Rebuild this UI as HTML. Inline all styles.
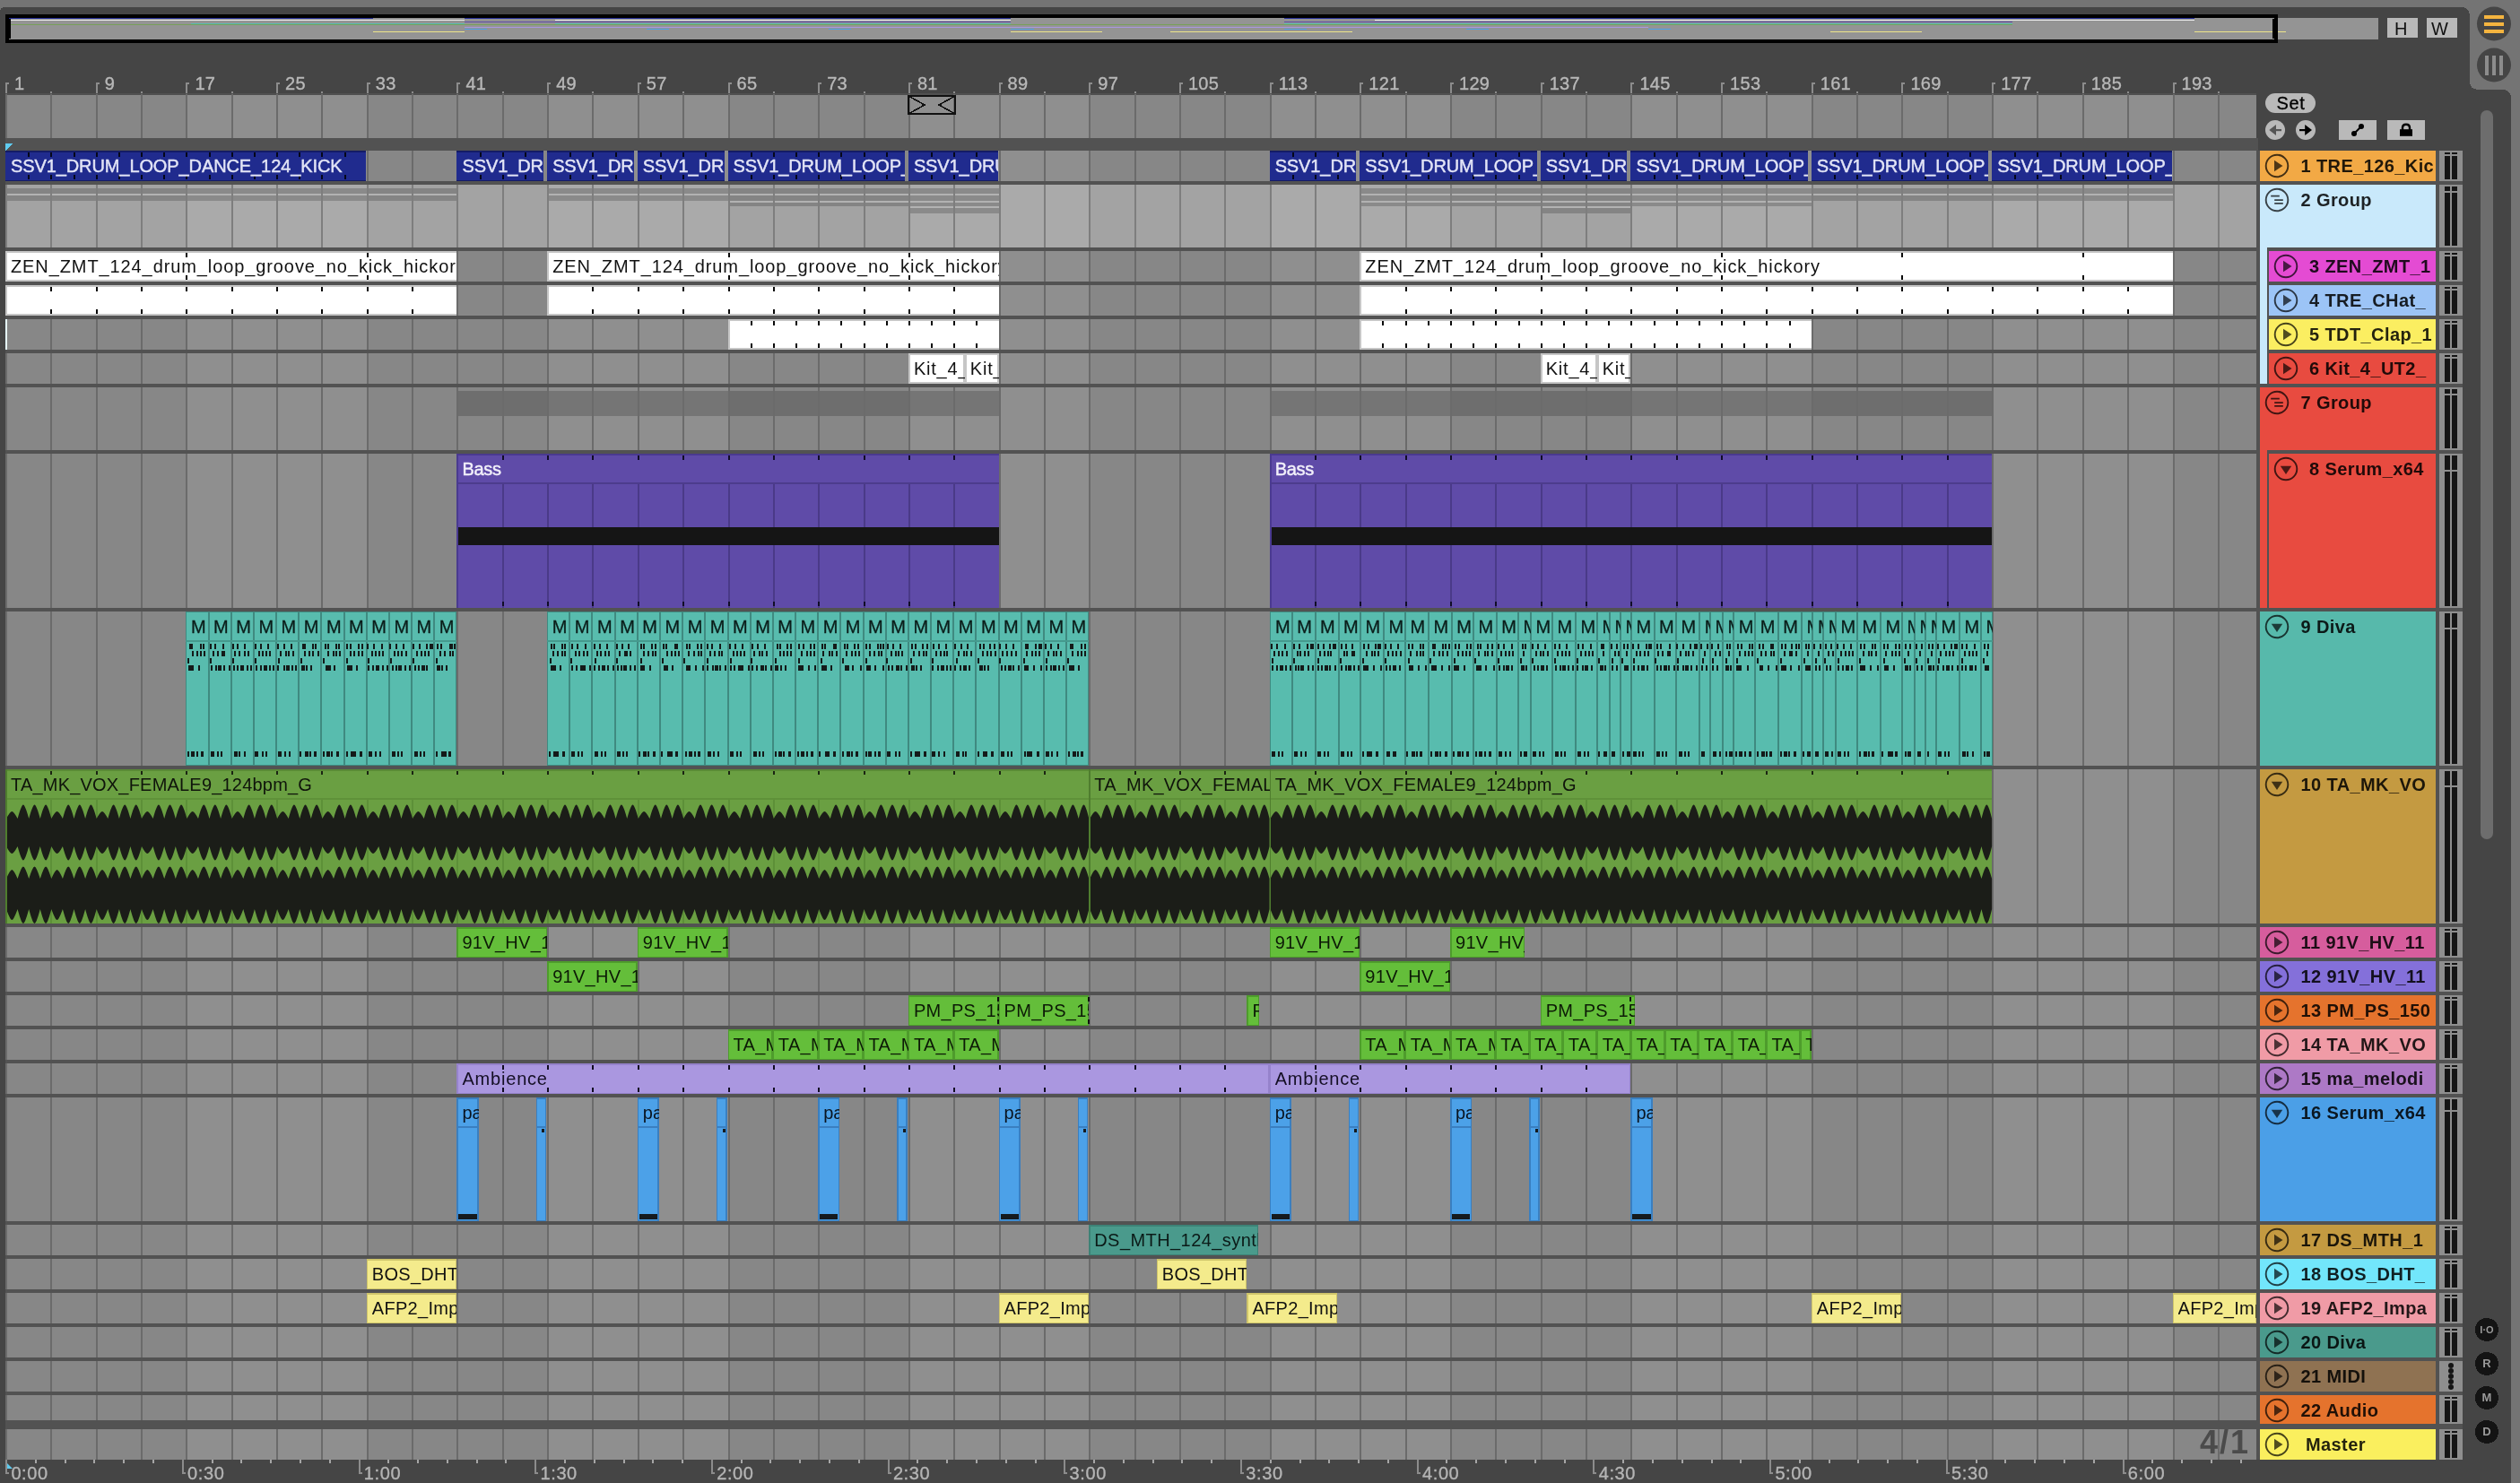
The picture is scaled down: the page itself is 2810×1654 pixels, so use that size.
<!DOCTYPE html>
<html><head><meta charset="utf-8"><title>Arrangement</title>
<style>
html,body{margin:0;padding:0;}
body{width:2810px;height:1654px;position:relative;overflow:hidden;background:#747474;font-family:"Liberation Sans", sans-serif;}
svg{position:absolute;left:0;top:0;}
.t{position:absolute;white-space:nowrap;font-family:"Liberation Sans", sans-serif;}
</style></head><body>
<svg width="2810" height="1654" viewBox="0 0 2810 1654" shape-rendering="crispEdges">
<rect x="0.00" y="0.00" width="2810.00" height="1654.00" fill="#747474"/>
<path d="M0 14 Q0 8 6 8 L2744 8 Q2754 8 2754 18 L2754 90 Q2754 100 2764 100 L2790 100 Q2800 100 2800 110 L2800 1654 L0 1654 Z" fill="#454545"/>
<rect x="6.00" y="105.00" width="201.38" height="49.00" fill="#878787"/>
<rect x="207.38" y="105.00" width="201.38" height="49.00" fill="#8f8f8f"/>
<rect x="408.75" y="105.00" width="201.38" height="49.00" fill="#878787"/>
<rect x="610.13" y="105.00" width="201.38" height="49.00" fill="#8f8f8f"/>
<rect x="811.50" y="105.00" width="201.38" height="49.00" fill="#878787"/>
<rect x="1012.88" y="105.00" width="201.38" height="49.00" fill="#8f8f8f"/>
<rect x="1214.26" y="105.00" width="201.38" height="49.00" fill="#878787"/>
<rect x="1415.63" y="105.00" width="201.38" height="49.00" fill="#8f8f8f"/>
<rect x="1617.01" y="105.00" width="201.38" height="49.00" fill="#878787"/>
<rect x="1818.38" y="105.00" width="201.38" height="49.00" fill="#8f8f8f"/>
<rect x="2019.76" y="105.00" width="201.38" height="49.00" fill="#878787"/>
<rect x="2221.14" y="105.00" width="201.38" height="49.00" fill="#8f8f8f"/>
<rect x="2422.51" y="105.00" width="93.49" height="49.00" fill="#878787"/>
<rect x="6.00" y="104.00" width="2510.00" height="2.00" fill="#505050"/>
<rect x="6.00" y="168.00" width="201.38" height="1460.00" fill="#878787"/>
<rect x="207.38" y="168.00" width="201.38" height="1460.00" fill="#8f8f8f"/>
<rect x="408.75" y="168.00" width="201.38" height="1460.00" fill="#878787"/>
<rect x="610.13" y="168.00" width="201.38" height="1460.00" fill="#8f8f8f"/>
<rect x="811.50" y="168.00" width="201.38" height="1460.00" fill="#878787"/>
<rect x="1012.88" y="168.00" width="201.38" height="1460.00" fill="#8f8f8f"/>
<rect x="1214.26" y="168.00" width="201.38" height="1460.00" fill="#878787"/>
<rect x="1415.63" y="168.00" width="201.38" height="1460.00" fill="#8f8f8f"/>
<rect x="1617.01" y="168.00" width="201.38" height="1460.00" fill="#878787"/>
<rect x="1818.38" y="168.00" width="201.38" height="1460.00" fill="#8f8f8f"/>
<rect x="2019.76" y="168.00" width="201.38" height="1460.00" fill="#878787"/>
<rect x="2221.14" y="168.00" width="201.38" height="1460.00" fill="#8f8f8f"/>
<rect x="2422.51" y="168.00" width="93.49" height="1460.00" fill="#878787"/>
<rect x="6.00" y="206.00" width="201.38" height="70.00" fill="#a3a3a3"/>
<rect x="207.38" y="206.00" width="201.38" height="70.00" fill="#aaaaaa"/>
<rect x="408.75" y="206.00" width="201.38" height="70.00" fill="#a3a3a3"/>
<rect x="610.13" y="206.00" width="201.38" height="70.00" fill="#aaaaaa"/>
<rect x="811.50" y="206.00" width="201.38" height="70.00" fill="#a3a3a3"/>
<rect x="1012.88" y="206.00" width="201.38" height="70.00" fill="#aaaaaa"/>
<rect x="1214.26" y="206.00" width="201.38" height="70.00" fill="#a3a3a3"/>
<rect x="1415.63" y="206.00" width="201.38" height="70.00" fill="#aaaaaa"/>
<rect x="1617.01" y="206.00" width="201.38" height="70.00" fill="#a3a3a3"/>
<rect x="1818.38" y="206.00" width="201.38" height="70.00" fill="#aaaaaa"/>
<rect x="2019.76" y="206.00" width="201.38" height="70.00" fill="#a3a3a3"/>
<rect x="2221.14" y="206.00" width="201.38" height="70.00" fill="#aaaaaa"/>
<rect x="2422.51" y="206.00" width="93.49" height="70.00" fill="#a3a3a3"/>
<rect x="0.00" y="154.00" width="2518.00" height="14.00" fill="#525252"/>
<rect x="6.00" y="210.00" width="503.44" height="6.00" fill="rgba(0,0,0,0.19)"/>
<rect x="6.00" y="218.00" width="503.44" height="6.00" fill="rgba(0,0,0,0.19)"/>
<rect x="610.13" y="210.00" width="503.44" height="6.00" fill="rgba(0,0,0,0.19)"/>
<rect x="610.13" y="218.00" width="503.44" height="6.00" fill="rgba(0,0,0,0.19)"/>
<rect x="1516.32" y="210.00" width="906.19" height="6.00" fill="rgba(0,0,0,0.19)"/>
<rect x="1516.32" y="218.00" width="906.19" height="6.00" fill="rgba(0,0,0,0.19)"/>
<rect x="811.50" y="226.00" width="302.06" height="4.00" fill="rgba(0,0,0,0.19)"/>
<rect x="1516.32" y="226.00" width="503.44" height="4.00" fill="rgba(0,0,0,0.19)"/>
<rect x="1012.88" y="232.00" width="100.69" height="6.00" fill="rgba(0,0,0,0.19)"/>
<rect x="1717.70" y="232.00" width="100.69" height="6.00" fill="rgba(0,0,0,0.19)"/>
<rect x="6.00" y="216.00" width="503.44" height="2.00" fill="#b2b2b2"/>
<rect x="610.13" y="216.00" width="503.44" height="2.00" fill="#b2b2b2"/>
<rect x="1516.32" y="216.00" width="906.19" height="2.00" fill="#b2b2b2"/>
<rect x="811.50" y="224.00" width="302.06" height="2.00" fill="#b2b2b2"/>
<rect x="1516.32" y="224.00" width="503.44" height="2.00" fill="#b2b2b2"/>
<rect x="1012.88" y="230.00" width="100.69" height="2.00" fill="#b2b2b2"/>
<rect x="1717.70" y="230.00" width="100.69" height="2.00" fill="#b2b2b2"/>
<rect x="509.44" y="436.00" width="604.13" height="28.00" fill="rgba(0,0,0,0.18)"/>
<rect x="1415.63" y="436.00" width="805.50" height="28.00" fill="rgba(0,0,0,0.18)"/>
<rect x="6.00" y="105.00" width="2.00" height="49.00" fill="#6b6b6b"/>
<rect x="6.00" y="168.00" width="2.00" height="1460.00" fill="#6b6b6b"/>
<rect x="6.00" y="206.00" width="2.00" height="70.00" fill="#7e7e7e"/>
<rect x="56.34" y="105.00" width="2.00" height="49.00" fill="#6b6b6b"/>
<rect x="56.34" y="168.00" width="2.00" height="1460.00" fill="#6b6b6b"/>
<rect x="56.34" y="206.00" width="2.00" height="70.00" fill="#7e7e7e"/>
<rect x="106.69" y="105.00" width="2.00" height="49.00" fill="#6b6b6b"/>
<rect x="106.69" y="168.00" width="2.00" height="1460.00" fill="#6b6b6b"/>
<rect x="106.69" y="206.00" width="2.00" height="70.00" fill="#7e7e7e"/>
<rect x="157.03" y="105.00" width="2.00" height="49.00" fill="#6b6b6b"/>
<rect x="157.03" y="168.00" width="2.00" height="1460.00" fill="#6b6b6b"/>
<rect x="157.03" y="206.00" width="2.00" height="70.00" fill="#7e7e7e"/>
<rect x="207.38" y="105.00" width="2.00" height="49.00" fill="#6b6b6b"/>
<rect x="207.38" y="168.00" width="2.00" height="1460.00" fill="#6b6b6b"/>
<rect x="207.38" y="206.00" width="2.00" height="70.00" fill="#7e7e7e"/>
<rect x="257.72" y="105.00" width="2.00" height="49.00" fill="#6b6b6b"/>
<rect x="257.72" y="168.00" width="2.00" height="1460.00" fill="#6b6b6b"/>
<rect x="257.72" y="206.00" width="2.00" height="70.00" fill="#7e7e7e"/>
<rect x="308.06" y="105.00" width="2.00" height="49.00" fill="#6b6b6b"/>
<rect x="308.06" y="168.00" width="2.00" height="1460.00" fill="#6b6b6b"/>
<rect x="308.06" y="206.00" width="2.00" height="70.00" fill="#7e7e7e"/>
<rect x="358.41" y="105.00" width="2.00" height="49.00" fill="#6b6b6b"/>
<rect x="358.41" y="168.00" width="2.00" height="1460.00" fill="#6b6b6b"/>
<rect x="358.41" y="206.00" width="2.00" height="70.00" fill="#7e7e7e"/>
<rect x="408.75" y="105.00" width="2.00" height="49.00" fill="#6b6b6b"/>
<rect x="408.75" y="168.00" width="2.00" height="1460.00" fill="#6b6b6b"/>
<rect x="408.75" y="206.00" width="2.00" height="70.00" fill="#7e7e7e"/>
<rect x="459.10" y="105.00" width="2.00" height="49.00" fill="#6b6b6b"/>
<rect x="459.10" y="168.00" width="2.00" height="1460.00" fill="#6b6b6b"/>
<rect x="459.10" y="206.00" width="2.00" height="70.00" fill="#7e7e7e"/>
<rect x="509.44" y="105.00" width="2.00" height="49.00" fill="#6b6b6b"/>
<rect x="509.44" y="168.00" width="2.00" height="1460.00" fill="#6b6b6b"/>
<rect x="509.44" y="206.00" width="2.00" height="70.00" fill="#7e7e7e"/>
<rect x="559.78" y="105.00" width="2.00" height="49.00" fill="#6b6b6b"/>
<rect x="559.78" y="168.00" width="2.00" height="1460.00" fill="#6b6b6b"/>
<rect x="559.78" y="206.00" width="2.00" height="70.00" fill="#7e7e7e"/>
<rect x="610.13" y="105.00" width="2.00" height="49.00" fill="#6b6b6b"/>
<rect x="610.13" y="168.00" width="2.00" height="1460.00" fill="#6b6b6b"/>
<rect x="610.13" y="206.00" width="2.00" height="70.00" fill="#7e7e7e"/>
<rect x="660.47" y="105.00" width="2.00" height="49.00" fill="#6b6b6b"/>
<rect x="660.47" y="168.00" width="2.00" height="1460.00" fill="#6b6b6b"/>
<rect x="660.47" y="206.00" width="2.00" height="70.00" fill="#7e7e7e"/>
<rect x="710.82" y="105.00" width="2.00" height="49.00" fill="#6b6b6b"/>
<rect x="710.82" y="168.00" width="2.00" height="1460.00" fill="#6b6b6b"/>
<rect x="710.82" y="206.00" width="2.00" height="70.00" fill="#7e7e7e"/>
<rect x="761.16" y="105.00" width="2.00" height="49.00" fill="#6b6b6b"/>
<rect x="761.16" y="168.00" width="2.00" height="1460.00" fill="#6b6b6b"/>
<rect x="761.16" y="206.00" width="2.00" height="70.00" fill="#7e7e7e"/>
<rect x="811.50" y="105.00" width="2.00" height="49.00" fill="#6b6b6b"/>
<rect x="811.50" y="168.00" width="2.00" height="1460.00" fill="#6b6b6b"/>
<rect x="811.50" y="206.00" width="2.00" height="70.00" fill="#7e7e7e"/>
<rect x="861.85" y="105.00" width="2.00" height="49.00" fill="#6b6b6b"/>
<rect x="861.85" y="168.00" width="2.00" height="1460.00" fill="#6b6b6b"/>
<rect x="861.85" y="206.00" width="2.00" height="70.00" fill="#7e7e7e"/>
<rect x="912.19" y="105.00" width="2.00" height="49.00" fill="#6b6b6b"/>
<rect x="912.19" y="168.00" width="2.00" height="1460.00" fill="#6b6b6b"/>
<rect x="912.19" y="206.00" width="2.00" height="70.00" fill="#7e7e7e"/>
<rect x="962.54" y="105.00" width="2.00" height="49.00" fill="#6b6b6b"/>
<rect x="962.54" y="168.00" width="2.00" height="1460.00" fill="#6b6b6b"/>
<rect x="962.54" y="206.00" width="2.00" height="70.00" fill="#7e7e7e"/>
<rect x="1012.88" y="105.00" width="2.00" height="49.00" fill="#6b6b6b"/>
<rect x="1012.88" y="168.00" width="2.00" height="1460.00" fill="#6b6b6b"/>
<rect x="1012.88" y="206.00" width="2.00" height="70.00" fill="#7e7e7e"/>
<rect x="1063.22" y="105.00" width="2.00" height="49.00" fill="#6b6b6b"/>
<rect x="1063.22" y="168.00" width="2.00" height="1460.00" fill="#6b6b6b"/>
<rect x="1063.22" y="206.00" width="2.00" height="70.00" fill="#7e7e7e"/>
<rect x="1113.57" y="105.00" width="2.00" height="49.00" fill="#6b6b6b"/>
<rect x="1113.57" y="168.00" width="2.00" height="1460.00" fill="#6b6b6b"/>
<rect x="1113.57" y="206.00" width="2.00" height="70.00" fill="#7e7e7e"/>
<rect x="1163.91" y="105.00" width="2.00" height="49.00" fill="#6b6b6b"/>
<rect x="1163.91" y="168.00" width="2.00" height="1460.00" fill="#6b6b6b"/>
<rect x="1163.91" y="206.00" width="2.00" height="70.00" fill="#7e7e7e"/>
<rect x="1214.26" y="105.00" width="2.00" height="49.00" fill="#6b6b6b"/>
<rect x="1214.26" y="168.00" width="2.00" height="1460.00" fill="#6b6b6b"/>
<rect x="1214.26" y="206.00" width="2.00" height="70.00" fill="#7e7e7e"/>
<rect x="1264.60" y="105.00" width="2.00" height="49.00" fill="#6b6b6b"/>
<rect x="1264.60" y="168.00" width="2.00" height="1460.00" fill="#6b6b6b"/>
<rect x="1264.60" y="206.00" width="2.00" height="70.00" fill="#7e7e7e"/>
<rect x="1314.94" y="105.00" width="2.00" height="49.00" fill="#6b6b6b"/>
<rect x="1314.94" y="168.00" width="2.00" height="1460.00" fill="#6b6b6b"/>
<rect x="1314.94" y="206.00" width="2.00" height="70.00" fill="#7e7e7e"/>
<rect x="1365.29" y="105.00" width="2.00" height="49.00" fill="#6b6b6b"/>
<rect x="1365.29" y="168.00" width="2.00" height="1460.00" fill="#6b6b6b"/>
<rect x="1365.29" y="206.00" width="2.00" height="70.00" fill="#7e7e7e"/>
<rect x="1415.63" y="105.00" width="2.00" height="49.00" fill="#6b6b6b"/>
<rect x="1415.63" y="168.00" width="2.00" height="1460.00" fill="#6b6b6b"/>
<rect x="1415.63" y="206.00" width="2.00" height="70.00" fill="#7e7e7e"/>
<rect x="1465.98" y="105.00" width="2.00" height="49.00" fill="#6b6b6b"/>
<rect x="1465.98" y="168.00" width="2.00" height="1460.00" fill="#6b6b6b"/>
<rect x="1465.98" y="206.00" width="2.00" height="70.00" fill="#7e7e7e"/>
<rect x="1516.32" y="105.00" width="2.00" height="49.00" fill="#6b6b6b"/>
<rect x="1516.32" y="168.00" width="2.00" height="1460.00" fill="#6b6b6b"/>
<rect x="1516.32" y="206.00" width="2.00" height="70.00" fill="#7e7e7e"/>
<rect x="1566.66" y="105.00" width="2.00" height="49.00" fill="#6b6b6b"/>
<rect x="1566.66" y="168.00" width="2.00" height="1460.00" fill="#6b6b6b"/>
<rect x="1566.66" y="206.00" width="2.00" height="70.00" fill="#7e7e7e"/>
<rect x="1617.01" y="105.00" width="2.00" height="49.00" fill="#6b6b6b"/>
<rect x="1617.01" y="168.00" width="2.00" height="1460.00" fill="#6b6b6b"/>
<rect x="1617.01" y="206.00" width="2.00" height="70.00" fill="#7e7e7e"/>
<rect x="1667.35" y="105.00" width="2.00" height="49.00" fill="#6b6b6b"/>
<rect x="1667.35" y="168.00" width="2.00" height="1460.00" fill="#6b6b6b"/>
<rect x="1667.35" y="206.00" width="2.00" height="70.00" fill="#7e7e7e"/>
<rect x="1717.70" y="105.00" width="2.00" height="49.00" fill="#6b6b6b"/>
<rect x="1717.70" y="168.00" width="2.00" height="1460.00" fill="#6b6b6b"/>
<rect x="1717.70" y="206.00" width="2.00" height="70.00" fill="#7e7e7e"/>
<rect x="1768.04" y="105.00" width="2.00" height="49.00" fill="#6b6b6b"/>
<rect x="1768.04" y="168.00" width="2.00" height="1460.00" fill="#6b6b6b"/>
<rect x="1768.04" y="206.00" width="2.00" height="70.00" fill="#7e7e7e"/>
<rect x="1818.38" y="105.00" width="2.00" height="49.00" fill="#6b6b6b"/>
<rect x="1818.38" y="168.00" width="2.00" height="1460.00" fill="#6b6b6b"/>
<rect x="1818.38" y="206.00" width="2.00" height="70.00" fill="#7e7e7e"/>
<rect x="1868.73" y="105.00" width="2.00" height="49.00" fill="#6b6b6b"/>
<rect x="1868.73" y="168.00" width="2.00" height="1460.00" fill="#6b6b6b"/>
<rect x="1868.73" y="206.00" width="2.00" height="70.00" fill="#7e7e7e"/>
<rect x="1919.07" y="105.00" width="2.00" height="49.00" fill="#6b6b6b"/>
<rect x="1919.07" y="168.00" width="2.00" height="1460.00" fill="#6b6b6b"/>
<rect x="1919.07" y="206.00" width="2.00" height="70.00" fill="#7e7e7e"/>
<rect x="1969.42" y="105.00" width="2.00" height="49.00" fill="#6b6b6b"/>
<rect x="1969.42" y="168.00" width="2.00" height="1460.00" fill="#6b6b6b"/>
<rect x="1969.42" y="206.00" width="2.00" height="70.00" fill="#7e7e7e"/>
<rect x="2019.76" y="105.00" width="2.00" height="49.00" fill="#6b6b6b"/>
<rect x="2019.76" y="168.00" width="2.00" height="1460.00" fill="#6b6b6b"/>
<rect x="2019.76" y="206.00" width="2.00" height="70.00" fill="#7e7e7e"/>
<rect x="2070.10" y="105.00" width="2.00" height="49.00" fill="#6b6b6b"/>
<rect x="2070.10" y="168.00" width="2.00" height="1460.00" fill="#6b6b6b"/>
<rect x="2070.10" y="206.00" width="2.00" height="70.00" fill="#7e7e7e"/>
<rect x="2120.45" y="105.00" width="2.00" height="49.00" fill="#6b6b6b"/>
<rect x="2120.45" y="168.00" width="2.00" height="1460.00" fill="#6b6b6b"/>
<rect x="2120.45" y="206.00" width="2.00" height="70.00" fill="#7e7e7e"/>
<rect x="2170.79" y="105.00" width="2.00" height="49.00" fill="#6b6b6b"/>
<rect x="2170.79" y="168.00" width="2.00" height="1460.00" fill="#6b6b6b"/>
<rect x="2170.79" y="206.00" width="2.00" height="70.00" fill="#7e7e7e"/>
<rect x="2221.14" y="105.00" width="2.00" height="49.00" fill="#6b6b6b"/>
<rect x="2221.14" y="168.00" width="2.00" height="1460.00" fill="#6b6b6b"/>
<rect x="2221.14" y="206.00" width="2.00" height="70.00" fill="#7e7e7e"/>
<rect x="2271.48" y="105.00" width="2.00" height="49.00" fill="#6b6b6b"/>
<rect x="2271.48" y="168.00" width="2.00" height="1460.00" fill="#6b6b6b"/>
<rect x="2271.48" y="206.00" width="2.00" height="70.00" fill="#7e7e7e"/>
<rect x="2321.82" y="105.00" width="2.00" height="49.00" fill="#6b6b6b"/>
<rect x="2321.82" y="168.00" width="2.00" height="1460.00" fill="#6b6b6b"/>
<rect x="2321.82" y="206.00" width="2.00" height="70.00" fill="#7e7e7e"/>
<rect x="2372.17" y="105.00" width="2.00" height="49.00" fill="#6b6b6b"/>
<rect x="2372.17" y="168.00" width="2.00" height="1460.00" fill="#6b6b6b"/>
<rect x="2372.17" y="206.00" width="2.00" height="70.00" fill="#7e7e7e"/>
<rect x="2422.51" y="105.00" width="2.00" height="49.00" fill="#6b6b6b"/>
<rect x="2422.51" y="168.00" width="2.00" height="1460.00" fill="#6b6b6b"/>
<rect x="2422.51" y="206.00" width="2.00" height="70.00" fill="#7e7e7e"/>
<rect x="2472.86" y="105.00" width="2.00" height="49.00" fill="#6b6b6b"/>
<rect x="2472.86" y="168.00" width="2.00" height="1460.00" fill="#6b6b6b"/>
<rect x="2472.86" y="206.00" width="2.00" height="70.00" fill="#7e7e7e"/>
<rect x="0.00" y="202.00" width="2520.00" height="4.00" fill="#525252"/>
<rect x="0.00" y="276.00" width="2520.00" height="4.00" fill="#525252"/>
<rect x="0.00" y="314.00" width="2520.00" height="4.00" fill="#525252"/>
<rect x="0.00" y="352.00" width="2520.00" height="4.00" fill="#525252"/>
<rect x="0.00" y="390.00" width="2520.00" height="4.00" fill="#525252"/>
<rect x="0.00" y="428.00" width="2520.00" height="4.00" fill="#525252"/>
<rect x="0.00" y="502.00" width="2520.00" height="4.00" fill="#525252"/>
<rect x="0.00" y="678.00" width="2520.00" height="4.00" fill="#525252"/>
<rect x="0.00" y="854.00" width="2520.00" height="4.00" fill="#525252"/>
<rect x="0.00" y="1030.00" width="2520.00" height="4.00" fill="#525252"/>
<rect x="0.00" y="1068.00" width="2520.00" height="4.00" fill="#525252"/>
<rect x="0.00" y="1106.00" width="2520.00" height="4.00" fill="#525252"/>
<rect x="0.00" y="1144.00" width="2520.00" height="4.00" fill="#525252"/>
<rect x="0.00" y="1182.00" width="2520.00" height="4.00" fill="#525252"/>
<rect x="0.00" y="1220.00" width="2520.00" height="4.00" fill="#525252"/>
<rect x="0.00" y="1362.00" width="2520.00" height="4.00" fill="#525252"/>
<rect x="0.00" y="1400.00" width="2520.00" height="4.00" fill="#525252"/>
<rect x="0.00" y="1438.00" width="2520.00" height="4.00" fill="#525252"/>
<rect x="0.00" y="1476.00" width="2520.00" height="4.00" fill="#525252"/>
<rect x="0.00" y="1514.00" width="2520.00" height="4.00" fill="#525252"/>
<rect x="0.00" y="1552.00" width="2520.00" height="4.00" fill="#525252"/>
<rect x="0.00" y="1584.00" width="2520.00" height="10.00" fill="#525252"/>
<rect x="0.00" y="105.00" width="6.00" height="1523.00" fill="#454545"/>
<rect x="2516.00" y="168.00" width="4.00" height="1460.00" fill="#525252"/>
<rect x="0.00" y="1628.00" width="2520.00" height="26.00" fill="#454545"/>
<rect x="6.00" y="168.00" width="401.75" height="34.00" fill="#202B8E"/>
<rect x="6.00" y="168.00" width="401.75" height="1.50" fill="#141c66"/>
<rect x="6.00" y="200.50" width="401.75" height="1.50" fill="#141c66"/>
<rect x="31.17" y="170.00" width="2.00" height="5.00" fill="#05071a"/>
<rect x="31.17" y="195.00" width="2.00" height="5.00" fill="#05071a"/>
<rect x="56.34" y="170.00" width="2.00" height="5.00" fill="#05071a"/>
<rect x="56.34" y="195.00" width="2.00" height="5.00" fill="#05071a"/>
<rect x="81.52" y="170.00" width="2.00" height="5.00" fill="#05071a"/>
<rect x="81.52" y="195.00" width="2.00" height="5.00" fill="#05071a"/>
<rect x="106.69" y="170.00" width="2.00" height="5.00" fill="#05071a"/>
<rect x="106.69" y="195.00" width="2.00" height="5.00" fill="#05071a"/>
<rect x="131.86" y="170.00" width="2.00" height="5.00" fill="#05071a"/>
<rect x="131.86" y="195.00" width="2.00" height="5.00" fill="#05071a"/>
<rect x="157.03" y="170.00" width="2.00" height="5.00" fill="#05071a"/>
<rect x="157.03" y="195.00" width="2.00" height="5.00" fill="#05071a"/>
<rect x="182.20" y="170.00" width="2.00" height="5.00" fill="#05071a"/>
<rect x="182.20" y="195.00" width="2.00" height="5.00" fill="#05071a"/>
<rect x="207.38" y="170.00" width="2.00" height="5.00" fill="#05071a"/>
<rect x="207.38" y="195.00" width="2.00" height="5.00" fill="#05071a"/>
<rect x="232.55" y="170.00" width="2.00" height="5.00" fill="#05071a"/>
<rect x="232.55" y="195.00" width="2.00" height="5.00" fill="#05071a"/>
<rect x="257.72" y="170.00" width="2.00" height="5.00" fill="#05071a"/>
<rect x="257.72" y="195.00" width="2.00" height="5.00" fill="#05071a"/>
<rect x="282.89" y="170.00" width="2.00" height="5.00" fill="#05071a"/>
<rect x="282.89" y="195.00" width="2.00" height="5.00" fill="#05071a"/>
<rect x="308.06" y="170.00" width="2.00" height="5.00" fill="#05071a"/>
<rect x="308.06" y="195.00" width="2.00" height="5.00" fill="#05071a"/>
<rect x="333.24" y="170.00" width="2.00" height="5.00" fill="#05071a"/>
<rect x="333.24" y="195.00" width="2.00" height="5.00" fill="#05071a"/>
<rect x="358.41" y="170.00" width="2.00" height="5.00" fill="#05071a"/>
<rect x="358.41" y="195.00" width="2.00" height="5.00" fill="#05071a"/>
<rect x="383.58" y="170.00" width="2.00" height="5.00" fill="#05071a"/>
<rect x="383.58" y="195.00" width="2.00" height="5.00" fill="#05071a"/>
<rect x="509.44" y="168.00" width="96.69" height="34.00" fill="#202B8E"/>
<rect x="509.44" y="168.00" width="96.69" height="1.50" fill="#141c66"/>
<rect x="509.44" y="200.50" width="96.69" height="1.50" fill="#141c66"/>
<rect x="534.61" y="170.00" width="2.00" height="5.00" fill="#05071a"/>
<rect x="534.61" y="195.00" width="2.00" height="5.00" fill="#05071a"/>
<rect x="559.78" y="170.00" width="2.00" height="5.00" fill="#05071a"/>
<rect x="559.78" y="195.00" width="2.00" height="5.00" fill="#05071a"/>
<rect x="584.96" y="170.00" width="2.00" height="5.00" fill="#05071a"/>
<rect x="584.96" y="195.00" width="2.00" height="5.00" fill="#05071a"/>
<rect x="610.13" y="168.00" width="96.69" height="34.00" fill="#202B8E"/>
<rect x="610.13" y="168.00" width="96.69" height="1.50" fill="#141c66"/>
<rect x="610.13" y="200.50" width="96.69" height="1.50" fill="#141c66"/>
<rect x="635.30" y="170.00" width="2.00" height="5.00" fill="#05071a"/>
<rect x="635.30" y="195.00" width="2.00" height="5.00" fill="#05071a"/>
<rect x="660.47" y="170.00" width="2.00" height="5.00" fill="#05071a"/>
<rect x="660.47" y="195.00" width="2.00" height="5.00" fill="#05071a"/>
<rect x="685.64" y="170.00" width="2.00" height="5.00" fill="#05071a"/>
<rect x="685.64" y="195.00" width="2.00" height="5.00" fill="#05071a"/>
<rect x="710.82" y="168.00" width="96.69" height="34.00" fill="#202B8E"/>
<rect x="710.82" y="168.00" width="96.69" height="1.50" fill="#141c66"/>
<rect x="710.82" y="200.50" width="96.69" height="1.50" fill="#141c66"/>
<rect x="735.99" y="170.00" width="2.00" height="5.00" fill="#05071a"/>
<rect x="735.99" y="195.00" width="2.00" height="5.00" fill="#05071a"/>
<rect x="761.16" y="170.00" width="2.00" height="5.00" fill="#05071a"/>
<rect x="761.16" y="195.00" width="2.00" height="5.00" fill="#05071a"/>
<rect x="786.33" y="170.00" width="2.00" height="5.00" fill="#05071a"/>
<rect x="786.33" y="195.00" width="2.00" height="5.00" fill="#05071a"/>
<rect x="811.50" y="168.00" width="197.38" height="34.00" fill="#202B8E"/>
<rect x="811.50" y="168.00" width="197.38" height="1.50" fill="#141c66"/>
<rect x="811.50" y="200.50" width="197.38" height="1.50" fill="#141c66"/>
<rect x="836.68" y="170.00" width="2.00" height="5.00" fill="#05071a"/>
<rect x="836.68" y="195.00" width="2.00" height="5.00" fill="#05071a"/>
<rect x="861.85" y="170.00" width="2.00" height="5.00" fill="#05071a"/>
<rect x="861.85" y="195.00" width="2.00" height="5.00" fill="#05071a"/>
<rect x="887.02" y="170.00" width="2.00" height="5.00" fill="#05071a"/>
<rect x="887.02" y="195.00" width="2.00" height="5.00" fill="#05071a"/>
<rect x="912.19" y="170.00" width="2.00" height="5.00" fill="#05071a"/>
<rect x="912.19" y="195.00" width="2.00" height="5.00" fill="#05071a"/>
<rect x="937.36" y="170.00" width="2.00" height="5.00" fill="#05071a"/>
<rect x="937.36" y="195.00" width="2.00" height="5.00" fill="#05071a"/>
<rect x="962.54" y="170.00" width="2.00" height="5.00" fill="#05071a"/>
<rect x="962.54" y="195.00" width="2.00" height="5.00" fill="#05071a"/>
<rect x="987.71" y="170.00" width="2.00" height="5.00" fill="#05071a"/>
<rect x="987.71" y="195.00" width="2.00" height="5.00" fill="#05071a"/>
<rect x="1012.88" y="168.00" width="99.69" height="34.00" fill="#202B8E"/>
<rect x="1012.88" y="168.00" width="99.69" height="1.50" fill="#141c66"/>
<rect x="1012.88" y="200.50" width="99.69" height="1.50" fill="#141c66"/>
<rect x="1038.05" y="170.00" width="2.00" height="5.00" fill="#05071a"/>
<rect x="1038.05" y="195.00" width="2.00" height="5.00" fill="#05071a"/>
<rect x="1063.22" y="170.00" width="2.00" height="5.00" fill="#05071a"/>
<rect x="1063.22" y="195.00" width="2.00" height="5.00" fill="#05071a"/>
<rect x="1088.40" y="170.00" width="2.00" height="5.00" fill="#05071a"/>
<rect x="1088.40" y="195.00" width="2.00" height="5.00" fill="#05071a"/>
<rect x="1415.63" y="168.00" width="96.69" height="34.00" fill="#202B8E"/>
<rect x="1415.63" y="168.00" width="96.69" height="1.50" fill="#141c66"/>
<rect x="1415.63" y="200.50" width="96.69" height="1.50" fill="#141c66"/>
<rect x="1440.80" y="170.00" width="2.00" height="5.00" fill="#05071a"/>
<rect x="1440.80" y="195.00" width="2.00" height="5.00" fill="#05071a"/>
<rect x="1465.98" y="170.00" width="2.00" height="5.00" fill="#05071a"/>
<rect x="1465.98" y="195.00" width="2.00" height="5.00" fill="#05071a"/>
<rect x="1491.15" y="170.00" width="2.00" height="5.00" fill="#05071a"/>
<rect x="1491.15" y="195.00" width="2.00" height="5.00" fill="#05071a"/>
<rect x="1516.32" y="168.00" width="197.38" height="34.00" fill="#202B8E"/>
<rect x="1516.32" y="168.00" width="197.38" height="1.50" fill="#141c66"/>
<rect x="1516.32" y="200.50" width="197.38" height="1.50" fill="#141c66"/>
<rect x="1541.49" y="170.00" width="2.00" height="5.00" fill="#05071a"/>
<rect x="1541.49" y="195.00" width="2.00" height="5.00" fill="#05071a"/>
<rect x="1566.66" y="170.00" width="2.00" height="5.00" fill="#05071a"/>
<rect x="1566.66" y="195.00" width="2.00" height="5.00" fill="#05071a"/>
<rect x="1591.84" y="170.00" width="2.00" height="5.00" fill="#05071a"/>
<rect x="1591.84" y="195.00" width="2.00" height="5.00" fill="#05071a"/>
<rect x="1617.01" y="170.00" width="2.00" height="5.00" fill="#05071a"/>
<rect x="1617.01" y="195.00" width="2.00" height="5.00" fill="#05071a"/>
<rect x="1642.18" y="170.00" width="2.00" height="5.00" fill="#05071a"/>
<rect x="1642.18" y="195.00" width="2.00" height="5.00" fill="#05071a"/>
<rect x="1667.35" y="170.00" width="2.00" height="5.00" fill="#05071a"/>
<rect x="1667.35" y="195.00" width="2.00" height="5.00" fill="#05071a"/>
<rect x="1692.52" y="170.00" width="2.00" height="5.00" fill="#05071a"/>
<rect x="1692.52" y="195.00" width="2.00" height="5.00" fill="#05071a"/>
<rect x="1717.70" y="168.00" width="96.69" height="34.00" fill="#202B8E"/>
<rect x="1717.70" y="168.00" width="96.69" height="1.50" fill="#141c66"/>
<rect x="1717.70" y="200.50" width="96.69" height="1.50" fill="#141c66"/>
<rect x="1742.87" y="170.00" width="2.00" height="5.00" fill="#05071a"/>
<rect x="1742.87" y="195.00" width="2.00" height="5.00" fill="#05071a"/>
<rect x="1768.04" y="170.00" width="2.00" height="5.00" fill="#05071a"/>
<rect x="1768.04" y="195.00" width="2.00" height="5.00" fill="#05071a"/>
<rect x="1793.21" y="170.00" width="2.00" height="5.00" fill="#05071a"/>
<rect x="1793.21" y="195.00" width="2.00" height="5.00" fill="#05071a"/>
<rect x="1818.38" y="168.00" width="197.38" height="34.00" fill="#202B8E"/>
<rect x="1818.38" y="168.00" width="197.38" height="1.50" fill="#141c66"/>
<rect x="1818.38" y="200.50" width="197.38" height="1.50" fill="#141c66"/>
<rect x="1843.56" y="170.00" width="2.00" height="5.00" fill="#05071a"/>
<rect x="1843.56" y="195.00" width="2.00" height="5.00" fill="#05071a"/>
<rect x="1868.73" y="170.00" width="2.00" height="5.00" fill="#05071a"/>
<rect x="1868.73" y="195.00" width="2.00" height="5.00" fill="#05071a"/>
<rect x="1893.90" y="170.00" width="2.00" height="5.00" fill="#05071a"/>
<rect x="1893.90" y="195.00" width="2.00" height="5.00" fill="#05071a"/>
<rect x="1919.07" y="170.00" width="2.00" height="5.00" fill="#05071a"/>
<rect x="1919.07" y="195.00" width="2.00" height="5.00" fill="#05071a"/>
<rect x="1944.24" y="170.00" width="2.00" height="5.00" fill="#05071a"/>
<rect x="1944.24" y="195.00" width="2.00" height="5.00" fill="#05071a"/>
<rect x="1969.42" y="170.00" width="2.00" height="5.00" fill="#05071a"/>
<rect x="1969.42" y="195.00" width="2.00" height="5.00" fill="#05071a"/>
<rect x="1994.59" y="170.00" width="2.00" height="5.00" fill="#05071a"/>
<rect x="1994.59" y="195.00" width="2.00" height="5.00" fill="#05071a"/>
<rect x="2019.76" y="168.00" width="197.38" height="34.00" fill="#202B8E"/>
<rect x="2019.76" y="168.00" width="197.38" height="1.50" fill="#141c66"/>
<rect x="2019.76" y="200.50" width="197.38" height="1.50" fill="#141c66"/>
<rect x="2044.93" y="170.00" width="2.00" height="5.00" fill="#05071a"/>
<rect x="2044.93" y="195.00" width="2.00" height="5.00" fill="#05071a"/>
<rect x="2070.10" y="170.00" width="2.00" height="5.00" fill="#05071a"/>
<rect x="2070.10" y="195.00" width="2.00" height="5.00" fill="#05071a"/>
<rect x="2095.28" y="170.00" width="2.00" height="5.00" fill="#05071a"/>
<rect x="2095.28" y="195.00" width="2.00" height="5.00" fill="#05071a"/>
<rect x="2120.45" y="170.00" width="2.00" height="5.00" fill="#05071a"/>
<rect x="2120.45" y="195.00" width="2.00" height="5.00" fill="#05071a"/>
<rect x="2145.62" y="170.00" width="2.00" height="5.00" fill="#05071a"/>
<rect x="2145.62" y="195.00" width="2.00" height="5.00" fill="#05071a"/>
<rect x="2170.79" y="170.00" width="2.00" height="5.00" fill="#05071a"/>
<rect x="2170.79" y="195.00" width="2.00" height="5.00" fill="#05071a"/>
<rect x="2195.96" y="170.00" width="2.00" height="5.00" fill="#05071a"/>
<rect x="2195.96" y="195.00" width="2.00" height="5.00" fill="#05071a"/>
<rect x="2221.14" y="168.00" width="200.38" height="34.00" fill="#202B8E"/>
<rect x="2221.14" y="168.00" width="200.38" height="1.50" fill="#141c66"/>
<rect x="2221.14" y="200.50" width="200.38" height="1.50" fill="#141c66"/>
<rect x="2246.31" y="170.00" width="2.00" height="5.00" fill="#05071a"/>
<rect x="2246.31" y="195.00" width="2.00" height="5.00" fill="#05071a"/>
<rect x="2271.48" y="170.00" width="2.00" height="5.00" fill="#05071a"/>
<rect x="2271.48" y="195.00" width="2.00" height="5.00" fill="#05071a"/>
<rect x="2296.65" y="170.00" width="2.00" height="5.00" fill="#05071a"/>
<rect x="2296.65" y="195.00" width="2.00" height="5.00" fill="#05071a"/>
<rect x="2321.82" y="170.00" width="2.00" height="5.00" fill="#05071a"/>
<rect x="2321.82" y="195.00" width="2.00" height="5.00" fill="#05071a"/>
<rect x="2347.00" y="170.00" width="2.00" height="5.00" fill="#05071a"/>
<rect x="2347.00" y="195.00" width="2.00" height="5.00" fill="#05071a"/>
<rect x="2372.17" y="170.00" width="2.00" height="5.00" fill="#05071a"/>
<rect x="2372.17" y="195.00" width="2.00" height="5.00" fill="#05071a"/>
<rect x="2397.34" y="170.00" width="2.00" height="5.00" fill="#05071a"/>
<rect x="2397.34" y="195.00" width="2.00" height="5.00" fill="#05071a"/>
<rect x="6.00" y="280.00" width="503.44" height="34.00" fill="#ffffff"/>
<rect x="6.00" y="280.00" width="503.44" height="2.00" fill="#c6c6c6"/>
<rect x="6.00" y="312.00" width="503.44" height="2.00" fill="#c6c6c6"/>
<rect x="6.00" y="280.00" width="2.00" height="34.00" fill="#c6c6c6"/>
<rect x="207.38" y="282.00" width="2.00" height="5.00" fill="#0a0a0a"/>
<rect x="207.38" y="307.00" width="2.00" height="5.00" fill="#0a0a0a"/>
<rect x="408.75" y="282.00" width="2.00" height="5.00" fill="#0a0a0a"/>
<rect x="408.75" y="307.00" width="2.00" height="5.00" fill="#0a0a0a"/>
<rect x="6.00" y="318.00" width="503.44" height="34.00" fill="#ffffff"/>
<rect x="6.00" y="318.00" width="503.44" height="2.00" fill="#c6c6c6"/>
<rect x="6.00" y="350.00" width="503.44" height="2.00" fill="#c6c6c6"/>
<rect x="6.00" y="318.00" width="2.00" height="34.00" fill="#c6c6c6"/>
<rect x="56.34" y="320.00" width="2.00" height="5.00" fill="#0a0a0a"/>
<rect x="56.34" y="345.00" width="2.00" height="5.00" fill="#0a0a0a"/>
<rect x="106.69" y="320.00" width="2.00" height="5.00" fill="#0a0a0a"/>
<rect x="106.69" y="345.00" width="2.00" height="5.00" fill="#0a0a0a"/>
<rect x="157.03" y="320.00" width="2.00" height="5.00" fill="#0a0a0a"/>
<rect x="157.03" y="345.00" width="2.00" height="5.00" fill="#0a0a0a"/>
<rect x="207.38" y="320.00" width="2.00" height="5.00" fill="#0a0a0a"/>
<rect x="207.38" y="345.00" width="2.00" height="5.00" fill="#0a0a0a"/>
<rect x="257.72" y="320.00" width="2.00" height="5.00" fill="#0a0a0a"/>
<rect x="257.72" y="345.00" width="2.00" height="5.00" fill="#0a0a0a"/>
<rect x="308.06" y="320.00" width="2.00" height="5.00" fill="#0a0a0a"/>
<rect x="308.06" y="345.00" width="2.00" height="5.00" fill="#0a0a0a"/>
<rect x="358.41" y="320.00" width="2.00" height="5.00" fill="#0a0a0a"/>
<rect x="358.41" y="345.00" width="2.00" height="5.00" fill="#0a0a0a"/>
<rect x="408.75" y="320.00" width="2.00" height="5.00" fill="#0a0a0a"/>
<rect x="408.75" y="345.00" width="2.00" height="5.00" fill="#0a0a0a"/>
<rect x="459.10" y="320.00" width="2.00" height="5.00" fill="#0a0a0a"/>
<rect x="459.10" y="345.00" width="2.00" height="5.00" fill="#0a0a0a"/>
<rect x="610.13" y="280.00" width="503.44" height="34.00" fill="#ffffff"/>
<rect x="610.13" y="280.00" width="503.44" height="2.00" fill="#c6c6c6"/>
<rect x="610.13" y="312.00" width="503.44" height="2.00" fill="#c6c6c6"/>
<rect x="610.13" y="280.00" width="2.00" height="34.00" fill="#c6c6c6"/>
<rect x="811.50" y="282.00" width="2.00" height="5.00" fill="#0a0a0a"/>
<rect x="811.50" y="307.00" width="2.00" height="5.00" fill="#0a0a0a"/>
<rect x="1012.88" y="282.00" width="2.00" height="5.00" fill="#0a0a0a"/>
<rect x="1012.88" y="307.00" width="2.00" height="5.00" fill="#0a0a0a"/>
<rect x="610.13" y="318.00" width="503.44" height="34.00" fill="#ffffff"/>
<rect x="610.13" y="318.00" width="503.44" height="2.00" fill="#c6c6c6"/>
<rect x="610.13" y="350.00" width="503.44" height="2.00" fill="#c6c6c6"/>
<rect x="610.13" y="318.00" width="2.00" height="34.00" fill="#c6c6c6"/>
<rect x="660.47" y="320.00" width="2.00" height="5.00" fill="#0a0a0a"/>
<rect x="660.47" y="345.00" width="2.00" height="5.00" fill="#0a0a0a"/>
<rect x="710.82" y="320.00" width="2.00" height="5.00" fill="#0a0a0a"/>
<rect x="710.82" y="345.00" width="2.00" height="5.00" fill="#0a0a0a"/>
<rect x="761.16" y="320.00" width="2.00" height="5.00" fill="#0a0a0a"/>
<rect x="761.16" y="345.00" width="2.00" height="5.00" fill="#0a0a0a"/>
<rect x="811.50" y="320.00" width="2.00" height="5.00" fill="#0a0a0a"/>
<rect x="811.50" y="345.00" width="2.00" height="5.00" fill="#0a0a0a"/>
<rect x="861.85" y="320.00" width="2.00" height="5.00" fill="#0a0a0a"/>
<rect x="861.85" y="345.00" width="2.00" height="5.00" fill="#0a0a0a"/>
<rect x="912.19" y="320.00" width="2.00" height="5.00" fill="#0a0a0a"/>
<rect x="912.19" y="345.00" width="2.00" height="5.00" fill="#0a0a0a"/>
<rect x="962.54" y="320.00" width="2.00" height="5.00" fill="#0a0a0a"/>
<rect x="962.54" y="345.00" width="2.00" height="5.00" fill="#0a0a0a"/>
<rect x="1012.88" y="320.00" width="2.00" height="5.00" fill="#0a0a0a"/>
<rect x="1012.88" y="345.00" width="2.00" height="5.00" fill="#0a0a0a"/>
<rect x="1063.22" y="320.00" width="2.00" height="5.00" fill="#0a0a0a"/>
<rect x="1063.22" y="345.00" width="2.00" height="5.00" fill="#0a0a0a"/>
<rect x="1516.32" y="280.00" width="906.19" height="34.00" fill="#ffffff"/>
<rect x="1516.32" y="280.00" width="906.19" height="2.00" fill="#c6c6c6"/>
<rect x="1516.32" y="312.00" width="906.19" height="2.00" fill="#c6c6c6"/>
<rect x="1516.32" y="280.00" width="2.00" height="34.00" fill="#c6c6c6"/>
<rect x="1717.70" y="282.00" width="2.00" height="5.00" fill="#0a0a0a"/>
<rect x="1717.70" y="307.00" width="2.00" height="5.00" fill="#0a0a0a"/>
<rect x="1919.07" y="282.00" width="2.00" height="5.00" fill="#0a0a0a"/>
<rect x="1919.07" y="307.00" width="2.00" height="5.00" fill="#0a0a0a"/>
<rect x="2120.45" y="282.00" width="2.00" height="5.00" fill="#0a0a0a"/>
<rect x="2120.45" y="307.00" width="2.00" height="5.00" fill="#0a0a0a"/>
<rect x="2321.82" y="282.00" width="2.00" height="5.00" fill="#0a0a0a"/>
<rect x="2321.82" y="307.00" width="2.00" height="5.00" fill="#0a0a0a"/>
<rect x="1516.32" y="318.00" width="906.19" height="34.00" fill="#ffffff"/>
<rect x="1516.32" y="318.00" width="906.19" height="2.00" fill="#c6c6c6"/>
<rect x="1516.32" y="350.00" width="906.19" height="2.00" fill="#c6c6c6"/>
<rect x="1516.32" y="318.00" width="2.00" height="34.00" fill="#c6c6c6"/>
<rect x="1566.66" y="320.00" width="2.00" height="5.00" fill="#0a0a0a"/>
<rect x="1566.66" y="345.00" width="2.00" height="5.00" fill="#0a0a0a"/>
<rect x="1617.01" y="320.00" width="2.00" height="5.00" fill="#0a0a0a"/>
<rect x="1617.01" y="345.00" width="2.00" height="5.00" fill="#0a0a0a"/>
<rect x="1667.35" y="320.00" width="2.00" height="5.00" fill="#0a0a0a"/>
<rect x="1667.35" y="345.00" width="2.00" height="5.00" fill="#0a0a0a"/>
<rect x="1717.70" y="320.00" width="2.00" height="5.00" fill="#0a0a0a"/>
<rect x="1717.70" y="345.00" width="2.00" height="5.00" fill="#0a0a0a"/>
<rect x="1768.04" y="320.00" width="2.00" height="5.00" fill="#0a0a0a"/>
<rect x="1768.04" y="345.00" width="2.00" height="5.00" fill="#0a0a0a"/>
<rect x="1818.38" y="320.00" width="2.00" height="5.00" fill="#0a0a0a"/>
<rect x="1818.38" y="345.00" width="2.00" height="5.00" fill="#0a0a0a"/>
<rect x="1868.73" y="320.00" width="2.00" height="5.00" fill="#0a0a0a"/>
<rect x="1868.73" y="345.00" width="2.00" height="5.00" fill="#0a0a0a"/>
<rect x="1919.07" y="320.00" width="2.00" height="5.00" fill="#0a0a0a"/>
<rect x="1919.07" y="345.00" width="2.00" height="5.00" fill="#0a0a0a"/>
<rect x="1969.42" y="320.00" width="2.00" height="5.00" fill="#0a0a0a"/>
<rect x="1969.42" y="345.00" width="2.00" height="5.00" fill="#0a0a0a"/>
<rect x="2019.76" y="320.00" width="2.00" height="5.00" fill="#0a0a0a"/>
<rect x="2019.76" y="345.00" width="2.00" height="5.00" fill="#0a0a0a"/>
<rect x="2070.10" y="320.00" width="2.00" height="5.00" fill="#0a0a0a"/>
<rect x="2070.10" y="345.00" width="2.00" height="5.00" fill="#0a0a0a"/>
<rect x="2120.45" y="320.00" width="2.00" height="5.00" fill="#0a0a0a"/>
<rect x="2120.45" y="345.00" width="2.00" height="5.00" fill="#0a0a0a"/>
<rect x="2170.79" y="320.00" width="2.00" height="5.00" fill="#0a0a0a"/>
<rect x="2170.79" y="345.00" width="2.00" height="5.00" fill="#0a0a0a"/>
<rect x="2221.14" y="320.00" width="2.00" height="5.00" fill="#0a0a0a"/>
<rect x="2221.14" y="345.00" width="2.00" height="5.00" fill="#0a0a0a"/>
<rect x="2271.48" y="320.00" width="2.00" height="5.00" fill="#0a0a0a"/>
<rect x="2271.48" y="345.00" width="2.00" height="5.00" fill="#0a0a0a"/>
<rect x="2321.82" y="320.00" width="2.00" height="5.00" fill="#0a0a0a"/>
<rect x="2321.82" y="345.00" width="2.00" height="5.00" fill="#0a0a0a"/>
<rect x="2372.17" y="320.00" width="2.00" height="5.00" fill="#0a0a0a"/>
<rect x="2372.17" y="345.00" width="2.00" height="5.00" fill="#0a0a0a"/>
<rect x="811.50" y="356.00" width="302.06" height="34.00" fill="#ffffff"/>
<rect x="811.50" y="356.00" width="302.06" height="2.00" fill="#c6c6c6"/>
<rect x="811.50" y="388.00" width="302.06" height="2.00" fill="#c6c6c6"/>
<rect x="811.50" y="356.00" width="2.00" height="34.00" fill="#c6c6c6"/>
<rect x="836.68" y="358.00" width="2.00" height="5.00" fill="#0a0a0a"/>
<rect x="836.68" y="383.00" width="2.00" height="5.00" fill="#0a0a0a"/>
<rect x="861.85" y="358.00" width="2.00" height="5.00" fill="#0a0a0a"/>
<rect x="861.85" y="383.00" width="2.00" height="5.00" fill="#0a0a0a"/>
<rect x="887.02" y="358.00" width="2.00" height="5.00" fill="#0a0a0a"/>
<rect x="887.02" y="383.00" width="2.00" height="5.00" fill="#0a0a0a"/>
<rect x="912.19" y="358.00" width="2.00" height="5.00" fill="#0a0a0a"/>
<rect x="912.19" y="383.00" width="2.00" height="5.00" fill="#0a0a0a"/>
<rect x="937.36" y="358.00" width="2.00" height="5.00" fill="#0a0a0a"/>
<rect x="937.36" y="383.00" width="2.00" height="5.00" fill="#0a0a0a"/>
<rect x="962.54" y="358.00" width="2.00" height="5.00" fill="#0a0a0a"/>
<rect x="962.54" y="383.00" width="2.00" height="5.00" fill="#0a0a0a"/>
<rect x="987.71" y="358.00" width="2.00" height="5.00" fill="#0a0a0a"/>
<rect x="987.71" y="383.00" width="2.00" height="5.00" fill="#0a0a0a"/>
<rect x="1012.88" y="358.00" width="2.00" height="5.00" fill="#0a0a0a"/>
<rect x="1012.88" y="383.00" width="2.00" height="5.00" fill="#0a0a0a"/>
<rect x="1038.05" y="358.00" width="2.00" height="5.00" fill="#0a0a0a"/>
<rect x="1038.05" y="383.00" width="2.00" height="5.00" fill="#0a0a0a"/>
<rect x="1063.22" y="358.00" width="2.00" height="5.00" fill="#0a0a0a"/>
<rect x="1063.22" y="383.00" width="2.00" height="5.00" fill="#0a0a0a"/>
<rect x="1088.40" y="358.00" width="2.00" height="5.00" fill="#0a0a0a"/>
<rect x="1088.40" y="383.00" width="2.00" height="5.00" fill="#0a0a0a"/>
<rect x="1516.32" y="356.00" width="503.44" height="34.00" fill="#ffffff"/>
<rect x="1516.32" y="356.00" width="503.44" height="2.00" fill="#c6c6c6"/>
<rect x="1516.32" y="388.00" width="503.44" height="2.00" fill="#c6c6c6"/>
<rect x="1516.32" y="356.00" width="2.00" height="34.00" fill="#c6c6c6"/>
<rect x="1541.49" y="358.00" width="2.00" height="5.00" fill="#0a0a0a"/>
<rect x="1541.49" y="383.00" width="2.00" height="5.00" fill="#0a0a0a"/>
<rect x="1566.66" y="358.00" width="2.00" height="5.00" fill="#0a0a0a"/>
<rect x="1566.66" y="383.00" width="2.00" height="5.00" fill="#0a0a0a"/>
<rect x="1591.84" y="358.00" width="2.00" height="5.00" fill="#0a0a0a"/>
<rect x="1591.84" y="383.00" width="2.00" height="5.00" fill="#0a0a0a"/>
<rect x="1617.01" y="358.00" width="2.00" height="5.00" fill="#0a0a0a"/>
<rect x="1617.01" y="383.00" width="2.00" height="5.00" fill="#0a0a0a"/>
<rect x="1642.18" y="358.00" width="2.00" height="5.00" fill="#0a0a0a"/>
<rect x="1642.18" y="383.00" width="2.00" height="5.00" fill="#0a0a0a"/>
<rect x="1667.35" y="358.00" width="2.00" height="5.00" fill="#0a0a0a"/>
<rect x="1667.35" y="383.00" width="2.00" height="5.00" fill="#0a0a0a"/>
<rect x="1692.52" y="358.00" width="2.00" height="5.00" fill="#0a0a0a"/>
<rect x="1692.52" y="383.00" width="2.00" height="5.00" fill="#0a0a0a"/>
<rect x="1717.70" y="358.00" width="2.00" height="5.00" fill="#0a0a0a"/>
<rect x="1717.70" y="383.00" width="2.00" height="5.00" fill="#0a0a0a"/>
<rect x="1742.87" y="358.00" width="2.00" height="5.00" fill="#0a0a0a"/>
<rect x="1742.87" y="383.00" width="2.00" height="5.00" fill="#0a0a0a"/>
<rect x="1768.04" y="358.00" width="2.00" height="5.00" fill="#0a0a0a"/>
<rect x="1768.04" y="383.00" width="2.00" height="5.00" fill="#0a0a0a"/>
<rect x="1793.21" y="358.00" width="2.00" height="5.00" fill="#0a0a0a"/>
<rect x="1793.21" y="383.00" width="2.00" height="5.00" fill="#0a0a0a"/>
<rect x="1818.38" y="358.00" width="2.00" height="5.00" fill="#0a0a0a"/>
<rect x="1818.38" y="383.00" width="2.00" height="5.00" fill="#0a0a0a"/>
<rect x="1843.56" y="358.00" width="2.00" height="5.00" fill="#0a0a0a"/>
<rect x="1843.56" y="383.00" width="2.00" height="5.00" fill="#0a0a0a"/>
<rect x="1868.73" y="358.00" width="2.00" height="5.00" fill="#0a0a0a"/>
<rect x="1868.73" y="383.00" width="2.00" height="5.00" fill="#0a0a0a"/>
<rect x="1893.90" y="358.00" width="2.00" height="5.00" fill="#0a0a0a"/>
<rect x="1893.90" y="383.00" width="2.00" height="5.00" fill="#0a0a0a"/>
<rect x="1919.07" y="358.00" width="2.00" height="5.00" fill="#0a0a0a"/>
<rect x="1919.07" y="383.00" width="2.00" height="5.00" fill="#0a0a0a"/>
<rect x="1944.24" y="358.00" width="2.00" height="5.00" fill="#0a0a0a"/>
<rect x="1944.24" y="383.00" width="2.00" height="5.00" fill="#0a0a0a"/>
<rect x="1969.42" y="358.00" width="2.00" height="5.00" fill="#0a0a0a"/>
<rect x="1969.42" y="383.00" width="2.00" height="5.00" fill="#0a0a0a"/>
<rect x="1994.59" y="358.00" width="2.00" height="5.00" fill="#0a0a0a"/>
<rect x="1994.59" y="383.00" width="2.00" height="5.00" fill="#0a0a0a"/>
<rect x="1012.88" y="394.00" width="62.93" height="34.00" fill="#ffffff"/>
<rect x="1073.81" y="394.00" width="2.00" height="34.00" fill="#c6c6c6"/>
<rect x="1012.88" y="394.00" width="62.93" height="2.00" fill="#c6c6c6"/>
<rect x="1012.88" y="426.00" width="62.93" height="2.00" fill="#c6c6c6"/>
<rect x="1012.88" y="394.00" width="2.00" height="34.00" fill="#c6c6c6"/>
<rect x="1075.81" y="394.00" width="37.76" height="34.00" fill="#ffffff"/>
<rect x="1111.57" y="394.00" width="2.00" height="34.00" fill="#c6c6c6"/>
<rect x="1075.81" y="394.00" width="37.76" height="2.00" fill="#c6c6c6"/>
<rect x="1075.81" y="426.00" width="37.76" height="2.00" fill="#c6c6c6"/>
<rect x="1075.81" y="394.00" width="2.00" height="34.00" fill="#c6c6c6"/>
<rect x="1717.70" y="394.00" width="62.93" height="34.00" fill="#ffffff"/>
<rect x="1778.63" y="394.00" width="2.00" height="34.00" fill="#c6c6c6"/>
<rect x="1717.70" y="394.00" width="62.93" height="2.00" fill="#c6c6c6"/>
<rect x="1717.70" y="426.00" width="62.93" height="2.00" fill="#c6c6c6"/>
<rect x="1717.70" y="394.00" width="2.00" height="34.00" fill="#c6c6c6"/>
<rect x="1780.63" y="394.00" width="37.76" height="34.00" fill="#ffffff"/>
<rect x="1816.38" y="394.00" width="2.00" height="34.00" fill="#c6c6c6"/>
<rect x="1780.63" y="394.00" width="37.76" height="2.00" fill="#c6c6c6"/>
<rect x="1780.63" y="426.00" width="37.76" height="2.00" fill="#c6c6c6"/>
<rect x="1780.63" y="394.00" width="2.00" height="34.00" fill="#c6c6c6"/>
<rect x="509.44" y="506.00" width="604.13" height="172.00" fill="#5F4BA8"/>
<rect x="509.44" y="538.00" width="604.13" height="2.00" fill="#4d3c8c"/>
<rect x="559.78" y="540.00" width="2.00" height="138.00" fill="#4a3a88"/>
<rect x="610.13" y="540.00" width="2.00" height="138.00" fill="#4a3a88"/>
<rect x="660.47" y="540.00" width="2.00" height="138.00" fill="#4a3a88"/>
<rect x="710.82" y="540.00" width="2.00" height="138.00" fill="#4a3a88"/>
<rect x="761.16" y="540.00" width="2.00" height="138.00" fill="#4a3a88"/>
<rect x="811.50" y="540.00" width="2.00" height="138.00" fill="#4a3a88"/>
<rect x="861.85" y="540.00" width="2.00" height="138.00" fill="#4a3a88"/>
<rect x="912.19" y="540.00" width="2.00" height="138.00" fill="#4a3a88"/>
<rect x="962.54" y="540.00" width="2.00" height="138.00" fill="#4a3a88"/>
<rect x="1012.88" y="540.00" width="2.00" height="138.00" fill="#4a3a88"/>
<rect x="1063.22" y="540.00" width="2.00" height="138.00" fill="#4a3a88"/>
<rect x="559.78" y="508.00" width="2.00" height="5.00" fill="#100d26"/>
<rect x="610.13" y="508.00" width="2.00" height="5.00" fill="#100d26"/>
<rect x="660.47" y="508.00" width="2.00" height="5.00" fill="#100d26"/>
<rect x="710.82" y="508.00" width="2.00" height="5.00" fill="#100d26"/>
<rect x="761.16" y="508.00" width="2.00" height="5.00" fill="#100d26"/>
<rect x="811.50" y="508.00" width="2.00" height="5.00" fill="#100d26"/>
<rect x="861.85" y="508.00" width="2.00" height="5.00" fill="#100d26"/>
<rect x="912.19" y="508.00" width="2.00" height="5.00" fill="#100d26"/>
<rect x="962.54" y="508.00" width="2.00" height="5.00" fill="#100d26"/>
<rect x="1012.88" y="508.00" width="2.00" height="5.00" fill="#100d26"/>
<rect x="1063.22" y="508.00" width="2.00" height="5.00" fill="#100d26"/>
<rect x="559.78" y="671.00" width="2.00" height="5.00" fill="#100d26"/>
<rect x="610.13" y="671.00" width="2.00" height="5.00" fill="#100d26"/>
<rect x="660.47" y="671.00" width="2.00" height="5.00" fill="#100d26"/>
<rect x="710.82" y="671.00" width="2.00" height="5.00" fill="#100d26"/>
<rect x="761.16" y="671.00" width="2.00" height="5.00" fill="#100d26"/>
<rect x="811.50" y="671.00" width="2.00" height="5.00" fill="#100d26"/>
<rect x="861.85" y="671.00" width="2.00" height="5.00" fill="#100d26"/>
<rect x="912.19" y="671.00" width="2.00" height="5.00" fill="#100d26"/>
<rect x="962.54" y="671.00" width="2.00" height="5.00" fill="#100d26"/>
<rect x="1012.88" y="671.00" width="2.00" height="5.00" fill="#100d26"/>
<rect x="1063.22" y="671.00" width="2.00" height="5.00" fill="#100d26"/>
<rect x="511.44" y="588.00" width="602.13" height="20.00" fill="#151515"/>
<rect x="509.44" y="506.00" width="2.00" height="172.00" fill="#4a3a90"/>
<rect x="509.44" y="506.00" width="604.13" height="1.50" fill="#4a3a90"/>
<rect x="1415.63" y="506.00" width="805.50" height="172.00" fill="#5F4BA8"/>
<rect x="1415.63" y="538.00" width="805.50" height="2.00" fill="#4d3c8c"/>
<rect x="1465.98" y="540.00" width="2.00" height="138.00" fill="#4a3a88"/>
<rect x="1516.32" y="540.00" width="2.00" height="138.00" fill="#4a3a88"/>
<rect x="1566.66" y="540.00" width="2.00" height="138.00" fill="#4a3a88"/>
<rect x="1617.01" y="540.00" width="2.00" height="138.00" fill="#4a3a88"/>
<rect x="1667.35" y="540.00" width="2.00" height="138.00" fill="#4a3a88"/>
<rect x="1717.70" y="540.00" width="2.00" height="138.00" fill="#4a3a88"/>
<rect x="1768.04" y="540.00" width="2.00" height="138.00" fill="#4a3a88"/>
<rect x="1818.38" y="540.00" width="2.00" height="138.00" fill="#4a3a88"/>
<rect x="1868.73" y="540.00" width="2.00" height="138.00" fill="#4a3a88"/>
<rect x="1919.07" y="540.00" width="2.00" height="138.00" fill="#4a3a88"/>
<rect x="1969.42" y="540.00" width="2.00" height="138.00" fill="#4a3a88"/>
<rect x="2019.76" y="540.00" width="2.00" height="138.00" fill="#4a3a88"/>
<rect x="2070.10" y="540.00" width="2.00" height="138.00" fill="#4a3a88"/>
<rect x="2120.45" y="540.00" width="2.00" height="138.00" fill="#4a3a88"/>
<rect x="2170.79" y="540.00" width="2.00" height="138.00" fill="#4a3a88"/>
<rect x="1465.98" y="508.00" width="2.00" height="5.00" fill="#100d26"/>
<rect x="1516.32" y="508.00" width="2.00" height="5.00" fill="#100d26"/>
<rect x="1566.66" y="508.00" width="2.00" height="5.00" fill="#100d26"/>
<rect x="1617.01" y="508.00" width="2.00" height="5.00" fill="#100d26"/>
<rect x="1667.35" y="508.00" width="2.00" height="5.00" fill="#100d26"/>
<rect x="1717.70" y="508.00" width="2.00" height="5.00" fill="#100d26"/>
<rect x="1768.04" y="508.00" width="2.00" height="5.00" fill="#100d26"/>
<rect x="1818.38" y="508.00" width="2.00" height="5.00" fill="#100d26"/>
<rect x="1868.73" y="508.00" width="2.00" height="5.00" fill="#100d26"/>
<rect x="1919.07" y="508.00" width="2.00" height="5.00" fill="#100d26"/>
<rect x="1969.42" y="508.00" width="2.00" height="5.00" fill="#100d26"/>
<rect x="2019.76" y="508.00" width="2.00" height="5.00" fill="#100d26"/>
<rect x="2070.10" y="508.00" width="2.00" height="5.00" fill="#100d26"/>
<rect x="2120.45" y="508.00" width="2.00" height="5.00" fill="#100d26"/>
<rect x="2170.79" y="508.00" width="2.00" height="5.00" fill="#100d26"/>
<rect x="1465.98" y="671.00" width="2.00" height="5.00" fill="#100d26"/>
<rect x="1516.32" y="671.00" width="2.00" height="5.00" fill="#100d26"/>
<rect x="1566.66" y="671.00" width="2.00" height="5.00" fill="#100d26"/>
<rect x="1617.01" y="671.00" width="2.00" height="5.00" fill="#100d26"/>
<rect x="1667.35" y="671.00" width="2.00" height="5.00" fill="#100d26"/>
<rect x="1717.70" y="671.00" width="2.00" height="5.00" fill="#100d26"/>
<rect x="1768.04" y="671.00" width="2.00" height="5.00" fill="#100d26"/>
<rect x="1818.38" y="671.00" width="2.00" height="5.00" fill="#100d26"/>
<rect x="1868.73" y="671.00" width="2.00" height="5.00" fill="#100d26"/>
<rect x="1919.07" y="671.00" width="2.00" height="5.00" fill="#100d26"/>
<rect x="1969.42" y="671.00" width="2.00" height="5.00" fill="#100d26"/>
<rect x="2019.76" y="671.00" width="2.00" height="5.00" fill="#100d26"/>
<rect x="2070.10" y="671.00" width="2.00" height="5.00" fill="#100d26"/>
<rect x="2120.45" y="671.00" width="2.00" height="5.00" fill="#100d26"/>
<rect x="2170.79" y="671.00" width="2.00" height="5.00" fill="#100d26"/>
<rect x="1417.63" y="588.00" width="803.50" height="20.00" fill="#151515"/>
<rect x="1415.63" y="506.00" width="2.00" height="172.00" fill="#4a3a90"/>
<rect x="1415.63" y="506.00" width="805.50" height="1.50" fill="#4a3a90"/>
<rect x="207.38" y="682.00" width="25.17" height="172.00" fill="#58BCAE"/>
<rect x="207.88" y="682.50" width="24.17" height="171" fill="none" stroke="#3F8A80" stroke-width="1"/>
<rect x="207.38" y="714.00" width="25.17" height="1.50" fill="#459a8e"/>
<path d="M210.8 718h2v6h-2zM213.3 718h2v6h-2zM222.9 718h2v6h-2zM226.3 718h2v6h-2zM214.2 726h2v6h-2zM218.9 726h2v6h-2zM222.9 726h2v6h-2zM227.0 726h2v6h-2zM209.4 734h2v6h-2zM210.0 742h4v6h-4zM214.0 742h2v6h-2zM220.9 742h2v6h-2zM209.4 838h2v6h-2zM213.3 838h4v6h-4zM218.9 838h2v6h-2zM224.3 838h3v6h-3z" fill="#141a19"/>
<rect x="232.55" y="682.00" width="25.17" height="172.00" fill="#58BCAE"/>
<rect x="233.05" y="682.50" width="24.17" height="171" fill="none" stroke="#3F8A80" stroke-width="1"/>
<rect x="232.55" y="714.00" width="25.17" height="1.50" fill="#459a8e"/>
<path d="M233.8 718h2v6h-2zM239.1 718h2v6h-2zM248.0 718h2v6h-2zM237.0 726h2v6h-2zM242.0 726h2v6h-2zM246.8 726h2v6h-2zM249.2 726h2v6h-2zM234.0 734h2v6h-2zM234.5 742h2v6h-2zM240.0 742h2v6h-2zM243.0 742h4v6h-4zM249.0 742h2v6h-2zM254.5 742h2v6h-2zM235.3 838h4v6h-4zM241.5 838h2v6h-2zM245.5 838h2v6h-2z" fill="#141a19"/>
<rect x="257.72" y="682.00" width="25.17" height="172.00" fill="#58BCAE"/>
<rect x="258.22" y="682.50" width="24.17" height="171" fill="none" stroke="#3F8A80" stroke-width="1"/>
<rect x="257.72" y="714.00" width="25.17" height="1.50" fill="#459a8e"/>
<path d="M259.0 718h2v6h-2zM264.3 718h2v6h-2zM272.4 718h2v6h-2zM261.4 726h2v6h-2zM266.4 726h2v6h-2zM272.0 726h2v6h-2zM276.0 726h2v6h-2zM259.2 734h2v6h-2zM259.7 742h2v6h-2zM264.4 742h2v6h-2zM268.2 742h4v6h-4zM275.0 742h2v6h-2zM278.9 742h2v6h-2zM260.5 838h4v6h-4zM265.9 838h2v6h-2zM271.5 838h2v6h-2z" fill="#141a19"/>
<rect x="282.89" y="682.00" width="25.17" height="172.00" fill="#58BCAE"/>
<rect x="283.39" y="682.50" width="24.17" height="171" fill="none" stroke="#3F8A80" stroke-width="1"/>
<rect x="282.89" y="714.00" width="25.17" height="1.50" fill="#459a8e"/>
<path d="M284.2 718h2v6h-2zM290.3 718h2v6h-2zM297.6 718h2v6h-2zM288.2 726h2v6h-2zM292.4 726h2v6h-2zM295.6 726h2v6h-2zM299.6 726h2v6h-2zM284.4 734h2v6h-2zM284.9 742h2v6h-2zM290.4 742h2v6h-2zM294.2 742h4v6h-4zM300.2 742h2v6h-2zM304.1 742h2v6h-2zM284.1 838h4v6h-4zM291.9 838h2v6h-2zM295.9 838h2v6h-2z" fill="#141a19"/>
<rect x="308.06" y="682.00" width="25.17" height="172.00" fill="#58BCAE"/>
<rect x="308.56" y="682.50" width="24.17" height="171" fill="none" stroke="#3F8A80" stroke-width="1"/>
<rect x="308.06" y="714.00" width="25.17" height="1.50" fill="#459a8e"/>
<path d="M308.6 718h2v6h-2zM315.5 718h2v6h-2zM323.6 718h2v6h-2zM311.8 726h2v6h-2zM318.4 726h2v6h-2zM320.8 726h2v6h-2zM326.4 726h2v6h-2zM309.6 734h2v6h-2zM309.3 742h2v6h-2zM315.6 742h2v6h-2zM318.6 742h4v6h-4zM324.6 742h2v6h-2zM329.3 742h2v6h-2zM310.1 838h4v6h-4zM317.1 838h2v6h-2zM321.9 838h2v6h-2z" fill="#141a19"/>
<rect x="333.24" y="682.00" width="25.17" height="172.00" fill="#58BCAE"/>
<rect x="333.74" y="682.50" width="24.17" height="171" fill="none" stroke="#3F8A80" stroke-width="1"/>
<rect x="333.24" y="714.00" width="25.17" height="1.50" fill="#459a8e"/>
<path d="M336.6 718h2v6h-2zM339.1 718h2v6h-2zM347.9 718h2v6h-2zM351.3 718h2v6h-2zM339.2 726h2v6h-2zM343.9 726h2v6h-2zM347.9 726h2v6h-2zM353.6 726h2v6h-2zM335.2 734h2v6h-2zM335.8 742h4v6h-4zM341.4 742h2v6h-2zM345.9 742h2v6h-2zM334.4 838h2v6h-2zM339.9 838h4v6h-4zM344.7 838h2v6h-2zM350.1 838h3v6h-3z" fill="#141a19"/>
<rect x="358.41" y="682.00" width="25.17" height="172.00" fill="#58BCAE"/>
<rect x="358.91" y="682.50" width="24.17" height="171" fill="none" stroke="#3F8A80" stroke-width="1"/>
<rect x="358.41" y="714.00" width="25.17" height="1.50" fill="#459a8e"/>
<path d="M361.8 718h2v6h-2zM365.1 718h2v6h-2zM373.9 718h2v6h-2zM376.5 718h2v6h-2zM365.2 726h2v6h-2zM370.7 726h2v6h-2zM373.9 726h2v6h-2zM378.0 726h2v6h-2zM359.6 734h2v6h-2zM362.6 742h4v6h-4zM366.6 742h2v6h-2zM371.9 742h2v6h-2zM359.6 838h2v6h-2zM364.3 838h4v6h-4zM369.1 838h2v6h-2zM374.5 838h3v6h-3z" fill="#141a19"/>
<rect x="383.58" y="682.00" width="25.17" height="172.00" fill="#58BCAE"/>
<rect x="384.08" y="682.50" width="24.17" height="171" fill="none" stroke="#3F8A80" stroke-width="1"/>
<rect x="383.58" y="714.00" width="25.17" height="1.50" fill="#459a8e"/>
<path d="M386.2 718h2v6h-2zM389.5 718h2v6h-2zM399.1 718h2v6h-2zM402.5 718h2v6h-2zM389.6 726h2v6h-2zM394.3 726h2v6h-2zM399.1 726h2v6h-2zM403.2 726h2v6h-2zM386.4 734h2v6h-2zM387.0 742h4v6h-4zM391.0 742h2v6h-2zM397.1 742h2v6h-2zM385.6 838h2v6h-2zM391.1 838h4v6h-4zM395.1 838h2v6h-2zM400.5 838h3v6h-3z" fill="#141a19"/>
<rect x="408.75" y="682.00" width="25.17" height="172.00" fill="#58BCAE"/>
<rect x="409.25" y="682.50" width="24.17" height="171" fill="none" stroke="#3F8A80" stroke-width="1"/>
<rect x="408.75" y="714.00" width="25.17" height="1.50" fill="#459a8e"/>
<path d="M409.3 718h2v6h-2zM416.2 718h2v6h-2zM425.1 718h2v6h-2zM414.1 726h2v6h-2zM417.5 726h2v6h-2zM422.3 726h2v6h-2zM426.3 726h2v6h-2zM409.5 734h2v6h-2zM410.0 742h2v6h-2zM414.7 742h2v6h-2zM418.5 742h4v6h-4zM426.1 742h2v6h-2zM430.8 742h2v6h-2zM410.8 838h4v6h-4zM417.8 838h2v6h-2zM422.6 838h2v6h-2z" fill="#141a19"/>
<rect x="433.92" y="682.00" width="25.17" height="172.00" fill="#58BCAE"/>
<rect x="434.42" y="682.50" width="24.17" height="171" fill="none" stroke="#3F8A80" stroke-width="1"/>
<rect x="433.92" y="714.00" width="25.17" height="1.50" fill="#459a8e"/>
<path d="M434.4 718h2v6h-2zM441.3 718h2v6h-2zM449.4 718h2v6h-2zM439.2 726h2v6h-2zM443.4 726h2v6h-2zM447.4 726h2v6h-2zM452.2 726h2v6h-2zM435.4 734h2v6h-2zM436.7 742h2v6h-2zM441.4 742h2v6h-2zM444.4 742h4v6h-4zM451.2 742h2v6h-2zM455.9 742h2v6h-2zM436.7 838h4v6h-4zM442.9 838h2v6h-2zM446.9 838h2v6h-2z" fill="#141a19"/>
<rect x="459.10" y="682.00" width="25.17" height="172.00" fill="#58BCAE"/>
<rect x="459.60" y="682.50" width="24.17" height="171" fill="none" stroke="#3F8A80" stroke-width="1"/>
<rect x="459.10" y="714.00" width="25.17" height="1.50" fill="#459a8e"/>
<path d="M459.6 718h2v6h-2zM466.5 718h2v6h-2zM474.6 718h2v6h-2zM478.5 718h4v6h-4zM464.4 726h2v6h-2zM468.6 726h2v6h-2zM472.6 726h2v6h-2zM477.4 726h2v6h-2zM459.8 734h2v6h-2zM461.9 742h2v6h-2zM465.8 742h2v6h-2zM470.4 742h4v6h-4zM474.8 742h2v6h-2zM461.9 838h4v6h-4zM468.1 838h2v6h-2zM472.1 838h2v6h-2z" fill="#141a19"/>
<rect x="484.27" y="682.00" width="25.17" height="172.00" fill="#58BCAE"/>
<rect x="484.77" y="682.50" width="24.17" height="171" fill="none" stroke="#3F8A80" stroke-width="1"/>
<rect x="484.27" y="714.00" width="25.17" height="1.50" fill="#459a8e"/>
<path d="M486.9 718h2v6h-2zM491.0 718h2v6h-2zM500.6 718h2v6h-2zM503.2 718h2v6h-2zM505.7 718h2v6h-2zM490.3 726h2v6h-2zM495.0 726h2v6h-2zM500.6 726h2v6h-2zM503.9 726h2v6h-2zM486.3 734h2v6h-2zM486.9 742h4v6h-4zM491.7 742h2v6h-2zM497.0 742h2v6h-2zM485.5 838h2v6h-2zM491.8 838h4v6h-4zM495.8 838h2v6h-2zM500.4 838h3v6h-3z" fill="#141a19"/>
<rect x="610.13" y="682.00" width="25.17" height="172.00" fill="#58BCAE"/>
<rect x="610.63" y="682.50" width="24.17" height="171" fill="none" stroke="#3F8A80" stroke-width="1"/>
<rect x="610.13" y="714.00" width="25.17" height="1.50" fill="#459a8e"/>
<path d="M613.5 718h2v6h-2zM616.8 718h2v6h-2zM625.6 718h2v6h-2zM629.0 718h2v6h-2zM616.1 726h2v6h-2zM620.8 726h2v6h-2zM625.6 726h2v6h-2zM628.9 726h2v6h-2zM612.9 734h2v6h-2zM613.5 742h4v6h-4zM617.5 742h2v6h-2zM623.6 742h2v6h-2zM612.1 838h2v6h-2zM616.8 838h4v6h-4zM620.8 838h2v6h-2zM627.0 838h3v6h-3z" fill="#141a19"/>
<rect x="635.30" y="682.00" width="25.17" height="172.00" fill="#58BCAE"/>
<rect x="635.80" y="682.50" width="24.17" height="171" fill="none" stroke="#3F8A80" stroke-width="1"/>
<rect x="635.30" y="714.00" width="25.17" height="1.50" fill="#459a8e"/>
<path d="M636.6 718h2v6h-2zM642.7 718h2v6h-2zM651.6 718h2v6h-2zM640.6 726h2v6h-2zM644.8 726h2v6h-2zM649.6 726h2v6h-2zM653.6 726h2v6h-2zM636.0 734h2v6h-2zM637.3 742h2v6h-2zM642.0 742h2v6h-2zM646.6 742h4v6h-4zM651.0 742h2v6h-2zM656.5 742h2v6h-2zM637.3 838h4v6h-4zM644.3 838h2v6h-2zM648.3 838h2v6h-2z" fill="#141a19"/>
<rect x="660.47" y="682.00" width="25.17" height="172.00" fill="#58BCAE"/>
<rect x="660.97" y="682.50" width="24.17" height="171" fill="none" stroke="#3F8A80" stroke-width="1"/>
<rect x="660.47" y="714.00" width="25.17" height="1.50" fill="#459a8e"/>
<path d="M661.8 718h2v6h-2zM667.9 718h2v6h-2zM676.0 718h2v6h-2zM665.0 726h2v6h-2zM669.2 726h2v6h-2zM674.0 726h2v6h-2zM678.0 726h2v6h-2zM662.8 734h2v6h-2zM661.7 742h2v6h-2zM667.2 742h2v6h-2zM671.0 742h4v6h-4zM677.0 742h2v6h-2zM682.5 742h2v6h-2zM663.3 838h4v6h-4zM669.5 838h2v6h-2zM673.5 838h2v6h-2z" fill="#141a19"/>
<rect x="685.64" y="682.00" width="25.17" height="172.00" fill="#58BCAE"/>
<rect x="686.14" y="682.50" width="24.17" height="171" fill="none" stroke="#3F8A80" stroke-width="1"/>
<rect x="685.64" y="714.00" width="25.17" height="1.50" fill="#459a8e"/>
<path d="M686.9 718h2v6h-2zM693.0 718h2v6h-2zM700.3 718h2v6h-2zM690.1 726h2v6h-2zM695.9 726h2v6h-2zM698.3 726h2v6h-2zM702.3 726h2v6h-2zM687.1 734h2v6h-2zM688.4 742h2v6h-2zM692.3 742h2v6h-2zM695.3 742h4v6h-4zM702.1 742h2v6h-2zM706.8 742h2v6h-2zM687.6 838h4v6h-4zM693.8 838h2v6h-2zM697.8 838h2v6h-2z" fill="#141a19"/>
<rect x="710.82" y="682.00" width="25.17" height="172.00" fill="#58BCAE"/>
<rect x="711.32" y="682.50" width="24.17" height="171" fill="none" stroke="#3F8A80" stroke-width="1"/>
<rect x="710.82" y="714.00" width="25.17" height="1.50" fill="#459a8e"/>
<path d="M714.2 718h2v6h-2zM716.7 718h2v6h-2zM726.3 718h2v6h-2zM729.7 718h2v6h-2zM716.8 726h2v6h-2zM722.3 726h2v6h-2zM727.1 726h2v6h-2zM730.4 726h2v6h-2zM713.6 734h2v6h-2zM714.2 742h4v6h-4zM717.4 742h2v6h-2zM724.3 742h2v6h-2zM712.0 838h2v6h-2zM716.7 838h4v6h-4zM722.3 838h2v6h-2zM727.7 838h3v6h-3z" fill="#141a19"/>
<rect x="735.99" y="682.00" width="25.17" height="172.00" fill="#58BCAE"/>
<rect x="736.49" y="682.50" width="24.17" height="171" fill="none" stroke="#3F8A80" stroke-width="1"/>
<rect x="735.99" y="714.00" width="25.17" height="1.50" fill="#459a8e"/>
<path d="M738.6 718h2v6h-2zM741.9 718h2v6h-2zM752.3 718h2v6h-2zM754.1 718h2v6h-2zM742.8 726h2v6h-2zM748.3 726h2v6h-2zM751.5 726h2v6h-2zM756.4 726h2v6h-2zM738.0 734h2v6h-2zM740.2 742h4v6h-4zM742.6 742h2v6h-2zM748.7 742h2v6h-2zM737.2 838h2v6h-2zM743.5 838h4v6h-4zM748.3 838h2v6h-2zM752.9 838h3v6h-3z" fill="#141a19"/>
<rect x="761.16" y="682.00" width="25.17" height="172.00" fill="#58BCAE"/>
<rect x="761.66" y="682.50" width="24.17" height="171" fill="none" stroke="#3F8A80" stroke-width="1"/>
<rect x="761.16" y="714.00" width="25.17" height="1.50" fill="#459a8e"/>
<path d="M764.6 718h2v6h-2zM767.9 718h2v6h-2zM776.7 718h2v6h-2zM780.9 718h2v6h-2zM767.2 726h2v6h-2zM772.7 726h2v6h-2zM777.5 726h2v6h-2zM780.8 726h2v6h-2zM762.4 734h2v6h-2zM765.4 742h4v6h-4zM767.8 742h2v6h-2zM774.7 742h2v6h-2zM782.6 742h2v6h-2zM764.0 838h2v6h-2zM767.9 838h4v6h-4zM773.5 838h2v6h-2zM778.1 838h3v6h-3z" fill="#141a19"/>
<rect x="786.33" y="682.00" width="25.17" height="172.00" fill="#58BCAE"/>
<rect x="786.83" y="682.50" width="24.17" height="171" fill="none" stroke="#3F8A80" stroke-width="1"/>
<rect x="786.33" y="714.00" width="25.17" height="1.50" fill="#459a8e"/>
<path d="M787.6 718h2v6h-2zM792.9 718h2v6h-2zM801.8 718h2v6h-2zM790.8 726h2v6h-2zM795.8 726h2v6h-2zM800.6 726h2v6h-2zM803.8 726h2v6h-2zM787.8 734h2v6h-2zM788.3 742h2v6h-2zM793.8 742h2v6h-2zM796.8 742h4v6h-4zM802.0 742h2v6h-2zM808.3 742h2v6h-2zM789.1 838h4v6h-4zM794.5 838h2v6h-2zM800.1 838h2v6h-2z" fill="#141a19"/>
<rect x="811.50" y="682.00" width="25.17" height="172.00" fill="#58BCAE"/>
<rect x="812.00" y="682.50" width="24.17" height="171" fill="none" stroke="#3F8A80" stroke-width="1"/>
<rect x="811.50" y="714.00" width="25.17" height="1.50" fill="#459a8e"/>
<path d="M812.8 718h2v6h-2zM818.9 718h2v6h-2zM827.0 718h2v6h-2zM816.8 726h2v6h-2zM821.0 726h2v6h-2zM825.0 726h2v6h-2zM829.0 726h2v6h-2zM813.8 734h2v6h-2zM814.3 742h2v6h-2zM818.2 742h2v6h-2zM822.8 742h4v6h-4zM827.2 742h2v6h-2zM833.5 742h2v6h-2zM814.3 838h4v6h-4zM821.3 838h2v6h-2zM824.5 838h2v6h-2z" fill="#141a19"/>
<rect x="836.68" y="682.00" width="25.17" height="172.00" fill="#58BCAE"/>
<rect x="837.18" y="682.50" width="24.17" height="171" fill="none" stroke="#3F8A80" stroke-width="1"/>
<rect x="836.68" y="714.00" width="25.17" height="1.50" fill="#459a8e"/>
<path d="M838.0 718h2v6h-2zM844.1 718h2v6h-2zM852.2 718h2v6h-2zM840.4 726h2v6h-2zM846.2 726h2v6h-2zM849.4 726h2v6h-2zM854.2 726h2v6h-2zM837.4 734h2v6h-2zM837.9 742h2v6h-2zM842.6 742h2v6h-2zM848.0 742h4v6h-4zM853.2 742h2v6h-2zM858.7 742h2v6h-2zM839.5 838h4v6h-4zM845.7 838h2v6h-2zM849.7 838h2v6h-2z" fill="#141a19"/>
<rect x="861.85" y="682.00" width="25.17" height="172.00" fill="#58BCAE"/>
<rect x="862.35" y="682.50" width="24.17" height="171" fill="none" stroke="#3F8A80" stroke-width="1"/>
<rect x="861.85" y="714.00" width="25.17" height="1.50" fill="#459a8e"/>
<path d="M866.0 718h2v6h-2zM868.5 718h2v6h-2zM877.3 718h2v6h-2zM880.7 718h2v6h-2zM868.6 726h2v6h-2zM872.5 726h2v6h-2zM877.3 726h2v6h-2zM881.4 726h2v6h-2zM863.8 734h2v6h-2zM864.4 742h4v6h-4zM870.0 742h2v6h-2zM875.3 742h2v6h-2zM863.8 838h2v6h-2zM867.7 838h4v6h-4zM873.3 838h2v6h-2zM878.7 838h3v6h-3z" fill="#141a19"/>
<rect x="887.02" y="682.00" width="25.17" height="172.00" fill="#58BCAE"/>
<rect x="887.52" y="682.50" width="24.17" height="171" fill="none" stroke="#3F8A80" stroke-width="1"/>
<rect x="887.02" y="714.00" width="25.17" height="1.50" fill="#459a8e"/>
<path d="M890.4 718h2v6h-2zM894.5 718h2v6h-2zM903.3 718h2v6h-2zM906.7 718h2v6h-2zM893.0 726h2v6h-2zM898.5 726h2v6h-2zM903.3 726h2v6h-2zM906.6 726h2v6h-2zM889.8 734h2v6h-2zM890.4 742h4v6h-4zM894.4 742h2v6h-2zM901.3 742h2v6h-2zM908.4 742h2v6h-2zM889.0 838h2v6h-2zM892.9 838h4v6h-4zM899.3 838h2v6h-2zM903.9 838h3v6h-3z" fill="#141a19"/>
<rect x="912.19" y="682.00" width="25.17" height="172.00" fill="#58BCAE"/>
<rect x="912.69" y="682.50" width="24.17" height="171" fill="none" stroke="#3F8A80" stroke-width="1"/>
<rect x="912.19" y="714.00" width="25.17" height="1.50" fill="#459a8e"/>
<path d="M915.6 718h2v6h-2zM918.9 718h2v6h-2zM928.5 718h2v6h-2zM931.1 718h2v6h-2zM917.4 726h2v6h-2zM923.7 726h2v6h-2zM926.9 726h2v6h-2zM931.8 726h2v6h-2zM915.0 734h2v6h-2zM916.4 742h4v6h-4zM919.6 742h2v6h-2zM925.7 742h2v6h-2zM913.4 838h2v6h-2zM919.7 838h4v6h-4zM922.9 838h2v6h-2zM929.1 838h3v6h-3z" fill="#141a19"/>
<rect x="937.36" y="682.00" width="25.17" height="172.00" fill="#58BCAE"/>
<rect x="937.86" y="682.50" width="24.17" height="171" fill="none" stroke="#3F8A80" stroke-width="1"/>
<rect x="937.36" y="714.00" width="25.17" height="1.50" fill="#459a8e"/>
<path d="M940.8 718h2v6h-2zM944.1 718h2v6h-2zM952.1 718h2v6h-2zM956.3 718h2v6h-2zM943.4 726h2v6h-2zM948.9 726h2v6h-2zM952.9 726h2v6h-2zM957.0 726h2v6h-2zM939.4 734h2v6h-2zM941.6 742h4v6h-4zM944.8 742h2v6h-2zM950.1 742h2v6h-2zM958.8 742h2v6h-2zM939.4 838h2v6h-2zM944.1 838h4v6h-4zM948.9 838h2v6h-2zM953.5 838h3v6h-3z" fill="#141a19"/>
<rect x="962.54" y="682.00" width="25.17" height="172.00" fill="#58BCAE"/>
<rect x="963.04" y="682.50" width="24.17" height="171" fill="none" stroke="#3F8A80" stroke-width="1"/>
<rect x="962.54" y="714.00" width="25.17" height="1.50" fill="#459a8e"/>
<path d="M965.1 718h2v6h-2zM969.2 718h2v6h-2zM978.0 718h2v6h-2zM981.4 718h2v6h-2zM983.9 718h2v6h-2zM969.3 726h2v6h-2zM974.0 726h2v6h-2zM978.8 726h2v6h-2zM982.1 726h2v6h-2zM964.5 734h2v6h-2zM965.9 742h4v6h-4zM969.1 742h2v6h-2zM975.2 742h2v6h-2zM983.9 742h2v6h-2zM964.5 838h2v6h-2zM968.4 838h4v6h-4zM974.8 838h2v6h-2zM979.4 838h3v6h-3z" fill="#141a19"/>
<rect x="987.71" y="682.00" width="25.17" height="172.00" fill="#58BCAE"/>
<rect x="988.21" y="682.50" width="24.17" height="171" fill="none" stroke="#3F8A80" stroke-width="1"/>
<rect x="987.71" y="714.00" width="25.17" height="1.50" fill="#459a8e"/>
<path d="M989.0 718h2v6h-2zM995.1 718h2v6h-2zM1003.2 718h2v6h-2zM993.0 726h2v6h-2zM998.0 726h2v6h-2zM1001.2 726h2v6h-2zM1005.2 726h2v6h-2zM988.4 734h2v6h-2zM989.7 742h2v6h-2zM993.6 742h2v6h-2zM999.0 742h4v6h-4zM1004.2 742h2v6h-2zM1009.7 742h2v6h-2zM988.9 838h4v6h-4zM997.5 838h2v6h-2zM1001.5 838h2v6h-2z" fill="#141a19"/>
<rect x="1012.88" y="682.00" width="25.17" height="172.00" fill="#58BCAE"/>
<rect x="1013.38" y="682.50" width="24.17" height="171" fill="none" stroke="#3F8A80" stroke-width="1"/>
<rect x="1012.88" y="714.00" width="25.17" height="1.50" fill="#459a8e"/>
<path d="M1015.5 718h2v6h-2zM1019.6 718h2v6h-2zM1028.4 718h2v6h-2zM1032.6 718h2v6h-2zM1018.1 726h2v6h-2zM1024.4 726h2v6h-2zM1029.2 726h2v6h-2zM1031.7 726h2v6h-2zM1014.9 734h2v6h-2zM1015.5 742h4v6h-4zM1021.1 742h2v6h-2zM1025.6 742h2v6h-2zM1014.9 838h2v6h-2zM1019.6 838h4v6h-4zM1024.4 838h2v6h-2zM1029.8 838h3v6h-3z" fill="#141a19"/>
<rect x="1038.05" y="682.00" width="25.17" height="172.00" fill="#58BCAE"/>
<rect x="1038.55" y="682.50" width="24.17" height="171" fill="none" stroke="#3F8A80" stroke-width="1"/>
<rect x="1038.05" y="714.00" width="25.17" height="1.50" fill="#459a8e"/>
<path d="M1040.2 718h2v6h-2zM1046.3 718h2v6h-2zM1053.6 718h2v6h-2zM1042.6 726h2v6h-2zM1048.4 726h2v6h-2zM1051.6 726h2v6h-2zM1054.8 726h2v6h-2zM1038.8 734h2v6h-2zM1039.3 742h2v6h-2zM1044.8 742h2v6h-2zM1048.6 742h4v6h-4zM1054.6 742h2v6h-2zM1059.3 742h2v6h-2zM1039.3 838h4v6h-4zM1046.3 838h2v6h-2zM1051.9 838h2v6h-2z" fill="#141a19"/>
<rect x="1063.22" y="682.00" width="25.17" height="172.00" fill="#58BCAE"/>
<rect x="1063.72" y="682.50" width="24.17" height="171" fill="none" stroke="#3F8A80" stroke-width="1"/>
<rect x="1063.22" y="714.00" width="25.17" height="1.50" fill="#459a8e"/>
<path d="M1063.7 718h2v6h-2zM1071.4 718h2v6h-2zM1077.9 718h2v6h-2zM1067.7 726h2v6h-2zM1073.5 726h2v6h-2zM1076.7 726h2v6h-2zM1081.5 726h2v6h-2zM1065.5 734h2v6h-2zM1064.4 742h2v6h-2zM1069.9 742h2v6h-2zM1073.7 742h4v6h-4zM1079.7 742h2v6h-2zM1066.0 838h4v6h-4zM1073.0 838h2v6h-2zM1076.2 838h2v6h-2z" fill="#141a19"/>
<rect x="1088.40" y="682.00" width="25.17" height="172.00" fill="#58BCAE"/>
<rect x="1088.90" y="682.50" width="24.17" height="171" fill="none" stroke="#3F8A80" stroke-width="1"/>
<rect x="1088.40" y="714.00" width="25.17" height="1.50" fill="#459a8e"/>
<path d="M1091.8 718h2v6h-2zM1095.9 718h2v6h-2zM1103.1 718h2v6h-2zM1108.1 718h2v6h-2zM1095.2 726h2v6h-2zM1099.9 726h2v6h-2zM1103.9 726h2v6h-2zM1108.8 726h2v6h-2zM1090.4 734h2v6h-2zM1091.8 742h4v6h-4zM1096.6 742h2v6h-2zM1101.1 742h2v6h-2zM1090.4 838h2v6h-2zM1095.9 838h4v6h-4zM1099.1 838h2v6h-2zM1105.3 838h3v6h-3z" fill="#141a19"/>
<rect x="1113.57" y="682.00" width="25.17" height="172.00" fill="#58BCAE"/>
<rect x="1114.07" y="682.50" width="24.17" height="171" fill="none" stroke="#3F8A80" stroke-width="1"/>
<rect x="1113.57" y="714.00" width="25.17" height="1.50" fill="#459a8e"/>
<path d="M1114.1 718h2v6h-2zM1121.0 718h2v6h-2zM1129.1 718h2v6h-2zM1117.3 726h2v6h-2zM1122.3 726h2v6h-2zM1127.1 726h2v6h-2zM1131.9 726h2v6h-2zM1114.3 734h2v6h-2zM1115.6 742h2v6h-2zM1120.3 742h2v6h-2zM1124.1 742h4v6h-4zM1129.3 742h2v6h-2zM1134.8 742h2v6h-2zM1116.4 838h4v6h-4zM1123.4 838h2v6h-2zM1127.4 838h2v6h-2z" fill="#141a19"/>
<rect x="1138.74" y="682.00" width="25.17" height="172.00" fill="#58BCAE"/>
<rect x="1139.24" y="682.50" width="24.17" height="171" fill="none" stroke="#3F8A80" stroke-width="1"/>
<rect x="1138.74" y="714.00" width="25.17" height="1.50" fill="#459a8e"/>
<path d="M1142.9 718h2v6h-2zM1144.6 718h2v6h-2zM1154.2 718h2v6h-2zM1158.4 718h2v6h-2zM1160.1 718h2v6h-2zM1143.9 726h2v6h-2zM1150.2 726h2v6h-2zM1154.2 726h2v6h-2zM1158.3 726h2v6h-2zM1140.7 734h2v6h-2zM1142.1 742h4v6h-4zM1145.3 742h2v6h-2zM1152.2 742h2v6h-2zM1160.1 742h2v6h-2zM1141.5 838h2v6h-2zM1144.6 838h4v6h-4zM1149.4 838h2v6h-2zM1155.6 838h3v6h-3z" fill="#141a19"/>
<rect x="1163.91" y="682.00" width="25.17" height="172.00" fill="#58BCAE"/>
<rect x="1164.41" y="682.50" width="24.17" height="171" fill="none" stroke="#3F8A80" stroke-width="1"/>
<rect x="1163.91" y="714.00" width="25.17" height="1.50" fill="#459a8e"/>
<path d="M1165.2 718h2v6h-2zM1171.3 718h2v6h-2zM1179.4 718h2v6h-2zM1168.4 726h2v6h-2zM1174.2 726h2v6h-2zM1177.4 726h2v6h-2zM1182.2 726h2v6h-2zM1166.2 734h2v6h-2zM1165.9 742h2v6h-2zM1170.6 742h2v6h-2zM1173.6 742h4v6h-4zM1179.6 742h2v6h-2zM1185.1 742h2v6h-2zM1165.9 838h4v6h-4zM1172.1 838h2v6h-2zM1177.7 838h2v6h-2z" fill="#141a19"/>
<rect x="1189.08" y="682.00" width="25.17" height="172.00" fill="#58BCAE"/>
<rect x="1189.58" y="682.50" width="24.17" height="171" fill="none" stroke="#3F8A80" stroke-width="1"/>
<rect x="1189.08" y="714.00" width="25.17" height="1.50" fill="#459a8e"/>
<path d="M1192.5 718h2v6h-2zM1195.0 718h2v6h-2zM1205.4 718h2v6h-2zM1208.8 718h2v6h-2zM1195.1 726h2v6h-2zM1200.6 726h2v6h-2zM1205.4 726h2v6h-2zM1208.7 726h2v6h-2zM1190.3 734h2v6h-2zM1191.7 742h4v6h-4zM1195.7 742h2v6h-2zM1201.8 742h2v6h-2zM1191.1 838h2v6h-2zM1195.8 838h4v6h-4zM1200.6 838h2v6h-2zM1205.2 838h3v6h-3z" fill="#141a19"/>
<rect x="1416.40" y="682.00" width="24.30" height="172.00" fill="#58BCAE"/>
<rect x="1416.90" y="682.50" width="23.30" height="171" fill="none" stroke="#3F8A80" stroke-width="1"/>
<rect x="1416.40" y="714.00" width="24.30" height="1.50" fill="#459a8e"/>
<path d="M1416.9 718h2v6h-2zM1423.0 718h2v6h-2zM1431.9 718h2v6h-2zM1420.1 726h2v6h-2zM1425.1 726h2v6h-2zM1429.1 726h2v6h-2zM1433.9 726h2v6h-2zM1417.9 734h2v6h-2zM1418.4 742h2v6h-2zM1423.1 742h2v6h-2zM1426.9 742h4v6h-4zM1432.9 742h2v6h-2zM1437.6 742h2v6h-2zM1418.4 838h4v6h-4zM1425.4 838h2v6h-2zM1429.4 838h2v6h-2z" fill="#141a19"/>
<rect x="1440.70" y="682.00" width="25.90" height="172.00" fill="#58BCAE"/>
<rect x="1441.20" y="682.50" width="24.90" height="171" fill="none" stroke="#3F8A80" stroke-width="1"/>
<rect x="1440.70" y="714.00" width="25.90" height="1.50" fill="#459a8e"/>
<path d="M1442.0 718h2v6h-2zM1448.1 718h2v6h-2zM1457.0 718h2v6h-2zM1460.9 718h4v6h-4zM1446.0 726h2v6h-2zM1449.4 726h2v6h-2zM1454.2 726h2v6h-2zM1458.2 726h2v6h-2zM1442.2 734h2v6h-2zM1443.5 742h2v6h-2zM1447.4 742h2v6h-2zM1450.4 742h4v6h-4zM1458.0 742h2v6h-2zM1462.7 742h2v6h-2zM1442.7 838h4v6h-4zM1449.7 838h2v6h-2zM1454.5 838h2v6h-2z" fill="#141a19"/>
<rect x="1466.60" y="682.00" width="25.90" height="172.00" fill="#58BCAE"/>
<rect x="1467.10" y="682.50" width="24.90" height="171" fill="none" stroke="#3F8A80" stroke-width="1"/>
<rect x="1466.60" y="714.00" width="25.90" height="1.50" fill="#459a8e"/>
<path d="M1468.7 718h2v6h-2zM1474.8 718h2v6h-2zM1482.1 718h2v6h-2zM1486.0 718h4v6h-4zM1471.1 726h2v6h-2zM1476.1 726h2v6h-2zM1480.1 726h2v6h-2zM1483.3 726h2v6h-2zM1468.9 734h2v6h-2zM1468.6 742h2v6h-2zM1473.3 742h2v6h-2zM1477.1 742h4v6h-4zM1482.3 742h2v6h-2zM1487.8 742h2v6h-2zM1468.6 838h4v6h-4zM1476.4 838h2v6h-2zM1479.6 838h2v6h-2z" fill="#141a19"/>
<rect x="1492.50" y="682.00" width="24.50" height="172.00" fill="#58BCAE"/>
<rect x="1493.00" y="682.50" width="23.50" height="171" fill="none" stroke="#3F8A80" stroke-width="1"/>
<rect x="1492.50" y="714.00" width="24.50" height="1.50" fill="#459a8e"/>
<path d="M1494.6 718h2v6h-2zM1499.9 718h2v6h-2zM1507.2 718h2v6h-2zM1497.8 726h2v6h-2zM1501.2 726h2v6h-2zM1506.8 726h2v6h-2zM1509.2 726h2v6h-2zM1494.0 734h2v6h-2zM1494.5 742h2v6h-2zM1500.0 742h2v6h-2zM1503.0 742h4v6h-4zM1509.0 742h2v6h-2zM1513.7 742h2v6h-2zM1494.5 838h4v6h-4zM1502.3 838h2v6h-2zM1505.5 838h2v6h-2z" fill="#141a19"/>
<rect x="1517.00" y="682.00" width="25.90" height="172.00" fill="#58BCAE"/>
<rect x="1517.50" y="682.50" width="24.90" height="171" fill="none" stroke="#3F8A80" stroke-width="1"/>
<rect x="1517.00" y="714.00" width="25.90" height="1.50" fill="#459a8e"/>
<path d="M1520.4 718h2v6h-2zM1524.5 718h2v6h-2zM1533.3 718h2v6h-2zM1535.9 718h2v6h-2zM1538.4 718h2v6h-2zM1523.0 726h2v6h-2zM1528.5 726h2v6h-2zM1531.7 726h2v6h-2zM1535.8 726h2v6h-2zM1519.0 734h2v6h-2zM1520.4 742h4v6h-4zM1523.6 742h2v6h-2zM1530.5 742h2v6h-2zM1539.2 742h2v6h-2zM1519.0 838h2v6h-2zM1523.7 838h4v6h-4zM1527.7 838h2v6h-2zM1533.9 838h3v6h-3z" fill="#141a19"/>
<rect x="1542.90" y="682.00" width="24.10" height="172.00" fill="#58BCAE"/>
<rect x="1543.40" y="682.50" width="23.10" height="171" fill="none" stroke="#3F8A80" stroke-width="1"/>
<rect x="1542.90" y="714.00" width="24.10" height="1.50" fill="#459a8e"/>
<path d="M1544.2 718h2v6h-2zM1549.5 718h2v6h-2zM1557.6 718h2v6h-2zM1547.4 726h2v6h-2zM1552.4 726h2v6h-2zM1556.4 726h2v6h-2zM1561.2 726h2v6h-2zM1544.4 734h2v6h-2zM1544.9 742h2v6h-2zM1548.8 742h2v6h-2zM1553.4 742h4v6h-4zM1560.2 742h2v6h-2zM1545.7 838h4v6h-4zM1552.7 838h2v6h-2zM1555.1 838h2v6h-2z" fill="#141a19"/>
<rect x="1567.00" y="682.00" width="25.90" height="172.00" fill="#58BCAE"/>
<rect x="1567.50" y="682.50" width="24.90" height="171" fill="none" stroke="#3F8A80" stroke-width="1"/>
<rect x="1567.00" y="714.00" width="25.90" height="1.50" fill="#459a8e"/>
<path d="M1570.4 718h2v6h-2zM1573.7 718h2v6h-2zM1583.3 718h2v6h-2zM1585.9 718h2v6h-2zM1572.2 726h2v6h-2zM1578.5 726h2v6h-2zM1582.5 726h2v6h-2zM1585.8 726h2v6h-2zM1569.8 734h2v6h-2zM1571.2 742h4v6h-4zM1573.6 742h2v6h-2zM1580.5 742h2v6h-2zM1589.2 742h2v6h-2zM1568.2 838h2v6h-2zM1573.7 838h4v6h-4zM1579.3 838h2v6h-2zM1583.1 838h3v6h-3z" fill="#141a19"/>
<rect x="1592.90" y="682.00" width="25.85" height="172.00" fill="#58BCAE"/>
<rect x="1593.40" y="682.50" width="24.85" height="171" fill="none" stroke="#3F8A80" stroke-width="1"/>
<rect x="1592.90" y="714.00" width="25.85" height="1.50" fill="#459a8e"/>
<path d="M1597.1 718h2v6h-2zM1598.8 718h2v6h-2zM1608.4 718h2v6h-2zM1611.0 718h2v6h-2zM1615.1 718h2v6h-2zM1598.1 726h2v6h-2zM1604.4 726h2v6h-2zM1607.6 726h2v6h-2zM1612.5 726h2v6h-2zM1594.1 734h2v6h-2zM1596.3 742h4v6h-4zM1600.3 742h2v6h-2zM1607.2 742h2v6h-2zM1615.1 742h2v6h-2zM1594.9 838h2v6h-2zM1600.4 838h4v6h-4zM1605.2 838h2v6h-2zM1610.6 838h3v6h-3z" fill="#141a19"/>
<rect x="1618.75" y="682.00" width="24.15" height="172.00" fill="#58BCAE"/>
<rect x="1619.25" y="682.50" width="23.15" height="171" fill="none" stroke="#3F8A80" stroke-width="1"/>
<rect x="1618.75" y="714.00" width="24.15" height="1.50" fill="#459a8e"/>
<path d="M1622.2 718h2v6h-2zM1626.2 718h2v6h-2zM1635.0 718h2v6h-2zM1638.5 718h2v6h-2zM1624.8 726h2v6h-2zM1630.2 726h2v6h-2zM1634.2 726h2v6h-2zM1638.3 726h2v6h-2zM1620.8 734h2v6h-2zM1621.4 742h4v6h-4zM1625.4 742h2v6h-2zM1631.5 742h2v6h-2zM1620.0 838h2v6h-2zM1624.7 838h4v6h-4zM1630.2 838h2v6h-2zM1634.9 838h3v6h-3z" fill="#141a19"/>
<rect x="1642.90" y="682.00" width="25.85" height="172.00" fill="#58BCAE"/>
<rect x="1643.40" y="682.50" width="24.85" height="171" fill="none" stroke="#3F8A80" stroke-width="1"/>
<rect x="1642.90" y="714.00" width="25.85" height="1.50" fill="#459a8e"/>
<path d="M1647.1 718h2v6h-2zM1649.6 718h2v6h-2zM1658.4 718h2v6h-2zM1662.6 718h2v6h-2zM1648.1 726h2v6h-2zM1655.2 726h2v6h-2zM1658.4 726h2v6h-2zM1662.5 726h2v6h-2zM1644.1 734h2v6h-2zM1646.3 742h4v6h-4zM1650.3 742h2v6h-2zM1655.6 742h2v6h-2zM1665.1 742h2v6h-2zM1644.9 838h2v6h-2zM1648.8 838h4v6h-4zM1655.2 838h2v6h-2zM1659.8 838h3v6h-3z" fill="#141a19"/>
<rect x="1668.75" y="682.00" width="24.15" height="172.00" fill="#58BCAE"/>
<rect x="1669.25" y="682.50" width="23.15" height="171" fill="none" stroke="#3F8A80" stroke-width="1"/>
<rect x="1668.75" y="714.00" width="24.15" height="1.50" fill="#459a8e"/>
<path d="M1670.0 718h2v6h-2zM1676.2 718h2v6h-2zM1685.0 718h2v6h-2zM1673.2 726h2v6h-2zM1678.2 726h2v6h-2zM1681.5 726h2v6h-2zM1685.5 726h2v6h-2zM1669.5 734h2v6h-2zM1670.8 742h2v6h-2zM1675.5 742h2v6h-2zM1679.2 742h4v6h-4zM1684.5 742h2v6h-2zM1670.8 838h4v6h-4zM1677.8 838h2v6h-2zM1682.5 838h2v6h-2z" fill="#141a19"/>
<rect x="1692.90" y="682.00" width="14.10" height="172.00" fill="#58BCAE"/>
<rect x="1693.40" y="682.50" width="13.10" height="171" fill="none" stroke="#3F8A80" stroke-width="1"/>
<rect x="1692.90" y="714.00" width="14.10" height="1.50" fill="#459a8e"/>
<path d="M1697.1 718h2v6h-2zM1700.4 718h2v6h-2zM1698.1 726h2v6h-2zM1694.9 734h2v6h-2zM1696.3 742h4v6h-4zM1701.1 742h2v6h-2zM1694.9 838h2v6h-2zM1698.8 838h4v6h-4z" fill="#141a19"/>
<rect x="1707.00" y="682.00" width="24.00" height="172.00" fill="#58BCAE"/>
<rect x="1707.50" y="682.50" width="23.00" height="171" fill="none" stroke="#3F8A80" stroke-width="1"/>
<rect x="1707.00" y="714.00" width="24.00" height="1.50" fill="#459a8e"/>
<path d="M1708.3 718h2v6h-2zM1714.4 718h2v6h-2zM1721.7 718h2v6h-2zM1711.5 726h2v6h-2zM1716.5 726h2v6h-2zM1719.7 726h2v6h-2zM1724.5 726h2v6h-2zM1707.7 734h2v6h-2zM1709.8 742h2v6h-2zM1713.7 742h2v6h-2zM1718.3 742h4v6h-4zM1723.5 742h2v6h-2zM1709.0 838h4v6h-4zM1716.0 838h2v6h-2zM1720.0 838h2v6h-2z" fill="#141a19"/>
<rect x="1731.00" y="682.00" width="26.00" height="172.00" fill="#58BCAE"/>
<rect x="1731.50" y="682.50" width="25.00" height="171" fill="none" stroke="#3F8A80" stroke-width="1"/>
<rect x="1731.00" y="714.00" width="26.00" height="1.50" fill="#459a8e"/>
<path d="M1733.1 718h2v6h-2zM1738.4 718h2v6h-2zM1745.7 718h2v6h-2zM1735.5 726h2v6h-2zM1740.5 726h2v6h-2zM1745.3 726h2v6h-2zM1748.5 726h2v6h-2zM1732.5 734h2v6h-2zM1733.8 742h2v6h-2zM1738.5 742h2v6h-2zM1741.5 742h4v6h-4zM1747.5 742h2v6h-2zM1753.0 742h2v6h-2zM1733.8 838h4v6h-4zM1740.0 838h2v6h-2zM1744.0 838h2v6h-2z" fill="#141a19"/>
<rect x="1757.00" y="682.00" width="24.00" height="172.00" fill="#58BCAE"/>
<rect x="1757.50" y="682.50" width="23.00" height="171" fill="none" stroke="#3F8A80" stroke-width="1"/>
<rect x="1757.00" y="714.00" width="24.00" height="1.50" fill="#459a8e"/>
<path d="M1759.1 718h2v6h-2zM1763.6 718h2v6h-2zM1773.3 718h2v6h-2zM1762.3 726h2v6h-2zM1766.5 726h2v6h-2zM1770.5 726h2v6h-2zM1774.5 726h2v6h-2zM1757.7 734h2v6h-2zM1758.2 742h2v6h-2zM1763.7 742h2v6h-2zM1766.7 742h4v6h-4zM1773.5 742h2v6h-2zM1759.0 838h4v6h-4zM1766.0 838h2v6h-2zM1770.0 838h2v6h-2z" fill="#141a19"/>
<rect x="1781.00" y="682.00" width="14.00" height="172.00" fill="#58BCAE"/>
<rect x="1781.50" y="682.50" width="13.00" height="171" fill="none" stroke="#3F8A80" stroke-width="1"/>
<rect x="1781.00" y="714.00" width="14.00" height="1.50" fill="#459a8e"/>
<path d="M1785.2 718h2v6h-2zM1786.9 718h2v6h-2zM1787.0 726h2v6h-2zM1782.2 734h2v6h-2zM1784.4 742h4v6h-4zM1789.2 742h2v6h-2zM1782.2 838h2v6h-2zM1787.7 838h4v6h-4z" fill="#141a19"/>
<rect x="1795.00" y="682.00" width="12.00" height="172.00" fill="#58BCAE"/>
<rect x="1795.50" y="682.50" width="11.00" height="171" fill="none" stroke="#3F8A80" stroke-width="1"/>
<rect x="1795.00" y="714.00" width="12.00" height="1.50" fill="#459a8e"/>
<path d="M1795.5 718h2v6h-2zM1802.4 718h2v6h-2zM1800.3 726h2v6h-2zM1803.7 726h2v6h-2zM1796.5 734h2v6h-2zM1797.0 742h2v6h-2zM1801.7 742h2v6h-2zM1797.0 838h4v6h-4z" fill="#141a19"/>
<rect x="1807.00" y="682.00" width="12.00" height="172.00" fill="#58BCAE"/>
<rect x="1807.50" y="682.50" width="11.00" height="171" fill="none" stroke="#3F8A80" stroke-width="1"/>
<rect x="1807.00" y="714.00" width="12.00" height="1.50" fill="#459a8e"/>
<path d="M1810.4 718h2v6h-2zM1813.7 718h2v6h-2zM1813.0 726h2v6h-2zM1808.2 734h2v6h-2zM1811.2 742h4v6h-4zM1814.4 742h2v6h-2zM1809.0 838h2v6h-2zM1813.7 838h4v6h-4z" fill="#141a19"/>
<rect x="1819.00" y="682.00" width="25.60" height="172.00" fill="#58BCAE"/>
<rect x="1819.50" y="682.50" width="24.60" height="171" fill="none" stroke="#3F8A80" stroke-width="1"/>
<rect x="1819.00" y="714.00" width="25.60" height="1.50" fill="#459a8e"/>
<path d="M1820.3 718h2v6h-2zM1826.4 718h2v6h-2zM1834.5 718h2v6h-2zM1838.4 718h4v6h-4zM1823.5 726h2v6h-2zM1827.7 726h2v6h-2zM1833.3 726h2v6h-2zM1836.5 726h2v6h-2zM1820.5 734h2v6h-2zM1821.0 742h2v6h-2zM1825.7 742h2v6h-2zM1829.5 742h4v6h-4zM1835.5 742h2v6h-2zM1821.0 838h4v6h-4zM1827.2 838h2v6h-2zM1831.2 838h2v6h-2z" fill="#141a19"/>
<rect x="1844.60" y="682.00" width="24.30" height="172.00" fill="#58BCAE"/>
<rect x="1845.10" y="682.50" width="23.30" height="171" fill="none" stroke="#3F8A80" stroke-width="1"/>
<rect x="1844.60" y="714.00" width="24.30" height="1.50" fill="#459a8e"/>
<path d="M1846.7 718h2v6h-2zM1851.2 718h2v6h-2zM1860.9 718h2v6h-2zM1848.3 726h2v6h-2zM1853.3 726h2v6h-2zM1858.9 726h2v6h-2zM1861.3 726h2v6h-2zM1845.3 734h2v6h-2zM1846.6 742h2v6h-2zM1851.3 742h2v6h-2zM1855.1 742h4v6h-4zM1860.3 742h2v6h-2zM1865.8 742h2v6h-2zM1846.6 838h4v6h-4zM1852.8 838h2v6h-2zM1856.8 838h2v6h-2z" fill="#141a19"/>
<rect x="1868.90" y="682.00" width="26.30" height="172.00" fill="#58BCAE"/>
<rect x="1869.40" y="682.50" width="25.30" height="171" fill="none" stroke="#3F8A80" stroke-width="1"/>
<rect x="1868.90" y="714.00" width="26.30" height="1.50" fill="#459a8e"/>
<path d="M1869.4 718h2v6h-2zM1875.5 718h2v6h-2zM1884.4 718h2v6h-2zM1889.1 718h4v6h-4zM1873.4 726h2v6h-2zM1879.2 726h2v6h-2zM1881.6 726h2v6h-2zM1887.2 726h2v6h-2zM1870.4 734h2v6h-2zM1870.1 742h2v6h-2zM1875.6 742h2v6h-2zM1879.4 742h4v6h-4zM1885.4 742h2v6h-2zM1890.9 742h2v6h-2zM1871.7 838h4v6h-4zM1877.9 838h2v6h-2zM1881.9 838h2v6h-2z" fill="#141a19"/>
<rect x="1895.20" y="682.00" width="11.90" height="172.00" fill="#58BCAE"/>
<rect x="1895.70" y="682.50" width="10.90" height="171" fill="none" stroke="#3F8A80" stroke-width="1"/>
<rect x="1895.20" y="714.00" width="11.90" height="1.50" fill="#459a8e"/>
<path d="M1895.7 718h2v6h-2zM1902.6 718h2v6h-2zM1899.7 726h2v6h-2zM1897.5 734h2v6h-2zM1897.2 742h2v6h-2zM1901.9 742h2v6h-2zM1897.2 838h4v6h-4z" fill="#141a19"/>
<rect x="1907.10" y="682.00" width="13.90" height="172.00" fill="#58BCAE"/>
<rect x="1907.60" y="682.50" width="12.90" height="171" fill="none" stroke="#3F8A80" stroke-width="1"/>
<rect x="1907.10" y="714.00" width="13.90" height="1.50" fill="#459a8e"/>
<path d="M1907.6 718h2v6h-2zM1914.5 718h2v6h-2zM1911.6 726h2v6h-2zM1917.4 726h2v6h-2zM1909.4 734h2v6h-2zM1909.1 742h2v6h-2zM1913.8 742h2v6h-2zM1909.9 838h4v6h-4zM1916.9 838h2v6h-2z" fill="#141a19"/>
<rect x="1921.00" y="682.00" width="12.20" height="172.00" fill="#58BCAE"/>
<rect x="1921.50" y="682.50" width="11.20" height="171" fill="none" stroke="#3F8A80" stroke-width="1"/>
<rect x="1921.00" y="714.00" width="12.20" height="1.50" fill="#459a8e"/>
<path d="M1925.2 718h2v6h-2zM1927.7 718h2v6h-2zM1927.0 726h2v6h-2zM1923.8 734h2v6h-2zM1923.6 742h4v6h-4zM1929.2 742h2v6h-2zM1923.8 838h2v6h-2zM1927.7 838h4v6h-4z" fill="#141a19"/>
<rect x="1933.20" y="682.00" width="24.10" height="172.00" fill="#58BCAE"/>
<rect x="1933.70" y="682.50" width="23.10" height="171" fill="none" stroke="#3F8A80" stroke-width="1"/>
<rect x="1933.20" y="714.00" width="24.10" height="1.50" fill="#459a8e"/>
<path d="M1936.6 718h2v6h-2zM1940.7 718h2v6h-2zM1949.5 718h2v6h-2zM1952.9 718h2v6h-2zM1939.2 726h2v6h-2zM1944.7 726h2v6h-2zM1948.7 726h2v6h-2zM1952.8 726h2v6h-2zM1936.0 734h2v6h-2zM1935.8 742h4v6h-4zM1939.8 742h2v6h-2zM1947.5 742h2v6h-2zM1935.2 838h2v6h-2zM1939.1 838h4v6h-4zM1944.7 838h2v6h-2zM1950.1 838h3v6h-3z" fill="#141a19"/>
<rect x="1957.30" y="682.00" width="25.40" height="172.00" fill="#58BCAE"/>
<rect x="1957.80" y="682.50" width="24.40" height="171" fill="none" stroke="#3F8A80" stroke-width="1"/>
<rect x="1957.30" y="714.00" width="25.40" height="1.50" fill="#459a8e"/>
<path d="M1960.7 718h2v6h-2zM1964.8 718h2v6h-2zM1973.6 718h2v6h-2zM1976.2 718h2v6h-2zM1963.3 726h2v6h-2zM1968.0 726h2v6h-2zM1973.6 726h2v6h-2zM1976.9 726h2v6h-2zM1959.3 734h2v6h-2zM1961.5 742h4v6h-4zM1963.9 742h2v6h-2zM1970.8 742h2v6h-2zM1979.5 742h2v6h-2zM1959.3 838h2v6h-2zM1964.0 838h4v6h-4zM1968.8 838h2v6h-2zM1973.4 838h3v6h-3z" fill="#141a19"/>
<rect x="1982.70" y="682.00" width="26.40" height="172.00" fill="#58BCAE"/>
<rect x="1983.20" y="682.50" width="25.40" height="171" fill="none" stroke="#3F8A80" stroke-width="1"/>
<rect x="1982.70" y="714.00" width="26.40" height="1.50" fill="#459a8e"/>
<path d="M1986.1 718h2v6h-2zM1990.2 718h2v6h-2zM1997.4 718h2v6h-2zM2002.4 718h2v6h-2zM2004.9 718h2v6h-2zM1988.7 726h2v6h-2zM1995.0 726h2v6h-2zM1997.4 726h2v6h-2zM2001.5 726h2v6h-2zM1984.7 734h2v6h-2zM1986.1 742h4v6h-4zM1990.1 742h2v6h-2zM1996.2 742h2v6h-2zM2004.9 742h2v6h-2zM1984.7 838h2v6h-2zM1988.6 838h4v6h-4zM1994.2 838h2v6h-2zM1999.6 838h3v6h-3z" fill="#141a19"/>
<rect x="2009.10" y="682.00" width="12.30" height="172.00" fill="#58BCAE"/>
<rect x="2009.60" y="682.50" width="11.30" height="171" fill="none" stroke="#3F8A80" stroke-width="1"/>
<rect x="2009.10" y="714.00" width="12.30" height="1.50" fill="#459a8e"/>
<path d="M2012.5 718h2v6h-2zM2015.8 718h2v6h-2zM2015.1 726h2v6h-2zM2011.1 734h2v6h-2zM2013.3 742h4v6h-4zM2016.5 742h2v6h-2zM2010.3 838h2v6h-2zM2015.0 838h4v6h-4z" fill="#141a19"/>
<rect x="2021.40" y="682.00" width="11.80" height="172.00" fill="#58BCAE"/>
<rect x="2021.90" y="682.50" width="10.80" height="171" fill="none" stroke="#3F8A80" stroke-width="1"/>
<rect x="2021.40" y="714.00" width="11.80" height="1.50" fill="#459a8e"/>
<path d="M2021.9 718h2v6h-2zM2028.8 718h2v6h-2zM2026.7 726h2v6h-2zM2023.7 734h2v6h-2zM2024.2 742h2v6h-2zM2028.1 742h2v6h-2zM2024.2 838h4v6h-4z" fill="#141a19"/>
<rect x="2033.20" y="682.00" width="13.80" height="172.00" fill="#58BCAE"/>
<rect x="2033.70" y="682.50" width="12.80" height="171" fill="none" stroke="#3F8A80" stroke-width="1"/>
<rect x="2033.20" y="714.00" width="13.80" height="1.50" fill="#459a8e"/>
<path d="M2034.5 718h2v6h-2zM2040.6 718h2v6h-2zM2037.7 726h2v6h-2zM2042.7 726h2v6h-2zM2033.9 734h2v6h-2zM2036.0 742h2v6h-2zM2039.9 742h2v6h-2zM2035.2 838h4v6h-4zM2042.2 838h2v6h-2z" fill="#141a19"/>
<rect x="2047.00" y="682.00" width="24.00" height="172.00" fill="#58BCAE"/>
<rect x="2047.50" y="682.50" width="23.00" height="171" fill="none" stroke="#3F8A80" stroke-width="1"/>
<rect x="2047.00" y="714.00" width="24.00" height="1.50" fill="#459a8e"/>
<path d="M2048.3 718h2v6h-2zM2055.2 718h2v6h-2zM2062.5 718h2v6h-2zM2051.5 726h2v6h-2zM2056.5 726h2v6h-2zM2060.5 726h2v6h-2zM2064.5 726h2v6h-2zM2048.5 734h2v6h-2zM2049.0 742h2v6h-2zM2053.7 742h2v6h-2zM2057.5 742h4v6h-4zM2064.3 742h2v6h-2zM2049.0 838h4v6h-4zM2056.0 838h2v6h-2zM2060.0 838h2v6h-2z" fill="#141a19"/>
<rect x="2071.00" y="682.00" width="26.00" height="172.00" fill="#58BCAE"/>
<rect x="2071.50" y="682.50" width="25.00" height="171" fill="none" stroke="#3F8A80" stroke-width="1"/>
<rect x="2071.00" y="714.00" width="26.00" height="1.50" fill="#459a8e"/>
<path d="M2074.4 718h2v6h-2zM2077.7 718h2v6h-2zM2086.5 718h2v6h-2zM2089.9 718h2v6h-2zM2077.0 726h2v6h-2zM2082.5 726h2v6h-2zM2085.7 726h2v6h-2zM2090.6 726h2v6h-2zM2073.0 734h2v6h-2zM2074.4 742h4v6h-4zM2078.4 742h2v6h-2zM2084.5 742h2v6h-2zM2093.2 742h2v6h-2zM2073.0 838h2v6h-2zM2077.7 838h4v6h-4zM2083.3 838h2v6h-2zM2087.1 838h3v6h-3z" fill="#141a19"/>
<rect x="2097.00" y="682.00" width="24.00" height="172.00" fill="#58BCAE"/>
<rect x="2097.50" y="682.50" width="23.00" height="171" fill="none" stroke="#3F8A80" stroke-width="1"/>
<rect x="2097.00" y="714.00" width="24.00" height="1.50" fill="#459a8e"/>
<path d="M2100.4 718h2v6h-2zM2103.7 718h2v6h-2zM2113.3 718h2v6h-2zM2116.7 718h2v6h-2zM2102.2 726h2v6h-2zM2109.3 726h2v6h-2zM2112.5 726h2v6h-2zM2117.4 726h2v6h-2zM2099.8 734h2v6h-2zM2101.2 742h4v6h-4zM2104.4 742h2v6h-2zM2111.3 742h2v6h-2zM2098.2 838h2v6h-2zM2104.5 838h4v6h-4zM2108.5 838h2v6h-2zM2113.1 838h3v6h-3z" fill="#141a19"/>
<rect x="2121.00" y="682.00" width="14.00" height="172.00" fill="#58BCAE"/>
<rect x="2121.50" y="682.50" width="13.00" height="171" fill="none" stroke="#3F8A80" stroke-width="1"/>
<rect x="2121.00" y="714.00" width="14.00" height="1.50" fill="#459a8e"/>
<path d="M2124.4 718h2v6h-2zM2128.5 718h2v6h-2zM2127.0 726h2v6h-2zM2123.0 734h2v6h-2zM2124.4 742h4v6h-4zM2129.2 742h2v6h-2zM2123.8 838h2v6h-2zM2126.9 838h4v6h-4z" fill="#141a19"/>
<rect x="2135.00" y="682.00" width="12.30" height="172.00" fill="#58BCAE"/>
<rect x="2135.50" y="682.50" width="11.30" height="171" fill="none" stroke="#3F8A80" stroke-width="1"/>
<rect x="2135.00" y="714.00" width="12.30" height="1.50" fill="#459a8e"/>
<path d="M2136.3 718h2v6h-2zM2141.6 718h2v6h-2zM2139.5 726h2v6h-2zM2135.7 734h2v6h-2zM2137.0 742h2v6h-2zM2141.7 742h2v6h-2zM2137.8 838h4v6h-4z" fill="#141a19"/>
<rect x="2147.30" y="682.00" width="11.80" height="172.00" fill="#58BCAE"/>
<rect x="2147.80" y="682.50" width="10.80" height="171" fill="none" stroke="#3F8A80" stroke-width="1"/>
<rect x="2147.30" y="714.00" width="11.80" height="1.50" fill="#459a8e"/>
<path d="M2149.9 718h2v6h-2zM2154.0 718h2v6h-2zM2153.3 726h2v6h-2zM2149.3 734h2v6h-2zM2149.9 742h4v6h-4zM2154.7 742h2v6h-2zM2149.3 838h2v6h-2z" fill="#141a19"/>
<rect x="2159.10" y="682.00" width="25.90" height="172.00" fill="#58BCAE"/>
<rect x="2159.60" y="682.50" width="24.90" height="171" fill="none" stroke="#3F8A80" stroke-width="1"/>
<rect x="2159.10" y="714.00" width="25.90" height="1.50" fill="#459a8e"/>
<path d="M2159.6 718h2v6h-2zM2167.3 718h2v6h-2zM2174.6 718h2v6h-2zM2178.5 718h4v6h-4zM2162.8 726h2v6h-2zM2169.4 726h2v6h-2zM2172.6 726h2v6h-2zM2176.6 726h2v6h-2zM2161.4 734h2v6h-2zM2160.3 742h2v6h-2zM2165.8 742h2v6h-2zM2169.6 742h4v6h-4zM2176.4 742h2v6h-2zM2181.9 742h2v6h-2zM2161.1 838h4v6h-4zM2168.1 838h2v6h-2zM2172.1 838h2v6h-2z" fill="#141a19"/>
<rect x="2185.00" y="682.00" width="23.90" height="172.00" fill="#58BCAE"/>
<rect x="2185.50" y="682.50" width="22.90" height="171" fill="none" stroke="#3F8A80" stroke-width="1"/>
<rect x="2185.00" y="714.00" width="23.90" height="1.50" fill="#459a8e"/>
<path d="M2187.1 718h2v6h-2zM2192.4 718h2v6h-2zM2200.5 718h2v6h-2zM2189.5 726h2v6h-2zM2195.3 726h2v6h-2zM2198.5 726h2v6h-2zM2202.5 726h2v6h-2zM2186.5 734h2v6h-2zM2187.0 742h2v6h-2zM2190.9 742h2v6h-2zM2195.5 742h4v6h-4zM2201.5 742h2v6h-2zM2187.8 838h4v6h-4zM2193.2 838h2v6h-2zM2198.8 838h2v6h-2z" fill="#141a19"/>
<rect x="2208.90" y="682.00" width="13.10" height="172.00" fill="#58BCAE"/>
<rect x="2209.40" y="682.50" width="12.10" height="171" fill="none" stroke="#3F8A80" stroke-width="1"/>
<rect x="2208.90" y="714.00" width="13.10" height="1.50" fill="#459a8e"/>
<path d="M2212.3 718h2v6h-2zM2216.4 718h2v6h-2zM2214.9 726h2v6h-2zM2210.9 734h2v6h-2zM2213.1 742h4v6h-4zM2215.5 742h2v6h-2zM2211.7 838h2v6h-2zM2214.8 838h4v6h-4z" fill="#141a19"/>
<rect x="6.00" y="858.00" width="1208.26" height="172.00" fill="#6A9F42"/>
<rect x="6.00" y="858.00" width="1208.26" height="1.50" fill="#5a8a36"/>
<rect x="6.00" y="890.00" width="1208.26" height="2.00" fill="#5f9139"/>
<rect x="56.34" y="860.00" width="2.00" height="4.00" fill="#1a2412"/>
<rect x="106.69" y="860.00" width="2.00" height="4.00" fill="#1a2412"/>
<rect x="157.03" y="860.00" width="2.00" height="4.00" fill="#1a2412"/>
<rect x="207.38" y="860.00" width="2.00" height="4.00" fill="#1a2412"/>
<rect x="257.72" y="860.00" width="2.00" height="4.00" fill="#1a2412"/>
<rect x="308.06" y="860.00" width="2.00" height="4.00" fill="#1a2412"/>
<rect x="358.41" y="860.00" width="2.00" height="4.00" fill="#1a2412"/>
<rect x="408.75" y="860.00" width="2.00" height="4.00" fill="#1a2412"/>
<rect x="459.10" y="860.00" width="2.00" height="4.00" fill="#1a2412"/>
<rect x="509.44" y="860.00" width="2.00" height="4.00" fill="#1a2412"/>
<rect x="559.78" y="860.00" width="2.00" height="4.00" fill="#1a2412"/>
<rect x="610.13" y="860.00" width="2.00" height="4.00" fill="#1a2412"/>
<rect x="660.47" y="860.00" width="2.00" height="4.00" fill="#1a2412"/>
<rect x="710.82" y="860.00" width="2.00" height="4.00" fill="#1a2412"/>
<rect x="761.16" y="860.00" width="2.00" height="4.00" fill="#1a2412"/>
<rect x="811.50" y="860.00" width="2.00" height="4.00" fill="#1a2412"/>
<rect x="861.85" y="860.00" width="2.00" height="4.00" fill="#1a2412"/>
<rect x="912.19" y="860.00" width="2.00" height="4.00" fill="#1a2412"/>
<rect x="962.54" y="860.00" width="2.00" height="4.00" fill="#1a2412"/>
<rect x="1012.88" y="860.00" width="2.00" height="4.00" fill="#1a2412"/>
<rect x="1063.22" y="860.00" width="2.00" height="4.00" fill="#1a2412"/>
<rect x="1113.57" y="860.00" width="2.00" height="4.00" fill="#1a2412"/>
<rect x="1163.91" y="860.00" width="2.00" height="4.00" fill="#1a2412"/>
<rect x="56.34" y="892.00" width="2.00" height="138.00" fill="#5d9038"/>
<rect x="106.69" y="892.00" width="2.00" height="138.00" fill="#5d9038"/>
<rect x="157.03" y="892.00" width="2.00" height="138.00" fill="#5d9038"/>
<rect x="207.38" y="892.00" width="2.00" height="138.00" fill="#5d9038"/>
<rect x="257.72" y="892.00" width="2.00" height="138.00" fill="#5d9038"/>
<rect x="308.06" y="892.00" width="2.00" height="138.00" fill="#5d9038"/>
<rect x="358.41" y="892.00" width="2.00" height="138.00" fill="#5d9038"/>
<rect x="408.75" y="892.00" width="2.00" height="138.00" fill="#5d9038"/>
<rect x="459.10" y="892.00" width="2.00" height="138.00" fill="#5d9038"/>
<rect x="509.44" y="892.00" width="2.00" height="138.00" fill="#5d9038"/>
<rect x="559.78" y="892.00" width="2.00" height="138.00" fill="#5d9038"/>
<rect x="610.13" y="892.00" width="2.00" height="138.00" fill="#5d9038"/>
<rect x="660.47" y="892.00" width="2.00" height="138.00" fill="#5d9038"/>
<rect x="710.82" y="892.00" width="2.00" height="138.00" fill="#5d9038"/>
<rect x="761.16" y="892.00" width="2.00" height="138.00" fill="#5d9038"/>
<rect x="811.50" y="892.00" width="2.00" height="138.00" fill="#5d9038"/>
<rect x="861.85" y="892.00" width="2.00" height="138.00" fill="#5d9038"/>
<rect x="912.19" y="892.00" width="2.00" height="138.00" fill="#5d9038"/>
<rect x="962.54" y="892.00" width="2.00" height="138.00" fill="#5d9038"/>
<rect x="1012.88" y="892.00" width="2.00" height="138.00" fill="#5d9038"/>
<rect x="1063.22" y="892.00" width="2.00" height="138.00" fill="#5d9038"/>
<rect x="1113.57" y="892.00" width="2.00" height="138.00" fill="#5d9038"/>
<rect x="1163.91" y="892.00" width="2.00" height="138.00" fill="#5d9038"/>
<path d="M7.0 913.0 Q11.3 905.0 13.3 905.0 Q15.3 905.0 19.6 913.0 Q23.9 897.5 25.9 897.5 Q27.9 897.5 32.2 913.0 Q36.5 897.5 38.5 897.5 Q40.5 897.5 44.8 913.0 Q49.0 897.5 51.1 897.5 Q53.1 897.5 57.3 913.0 Q61.6 905.0 63.6 905.0 Q65.7 905.0 69.9 913.0 Q74.2 897.5 76.2 897.5 Q78.2 897.5 82.5 913.0 Q86.8 897.5 88.8 897.5 Q90.8 897.5 95.1 913.0 Q99.4 897.5 101.4 897.5 Q103.4 897.5 107.7 913.0 Q112.0 905.0 114.0 905.0 Q116.0 905.0 120.3 913.0 Q124.6 897.5 126.6 897.5 Q128.6 897.5 132.9 913.0 Q137.1 897.5 139.2 897.5 Q141.2 897.5 145.4 913.0 Q149.7 897.5 151.7 897.5 Q153.8 897.5 158.0 913.0 Q162.3 905.0 164.3 905.0 Q166.3 905.0 170.6 913.0 Q174.9 897.5 176.9 897.5 Q178.9 897.5 183.2 913.0 Q187.5 897.5 189.5 897.5 Q191.5 897.5 195.8 913.0 Q200.1 897.5 202.1 897.5 Q204.1 897.5 208.4 913.0 Q212.7 905.0 214.7 905.0 Q216.7 905.0 221.0 913.0 Q225.2 897.5 227.3 897.5 Q229.3 897.5 233.5 913.0 Q237.8 897.5 239.8 897.5 Q241.9 897.5 246.1 913.0 Q250.4 897.5 252.4 897.5 Q254.4 897.5 258.7 913.0 Q263.0 905.0 265.0 905.0 Q267.0 905.0 271.3 913.0 Q275.6 897.5 277.6 897.5 Q279.6 897.5 283.9 913.0 Q288.2 897.5 290.2 897.5 Q292.2 897.5 296.5 913.0 Q300.8 897.5 302.8 897.5 Q304.8 897.5 309.1 913.0 Q313.3 905.0 315.4 905.0 Q317.4 905.0 321.7 913.0 Q325.9 897.5 327.9 897.5 Q330.0 897.5 334.2 913.0 Q338.5 897.5 340.5 897.5 Q342.5 897.5 346.8 913.0 Q351.1 897.5 353.1 897.5 Q355.1 897.5 359.4 913.0 Q363.7 905.0 365.7 905.0 Q367.7 905.0 372.0 913.0 Q376.3 897.5 378.3 897.5 Q380.3 897.5 384.6 913.0 Q388.9 897.5 390.9 897.5 Q392.9 897.5 397.2 913.0 Q401.4 897.5 403.5 897.5 Q405.5 897.5 409.8 913.0 Q414.0 905.0 416.0 905.0 Q418.1 905.0 422.3 913.0 Q426.6 897.5 428.6 897.5 Q430.6 897.5 434.9 913.0 Q439.2 897.5 441.2 897.5 Q443.2 897.5 447.5 913.0 Q451.8 897.5 453.8 897.5 Q455.8 897.5 460.1 913.0 Q464.4 905.0 466.4 905.0 Q468.4 905.0 472.7 913.0 Q477.0 897.5 479.0 897.5 Q481.0 897.5 485.3 913.0 Q489.5 897.5 491.6 897.5 Q493.6 897.5 497.9 913.0 Q502.1 897.5 504.1 897.5 Q506.2 897.5 510.4 913.0 Q514.7 905.0 516.7 905.0 Q518.7 905.0 523.0 913.0 Q527.3 897.5 529.3 897.5 Q531.3 897.5 535.6 913.0 Q539.9 897.5 541.9 897.5 Q543.9 897.5 548.2 913.0 Q552.5 897.5 554.5 897.5 Q556.5 897.5 560.8 913.0 Q565.1 905.0 567.1 905.0 Q569.1 905.0 573.4 913.0 Q577.6 897.5 579.7 897.5 Q581.7 897.5 586.0 913.0 Q590.2 897.5 592.2 897.5 Q594.3 897.5 598.5 913.0 Q602.8 897.5 604.8 897.5 Q606.8 897.5 611.1 913.0 Q615.4 905.0 617.4 905.0 Q619.4 905.0 623.7 913.0 Q628.0 897.5 630.0 897.5 Q632.0 897.5 636.3 913.0 Q640.6 897.5 642.6 897.5 Q644.6 897.5 648.9 913.0 Q653.2 897.5 655.2 897.5 Q657.2 897.5 661.5 913.0 Q665.8 905.0 667.8 905.0 Q669.8 905.0 674.1 913.0 Q678.3 897.5 680.4 897.5 Q682.4 897.5 686.6 913.0 Q690.9 897.5 692.9 897.5 Q695.0 897.5 699.2 913.0 Q703.5 897.5 705.5 897.5 Q707.5 897.5 711.8 913.0 Q716.1 905.0 718.1 905.0 Q720.1 905.0 724.4 913.0 Q728.7 897.5 730.7 897.5 Q732.7 897.5 737.0 913.0 Q741.3 897.5 743.3 897.5 Q745.3 897.5 749.6 913.0 Q753.9 897.5 755.9 897.5 Q757.9 897.5 762.2 913.0 Q766.4 905.0 768.5 905.0 Q770.5 905.0 774.7 913.0 Q779.0 897.5 781.0 897.5 Q783.1 897.5 787.3 913.0 Q791.6 897.5 793.6 897.5 Q795.6 897.5 799.9 913.0 Q804.2 897.5 806.2 897.5 Q808.2 897.5 812.5 913.0 Q816.8 905.0 818.8 905.0 Q820.8 905.0 825.1 913.0 Q829.4 897.5 831.4 897.5 Q833.4 897.5 837.7 913.0 Q842.0 897.5 844.0 897.5 Q846.0 897.5 850.3 913.0 Q854.5 897.5 856.6 897.5 Q858.6 897.5 862.8 913.0 Q867.1 905.0 869.1 905.0 Q871.2 905.0 875.4 913.0 Q879.7 897.5 881.7 897.5 Q883.7 897.5 888.0 913.0 Q892.3 897.5 894.3 897.5 Q896.3 897.5 900.6 913.0 Q904.9 897.5 906.9 897.5 Q908.9 897.5 913.2 913.0 Q917.5 905.0 919.5 905.0 Q921.5 905.0 925.8 913.0 Q930.1 897.5 932.1 897.5 Q934.1 897.5 938.4 913.0 Q942.6 897.5 944.7 897.5 Q946.7 897.5 951.0 913.0 Q955.2 897.5 957.2 897.5 Q959.3 897.5 963.5 913.0 Q967.8 905.0 969.8 905.0 Q971.8 905.0 976.1 913.0 Q980.4 897.5 982.4 897.5 Q984.4 897.5 988.7 913.0 Q993.0 897.5 995.0 897.5 Q997.0 897.5 1001.3 913.0 Q1005.6 897.5 1007.6 897.5 Q1009.6 897.5 1013.9 913.0 Q1018.2 905.0 1020.2 905.0 Q1022.2 905.0 1026.5 913.0 Q1030.7 897.5 1032.8 897.5 Q1034.8 897.5 1039.1 913.0 Q1043.3 897.5 1045.3 897.5 Q1047.4 897.5 1051.6 913.0 Q1055.9 897.5 1057.9 897.5 Q1059.9 897.5 1064.2 913.0 Q1068.5 905.0 1070.5 905.0 Q1072.5 905.0 1076.8 913.0 Q1081.1 897.5 1083.1 897.5 Q1085.1 897.5 1089.4 913.0 Q1093.7 897.5 1095.7 897.5 Q1097.7 897.5 1102.0 913.0 Q1106.3 897.5 1108.3 897.5 Q1110.3 897.5 1114.6 913.0 Q1118.8 905.0 1120.9 905.0 Q1122.9 905.0 1127.2 913.0 Q1131.4 897.5 1133.4 897.5 Q1135.5 897.5 1139.7 913.0 Q1144.0 897.5 1146.0 897.5 Q1148.0 897.5 1152.3 913.0 Q1156.6 897.5 1158.6 897.5 Q1160.6 897.5 1164.9 913.0 Q1169.2 905.0 1171.2 905.0 Q1173.2 905.0 1177.5 913.0 Q1181.8 897.5 1183.8 897.5 Q1185.8 897.5 1190.1 913.0 Q1194.4 897.5 1196.4 897.5 Q1198.4 897.5 1202.7 913.0 Q1206.4 897.5 1208.5 897.5 Q1210.5 897.5 1214.3 913.0 L1214.3 944.0 Q1210.5 959.5 1208.5 959.5 Q1206.4 959.5 1202.7 944.0 Q1198.4 959.5 1196.4 959.5 Q1194.4 959.5 1190.1 944.0 Q1185.8 959.5 1183.8 959.5 Q1181.8 959.5 1177.5 944.0 Q1173.2 952.0 1171.2 952.0 Q1169.2 952.0 1164.9 944.0 Q1160.6 959.5 1158.6 959.5 Q1156.6 959.5 1152.3 944.0 Q1148.0 959.5 1146.0 959.5 Q1144.0 959.5 1139.7 944.0 Q1135.5 959.5 1133.4 959.5 Q1131.4 959.5 1127.2 944.0 Q1122.9 952.0 1120.9 952.0 Q1118.8 952.0 1114.6 944.0 Q1110.3 959.5 1108.3 959.5 Q1106.3 959.5 1102.0 944.0 Q1097.7 959.5 1095.7 959.5 Q1093.7 959.5 1089.4 944.0 Q1085.1 959.5 1083.1 959.5 Q1081.1 959.5 1076.8 944.0 Q1072.5 952.0 1070.5 952.0 Q1068.5 952.0 1064.2 944.0 Q1059.9 959.5 1057.9 959.5 Q1055.9 959.5 1051.6 944.0 Q1047.4 959.5 1045.3 959.5 Q1043.3 959.5 1039.1 944.0 Q1034.8 959.5 1032.8 959.5 Q1030.7 959.5 1026.5 944.0 Q1022.2 952.0 1020.2 952.0 Q1018.2 952.0 1013.9 944.0 Q1009.6 959.5 1007.6 959.5 Q1005.6 959.5 1001.3 944.0 Q997.0 959.5 995.0 959.5 Q993.0 959.5 988.7 944.0 Q984.4 959.5 982.4 959.5 Q980.4 959.5 976.1 944.0 Q971.8 952.0 969.8 952.0 Q967.8 952.0 963.5 944.0 Q959.3 959.5 957.2 959.5 Q955.2 959.5 951.0 944.0 Q946.7 959.5 944.7 959.5 Q942.6 959.5 938.4 944.0 Q934.1 959.5 932.1 959.5 Q930.1 959.5 925.8 944.0 Q921.5 952.0 919.5 952.0 Q917.5 952.0 913.2 944.0 Q908.9 959.5 906.9 959.5 Q904.9 959.5 900.6 944.0 Q896.3 959.5 894.3 959.5 Q892.3 959.5 888.0 944.0 Q883.7 959.5 881.7 959.5 Q879.7 959.5 875.4 944.0 Q871.2 952.0 869.1 952.0 Q867.1 952.0 862.8 944.0 Q858.6 959.5 856.6 959.5 Q854.5 959.5 850.3 944.0 Q846.0 959.5 844.0 959.5 Q842.0 959.5 837.7 944.0 Q833.4 959.5 831.4 959.5 Q829.4 959.5 825.1 944.0 Q820.8 952.0 818.8 952.0 Q816.8 952.0 812.5 944.0 Q808.2 959.5 806.2 959.5 Q804.2 959.5 799.9 944.0 Q795.6 959.5 793.6 959.5 Q791.6 959.5 787.3 944.0 Q783.1 959.5 781.0 959.5 Q779.0 959.5 774.7 944.0 Q770.5 952.0 768.5 952.0 Q766.4 952.0 762.2 944.0 Q757.9 959.5 755.9 959.5 Q753.9 959.5 749.6 944.0 Q745.3 959.5 743.3 959.5 Q741.3 959.5 737.0 944.0 Q732.7 959.5 730.7 959.5 Q728.7 959.5 724.4 944.0 Q720.1 952.0 718.1 952.0 Q716.1 952.0 711.8 944.0 Q707.5 959.5 705.5 959.5 Q703.5 959.5 699.2 944.0 Q695.0 959.5 692.9 959.5 Q690.9 959.5 686.6 944.0 Q682.4 959.5 680.4 959.5 Q678.3 959.5 674.1 944.0 Q669.8 952.0 667.8 952.0 Q665.8 952.0 661.5 944.0 Q657.2 959.5 655.2 959.5 Q653.2 959.5 648.9 944.0 Q644.6 959.5 642.6 959.5 Q640.6 959.5 636.3 944.0 Q632.0 959.5 630.0 959.5 Q628.0 959.5 623.7 944.0 Q619.4 952.0 617.4 952.0 Q615.4 952.0 611.1 944.0 Q606.8 959.5 604.8 959.5 Q602.8 959.5 598.5 944.0 Q594.3 959.5 592.2 959.5 Q590.2 959.5 586.0 944.0 Q581.7 959.5 579.7 959.5 Q577.6 959.5 573.4 944.0 Q569.1 952.0 567.1 952.0 Q565.1 952.0 560.8 944.0 Q556.5 959.5 554.5 959.5 Q552.5 959.5 548.2 944.0 Q543.9 959.5 541.9 959.5 Q539.9 959.5 535.6 944.0 Q531.3 959.5 529.3 959.5 Q527.3 959.5 523.0 944.0 Q518.7 952.0 516.7 952.0 Q514.7 952.0 510.4 944.0 Q506.2 959.5 504.1 959.5 Q502.1 959.5 497.9 944.0 Q493.6 959.5 491.6 959.5 Q489.5 959.5 485.3 944.0 Q481.0 959.5 479.0 959.5 Q477.0 959.5 472.7 944.0 Q468.4 952.0 466.4 952.0 Q464.4 952.0 460.1 944.0 Q455.8 959.5 453.8 959.5 Q451.8 959.5 447.5 944.0 Q443.2 959.5 441.2 959.5 Q439.2 959.5 434.9 944.0 Q430.6 959.5 428.6 959.5 Q426.6 959.5 422.3 944.0 Q418.1 952.0 416.0 952.0 Q414.0 952.0 409.8 944.0 Q405.5 959.5 403.5 959.5 Q401.4 959.5 397.2 944.0 Q392.9 959.5 390.9 959.5 Q388.9 959.5 384.6 944.0 Q380.3 959.5 378.3 959.5 Q376.3 959.5 372.0 944.0 Q367.7 952.0 365.7 952.0 Q363.7 952.0 359.4 944.0 Q355.1 959.5 353.1 959.5 Q351.1 959.5 346.8 944.0 Q342.5 959.5 340.5 959.5 Q338.5 959.5 334.2 944.0 Q330.0 959.5 327.9 959.5 Q325.9 959.5 321.7 944.0 Q317.4 952.0 315.4 952.0 Q313.3 952.0 309.1 944.0 Q304.8 959.5 302.8 959.5 Q300.8 959.5 296.5 944.0 Q292.2 959.5 290.2 959.5 Q288.2 959.5 283.9 944.0 Q279.6 959.5 277.6 959.5 Q275.6 959.5 271.3 944.0 Q267.0 952.0 265.0 952.0 Q263.0 952.0 258.7 944.0 Q254.4 959.5 252.4 959.5 Q250.4 959.5 246.1 944.0 Q241.9 959.5 239.8 959.5 Q237.8 959.5 233.5 944.0 Q229.3 959.5 227.3 959.5 Q225.2 959.5 221.0 944.0 Q216.7 952.0 214.7 952.0 Q212.7 952.0 208.4 944.0 Q204.1 959.5 202.1 959.5 Q200.1 959.5 195.8 944.0 Q191.5 959.5 189.5 959.5 Q187.5 959.5 183.2 944.0 Q178.9 959.5 176.9 959.5 Q174.9 959.5 170.6 944.0 Q166.3 952.0 164.3 952.0 Q162.3 952.0 158.0 944.0 Q153.8 959.5 151.7 959.5 Q149.7 959.5 145.4 944.0 Q141.2 959.5 139.2 959.5 Q137.1 959.5 132.9 944.0 Q128.6 959.5 126.6 959.5 Q124.6 959.5 120.3 944.0 Q116.0 952.0 114.0 952.0 Q112.0 952.0 107.7 944.0 Q103.4 959.5 101.4 959.5 Q99.4 959.5 95.1 944.0 Q90.8 959.5 88.8 959.5 Q86.8 959.5 82.5 944.0 Q78.2 959.5 76.2 959.5 Q74.2 959.5 69.9 944.0 Q65.7 952.0 63.6 952.0 Q61.6 952.0 57.3 944.0 Q53.1 959.5 51.1 959.5 Q49.0 959.5 44.8 944.0 Q40.5 959.5 38.5 959.5 Q36.5 959.5 32.2 944.0 Q27.9 959.5 25.9 959.5 Q23.9 959.5 19.6 944.0 Q15.3 952.0 13.3 952.0 Q11.3 952.0 7.0 944.0Z" fill="#1B1D18" shape-rendering="geometricPrecision"/>
<path d="M7.0 980.0 Q11.3 970.0 13.3 970.0 Q15.3 970.0 19.6 980.0 Q23.9 966.5 25.9 966.5 Q27.9 966.5 32.2 980.0 Q36.5 966.5 38.5 966.5 Q40.5 966.5 44.8 980.0 Q49.0 966.5 51.1 966.5 Q53.1 966.5 57.3 980.0 Q61.6 970.0 63.6 970.0 Q65.7 970.0 69.9 980.0 Q74.2 966.5 76.2 966.5 Q78.2 966.5 82.5 980.0 Q86.8 966.5 88.8 966.5 Q90.8 966.5 95.1 980.0 Q99.4 966.5 101.4 966.5 Q103.4 966.5 107.7 980.0 Q112.0 970.0 114.0 970.0 Q116.0 970.0 120.3 980.0 Q124.6 966.5 126.6 966.5 Q128.6 966.5 132.9 980.0 Q137.1 966.5 139.2 966.5 Q141.2 966.5 145.4 980.0 Q149.7 966.5 151.7 966.5 Q153.8 966.5 158.0 980.0 Q162.3 970.0 164.3 970.0 Q166.3 970.0 170.6 980.0 Q174.9 966.5 176.9 966.5 Q178.9 966.5 183.2 980.0 Q187.5 966.5 189.5 966.5 Q191.5 966.5 195.8 980.0 Q200.1 966.5 202.1 966.5 Q204.1 966.5 208.4 980.0 Q212.7 970.0 214.7 970.0 Q216.7 970.0 221.0 980.0 Q225.2 966.5 227.3 966.5 Q229.3 966.5 233.5 980.0 Q237.8 966.5 239.8 966.5 Q241.9 966.5 246.1 980.0 Q250.4 966.5 252.4 966.5 Q254.4 966.5 258.7 980.0 Q263.0 970.0 265.0 970.0 Q267.0 970.0 271.3 980.0 Q275.6 966.5 277.6 966.5 Q279.6 966.5 283.9 980.0 Q288.2 966.5 290.2 966.5 Q292.2 966.5 296.5 980.0 Q300.8 966.5 302.8 966.5 Q304.8 966.5 309.1 980.0 Q313.3 970.0 315.4 970.0 Q317.4 970.0 321.7 980.0 Q325.9 966.5 327.9 966.5 Q330.0 966.5 334.2 980.0 Q338.5 966.5 340.5 966.5 Q342.5 966.5 346.8 980.0 Q351.1 966.5 353.1 966.5 Q355.1 966.5 359.4 980.0 Q363.7 970.0 365.7 970.0 Q367.7 970.0 372.0 980.0 Q376.3 966.5 378.3 966.5 Q380.3 966.5 384.6 980.0 Q388.9 966.5 390.9 966.5 Q392.9 966.5 397.2 980.0 Q401.4 966.5 403.5 966.5 Q405.5 966.5 409.8 980.0 Q414.0 970.0 416.0 970.0 Q418.1 970.0 422.3 980.0 Q426.6 966.5 428.6 966.5 Q430.6 966.5 434.9 980.0 Q439.2 966.5 441.2 966.5 Q443.2 966.5 447.5 980.0 Q451.8 966.5 453.8 966.5 Q455.8 966.5 460.1 980.0 Q464.4 970.0 466.4 970.0 Q468.4 970.0 472.7 980.0 Q477.0 966.5 479.0 966.5 Q481.0 966.5 485.3 980.0 Q489.5 966.5 491.6 966.5 Q493.6 966.5 497.9 980.0 Q502.1 966.5 504.1 966.5 Q506.2 966.5 510.4 980.0 Q514.7 970.0 516.7 970.0 Q518.7 970.0 523.0 980.0 Q527.3 966.5 529.3 966.5 Q531.3 966.5 535.6 980.0 Q539.9 966.5 541.9 966.5 Q543.9 966.5 548.2 980.0 Q552.5 966.5 554.5 966.5 Q556.5 966.5 560.8 980.0 Q565.1 970.0 567.1 970.0 Q569.1 970.0 573.4 980.0 Q577.6 966.5 579.7 966.5 Q581.7 966.5 586.0 980.0 Q590.2 966.5 592.2 966.5 Q594.3 966.5 598.5 980.0 Q602.8 966.5 604.8 966.5 Q606.8 966.5 611.1 980.0 Q615.4 970.0 617.4 970.0 Q619.4 970.0 623.7 980.0 Q628.0 966.5 630.0 966.5 Q632.0 966.5 636.3 980.0 Q640.6 966.5 642.6 966.5 Q644.6 966.5 648.9 980.0 Q653.2 966.5 655.2 966.5 Q657.2 966.5 661.5 980.0 Q665.8 970.0 667.8 970.0 Q669.8 970.0 674.1 980.0 Q678.3 966.5 680.4 966.5 Q682.4 966.5 686.6 980.0 Q690.9 966.5 692.9 966.5 Q695.0 966.5 699.2 980.0 Q703.5 966.5 705.5 966.5 Q707.5 966.5 711.8 980.0 Q716.1 970.0 718.1 970.0 Q720.1 970.0 724.4 980.0 Q728.7 966.5 730.7 966.5 Q732.7 966.5 737.0 980.0 Q741.3 966.5 743.3 966.5 Q745.3 966.5 749.6 980.0 Q753.9 966.5 755.9 966.5 Q757.9 966.5 762.2 980.0 Q766.4 970.0 768.5 970.0 Q770.5 970.0 774.7 980.0 Q779.0 966.5 781.0 966.5 Q783.1 966.5 787.3 980.0 Q791.6 966.5 793.6 966.5 Q795.6 966.5 799.9 980.0 Q804.2 966.5 806.2 966.5 Q808.2 966.5 812.5 980.0 Q816.8 970.0 818.8 970.0 Q820.8 970.0 825.1 980.0 Q829.4 966.5 831.4 966.5 Q833.4 966.5 837.7 980.0 Q842.0 966.5 844.0 966.5 Q846.0 966.5 850.3 980.0 Q854.5 966.5 856.6 966.5 Q858.6 966.5 862.8 980.0 Q867.1 970.0 869.1 970.0 Q871.2 970.0 875.4 980.0 Q879.7 966.5 881.7 966.5 Q883.7 966.5 888.0 980.0 Q892.3 966.5 894.3 966.5 Q896.3 966.5 900.6 980.0 Q904.9 966.5 906.9 966.5 Q908.9 966.5 913.2 980.0 Q917.5 970.0 919.5 970.0 Q921.5 970.0 925.8 980.0 Q930.1 966.5 932.1 966.5 Q934.1 966.5 938.4 980.0 Q942.6 966.5 944.7 966.5 Q946.7 966.5 951.0 980.0 Q955.2 966.5 957.2 966.5 Q959.3 966.5 963.5 980.0 Q967.8 970.0 969.8 970.0 Q971.8 970.0 976.1 980.0 Q980.4 966.5 982.4 966.5 Q984.4 966.5 988.7 980.0 Q993.0 966.5 995.0 966.5 Q997.0 966.5 1001.3 980.0 Q1005.6 966.5 1007.6 966.5 Q1009.6 966.5 1013.9 980.0 Q1018.2 970.0 1020.2 970.0 Q1022.2 970.0 1026.5 980.0 Q1030.7 966.5 1032.8 966.5 Q1034.8 966.5 1039.1 980.0 Q1043.3 966.5 1045.3 966.5 Q1047.4 966.5 1051.6 980.0 Q1055.9 966.5 1057.9 966.5 Q1059.9 966.5 1064.2 980.0 Q1068.5 970.0 1070.5 970.0 Q1072.5 970.0 1076.8 980.0 Q1081.1 966.5 1083.1 966.5 Q1085.1 966.5 1089.4 980.0 Q1093.7 966.5 1095.7 966.5 Q1097.7 966.5 1102.0 980.0 Q1106.3 966.5 1108.3 966.5 Q1110.3 966.5 1114.6 980.0 Q1118.8 970.0 1120.9 970.0 Q1122.9 970.0 1127.2 980.0 Q1131.4 966.5 1133.4 966.5 Q1135.5 966.5 1139.7 980.0 Q1144.0 966.5 1146.0 966.5 Q1148.0 966.5 1152.3 980.0 Q1156.6 966.5 1158.6 966.5 Q1160.6 966.5 1164.9 980.0 Q1169.2 970.0 1171.2 970.0 Q1173.2 970.0 1177.5 980.0 Q1181.8 966.5 1183.8 966.5 Q1185.8 966.5 1190.1 980.0 Q1194.4 966.5 1196.4 966.5 Q1198.4 966.5 1202.7 980.0 Q1206.4 966.5 1208.5 966.5 Q1210.5 966.5 1214.3 980.0 L1214.3 1014.0 Q1210.5 1030.0 1208.5 1030.0 Q1206.4 1030.0 1202.7 1014.0 Q1198.4 1030.0 1196.4 1030.0 Q1194.4 1030.0 1190.1 1014.0 Q1185.8 1030.0 1183.8 1030.0 Q1181.8 1030.0 1177.5 1014.0 Q1173.2 1026.0 1171.2 1026.0 Q1169.2 1026.0 1164.9 1014.0 Q1160.6 1030.0 1158.6 1030.0 Q1156.6 1030.0 1152.3 1014.0 Q1148.0 1030.0 1146.0 1030.0 Q1144.0 1030.0 1139.7 1014.0 Q1135.5 1030.0 1133.4 1030.0 Q1131.4 1030.0 1127.2 1014.0 Q1122.9 1026.0 1120.9 1026.0 Q1118.8 1026.0 1114.6 1014.0 Q1110.3 1030.0 1108.3 1030.0 Q1106.3 1030.0 1102.0 1014.0 Q1097.7 1030.0 1095.7 1030.0 Q1093.7 1030.0 1089.4 1014.0 Q1085.1 1030.0 1083.1 1030.0 Q1081.1 1030.0 1076.8 1014.0 Q1072.5 1026.0 1070.5 1026.0 Q1068.5 1026.0 1064.2 1014.0 Q1059.9 1030.0 1057.9 1030.0 Q1055.9 1030.0 1051.6 1014.0 Q1047.4 1030.0 1045.3 1030.0 Q1043.3 1030.0 1039.1 1014.0 Q1034.8 1030.0 1032.8 1030.0 Q1030.7 1030.0 1026.5 1014.0 Q1022.2 1026.0 1020.2 1026.0 Q1018.2 1026.0 1013.9 1014.0 Q1009.6 1030.0 1007.6 1030.0 Q1005.6 1030.0 1001.3 1014.0 Q997.0 1030.0 995.0 1030.0 Q993.0 1030.0 988.7 1014.0 Q984.4 1030.0 982.4 1030.0 Q980.4 1030.0 976.1 1014.0 Q971.8 1026.0 969.8 1026.0 Q967.8 1026.0 963.5 1014.0 Q959.3 1030.0 957.2 1030.0 Q955.2 1030.0 951.0 1014.0 Q946.7 1030.0 944.7 1030.0 Q942.6 1030.0 938.4 1014.0 Q934.1 1030.0 932.1 1030.0 Q930.1 1030.0 925.8 1014.0 Q921.5 1026.0 919.5 1026.0 Q917.5 1026.0 913.2 1014.0 Q908.9 1030.0 906.9 1030.0 Q904.9 1030.0 900.6 1014.0 Q896.3 1030.0 894.3 1030.0 Q892.3 1030.0 888.0 1014.0 Q883.7 1030.0 881.7 1030.0 Q879.7 1030.0 875.4 1014.0 Q871.2 1026.0 869.1 1026.0 Q867.1 1026.0 862.8 1014.0 Q858.6 1030.0 856.6 1030.0 Q854.5 1030.0 850.3 1014.0 Q846.0 1030.0 844.0 1030.0 Q842.0 1030.0 837.7 1014.0 Q833.4 1030.0 831.4 1030.0 Q829.4 1030.0 825.1 1014.0 Q820.8 1026.0 818.8 1026.0 Q816.8 1026.0 812.5 1014.0 Q808.2 1030.0 806.2 1030.0 Q804.2 1030.0 799.9 1014.0 Q795.6 1030.0 793.6 1030.0 Q791.6 1030.0 787.3 1014.0 Q783.1 1030.0 781.0 1030.0 Q779.0 1030.0 774.7 1014.0 Q770.5 1026.0 768.5 1026.0 Q766.4 1026.0 762.2 1014.0 Q757.9 1030.0 755.9 1030.0 Q753.9 1030.0 749.6 1014.0 Q745.3 1030.0 743.3 1030.0 Q741.3 1030.0 737.0 1014.0 Q732.7 1030.0 730.7 1030.0 Q728.7 1030.0 724.4 1014.0 Q720.1 1026.0 718.1 1026.0 Q716.1 1026.0 711.8 1014.0 Q707.5 1030.0 705.5 1030.0 Q703.5 1030.0 699.2 1014.0 Q695.0 1030.0 692.9 1030.0 Q690.9 1030.0 686.6 1014.0 Q682.4 1030.0 680.4 1030.0 Q678.3 1030.0 674.1 1014.0 Q669.8 1026.0 667.8 1026.0 Q665.8 1026.0 661.5 1014.0 Q657.2 1030.0 655.2 1030.0 Q653.2 1030.0 648.9 1014.0 Q644.6 1030.0 642.6 1030.0 Q640.6 1030.0 636.3 1014.0 Q632.0 1030.0 630.0 1030.0 Q628.0 1030.0 623.7 1014.0 Q619.4 1026.0 617.4 1026.0 Q615.4 1026.0 611.1 1014.0 Q606.8 1030.0 604.8 1030.0 Q602.8 1030.0 598.5 1014.0 Q594.3 1030.0 592.2 1030.0 Q590.2 1030.0 586.0 1014.0 Q581.7 1030.0 579.7 1030.0 Q577.6 1030.0 573.4 1014.0 Q569.1 1026.0 567.1 1026.0 Q565.1 1026.0 560.8 1014.0 Q556.5 1030.0 554.5 1030.0 Q552.5 1030.0 548.2 1014.0 Q543.9 1030.0 541.9 1030.0 Q539.9 1030.0 535.6 1014.0 Q531.3 1030.0 529.3 1030.0 Q527.3 1030.0 523.0 1014.0 Q518.7 1026.0 516.7 1026.0 Q514.7 1026.0 510.4 1014.0 Q506.2 1030.0 504.1 1030.0 Q502.1 1030.0 497.9 1014.0 Q493.6 1030.0 491.6 1030.0 Q489.5 1030.0 485.3 1014.0 Q481.0 1030.0 479.0 1030.0 Q477.0 1030.0 472.7 1014.0 Q468.4 1026.0 466.4 1026.0 Q464.4 1026.0 460.1 1014.0 Q455.8 1030.0 453.8 1030.0 Q451.8 1030.0 447.5 1014.0 Q443.2 1030.0 441.2 1030.0 Q439.2 1030.0 434.9 1014.0 Q430.6 1030.0 428.6 1030.0 Q426.6 1030.0 422.3 1014.0 Q418.1 1026.0 416.0 1026.0 Q414.0 1026.0 409.8 1014.0 Q405.5 1030.0 403.5 1030.0 Q401.4 1030.0 397.2 1014.0 Q392.9 1030.0 390.9 1030.0 Q388.9 1030.0 384.6 1014.0 Q380.3 1030.0 378.3 1030.0 Q376.3 1030.0 372.0 1014.0 Q367.7 1026.0 365.7 1026.0 Q363.7 1026.0 359.4 1014.0 Q355.1 1030.0 353.1 1030.0 Q351.1 1030.0 346.8 1014.0 Q342.5 1030.0 340.5 1030.0 Q338.5 1030.0 334.2 1014.0 Q330.0 1030.0 327.9 1030.0 Q325.9 1030.0 321.7 1014.0 Q317.4 1026.0 315.4 1026.0 Q313.3 1026.0 309.1 1014.0 Q304.8 1030.0 302.8 1030.0 Q300.8 1030.0 296.5 1014.0 Q292.2 1030.0 290.2 1030.0 Q288.2 1030.0 283.9 1014.0 Q279.6 1030.0 277.6 1030.0 Q275.6 1030.0 271.3 1014.0 Q267.0 1026.0 265.0 1026.0 Q263.0 1026.0 258.7 1014.0 Q254.4 1030.0 252.4 1030.0 Q250.4 1030.0 246.1 1014.0 Q241.9 1030.0 239.8 1030.0 Q237.8 1030.0 233.5 1014.0 Q229.3 1030.0 227.3 1030.0 Q225.2 1030.0 221.0 1014.0 Q216.7 1026.0 214.7 1026.0 Q212.7 1026.0 208.4 1014.0 Q204.1 1030.0 202.1 1030.0 Q200.1 1030.0 195.8 1014.0 Q191.5 1030.0 189.5 1030.0 Q187.5 1030.0 183.2 1014.0 Q178.9 1030.0 176.9 1030.0 Q174.9 1030.0 170.6 1014.0 Q166.3 1026.0 164.3 1026.0 Q162.3 1026.0 158.0 1014.0 Q153.8 1030.0 151.7 1030.0 Q149.7 1030.0 145.4 1014.0 Q141.2 1030.0 139.2 1030.0 Q137.1 1030.0 132.9 1014.0 Q128.6 1030.0 126.6 1030.0 Q124.6 1030.0 120.3 1014.0 Q116.0 1026.0 114.0 1026.0 Q112.0 1026.0 107.7 1014.0 Q103.4 1030.0 101.4 1030.0 Q99.4 1030.0 95.1 1014.0 Q90.8 1030.0 88.8 1030.0 Q86.8 1030.0 82.5 1014.0 Q78.2 1030.0 76.2 1030.0 Q74.2 1030.0 69.9 1014.0 Q65.7 1026.0 63.6 1026.0 Q61.6 1026.0 57.3 1014.0 Q53.1 1030.0 51.1 1030.0 Q49.0 1030.0 44.8 1014.0 Q40.5 1030.0 38.5 1030.0 Q36.5 1030.0 32.2 1014.0 Q27.9 1030.0 25.9 1030.0 Q23.9 1030.0 19.6 1014.0 Q15.3 1026.0 13.3 1026.0 Q11.3 1026.0 7.0 1014.0Z" fill="#1B1D18" shape-rendering="geometricPrecision"/>
<rect x="6.00" y="858.00" width="1.50" height="172.00" fill="#4f7d2e"/>
<rect x="1214.26" y="858.00" width="201.38" height="172.00" fill="#6A9F42"/>
<rect x="1214.26" y="858.00" width="201.38" height="1.50" fill="#5a8a36"/>
<rect x="1214.26" y="890.00" width="201.38" height="2.00" fill="#5f9139"/>
<rect x="1264.60" y="860.00" width="2.00" height="4.00" fill="#1a2412"/>
<rect x="1314.94" y="860.00" width="2.00" height="4.00" fill="#1a2412"/>
<rect x="1365.29" y="860.00" width="2.00" height="4.00" fill="#1a2412"/>
<rect x="1264.60" y="892.00" width="2.00" height="138.00" fill="#5d9038"/>
<rect x="1314.94" y="892.00" width="2.00" height="138.00" fill="#5d9038"/>
<rect x="1365.29" y="892.00" width="2.00" height="138.00" fill="#5d9038"/>
<path d="M1215.3 913.0 Q1219.5 905.0 1221.5 905.0 Q1223.6 905.0 1227.8 913.0 Q1232.1 897.5 1234.1 897.5 Q1236.1 897.5 1240.4 913.0 Q1244.7 897.5 1246.7 897.5 Q1248.7 897.5 1253.0 913.0 Q1257.3 897.5 1259.3 897.5 Q1261.3 897.5 1265.6 913.0 Q1269.9 905.0 1271.9 905.0 Q1273.9 905.0 1278.2 913.0 Q1282.5 897.5 1284.5 897.5 Q1286.5 897.5 1290.8 913.0 Q1295.1 897.5 1297.1 897.5 Q1299.1 897.5 1303.4 913.0 Q1307.6 897.5 1309.7 897.5 Q1311.7 897.5 1315.9 913.0 Q1320.2 905.0 1322.2 905.0 Q1324.3 905.0 1328.5 913.0 Q1332.8 897.5 1334.8 897.5 Q1336.8 897.5 1341.1 913.0 Q1345.4 897.5 1347.4 897.5 Q1349.4 897.5 1353.7 913.0 Q1358.0 897.5 1360.0 897.5 Q1362.0 897.5 1366.3 913.0 Q1370.6 905.0 1372.6 905.0 Q1374.6 905.0 1378.9 913.0 Q1383.2 897.5 1385.2 897.5 Q1387.2 897.5 1391.5 913.0 Q1395.7 897.5 1397.8 897.5 Q1399.8 897.5 1404.0 913.0 Q1407.8 897.5 1409.8 897.5 Q1411.9 897.5 1415.6 913.0 L1415.6 944.0 Q1411.9 959.5 1409.8 959.5 Q1407.8 959.5 1404.0 944.0 Q1399.8 959.5 1397.8 959.5 Q1395.7 959.5 1391.5 944.0 Q1387.2 959.5 1385.2 959.5 Q1383.2 959.5 1378.9 944.0 Q1374.6 952.0 1372.6 952.0 Q1370.6 952.0 1366.3 944.0 Q1362.0 959.5 1360.0 959.5 Q1358.0 959.5 1353.7 944.0 Q1349.4 959.5 1347.4 959.5 Q1345.4 959.5 1341.1 944.0 Q1336.8 959.5 1334.8 959.5 Q1332.8 959.5 1328.5 944.0 Q1324.3 952.0 1322.2 952.0 Q1320.2 952.0 1315.9 944.0 Q1311.7 959.5 1309.7 959.5 Q1307.6 959.5 1303.4 944.0 Q1299.1 959.5 1297.1 959.5 Q1295.1 959.5 1290.8 944.0 Q1286.5 959.5 1284.5 959.5 Q1282.5 959.5 1278.2 944.0 Q1273.9 952.0 1271.9 952.0 Q1269.9 952.0 1265.6 944.0 Q1261.3 959.5 1259.3 959.5 Q1257.3 959.5 1253.0 944.0 Q1248.7 959.5 1246.7 959.5 Q1244.7 959.5 1240.4 944.0 Q1236.1 959.5 1234.1 959.5 Q1232.1 959.5 1227.8 944.0 Q1223.6 952.0 1221.5 952.0 Q1219.5 952.0 1215.3 944.0Z" fill="#1B1D18" shape-rendering="geometricPrecision"/>
<path d="M1215.3 980.0 Q1219.5 970.0 1221.5 970.0 Q1223.6 970.0 1227.8 980.0 Q1232.1 966.5 1234.1 966.5 Q1236.1 966.5 1240.4 980.0 Q1244.7 966.5 1246.7 966.5 Q1248.7 966.5 1253.0 980.0 Q1257.3 966.5 1259.3 966.5 Q1261.3 966.5 1265.6 980.0 Q1269.9 970.0 1271.9 970.0 Q1273.9 970.0 1278.2 980.0 Q1282.5 966.5 1284.5 966.5 Q1286.5 966.5 1290.8 980.0 Q1295.1 966.5 1297.1 966.5 Q1299.1 966.5 1303.4 980.0 Q1307.6 966.5 1309.7 966.5 Q1311.7 966.5 1315.9 980.0 Q1320.2 970.0 1322.2 970.0 Q1324.3 970.0 1328.5 980.0 Q1332.8 966.5 1334.8 966.5 Q1336.8 966.5 1341.1 980.0 Q1345.4 966.5 1347.4 966.5 Q1349.4 966.5 1353.7 980.0 Q1358.0 966.5 1360.0 966.5 Q1362.0 966.5 1366.3 980.0 Q1370.6 970.0 1372.6 970.0 Q1374.6 970.0 1378.9 980.0 Q1383.2 966.5 1385.2 966.5 Q1387.2 966.5 1391.5 980.0 Q1395.7 966.5 1397.8 966.5 Q1399.8 966.5 1404.0 980.0 Q1407.8 966.5 1409.8 966.5 Q1411.9 966.5 1415.6 980.0 L1415.6 1014.0 Q1411.9 1030.0 1409.8 1030.0 Q1407.8 1030.0 1404.0 1014.0 Q1399.8 1030.0 1397.8 1030.0 Q1395.7 1030.0 1391.5 1014.0 Q1387.2 1030.0 1385.2 1030.0 Q1383.2 1030.0 1378.9 1014.0 Q1374.6 1026.0 1372.6 1026.0 Q1370.6 1026.0 1366.3 1014.0 Q1362.0 1030.0 1360.0 1030.0 Q1358.0 1030.0 1353.7 1014.0 Q1349.4 1030.0 1347.4 1030.0 Q1345.4 1030.0 1341.1 1014.0 Q1336.8 1030.0 1334.8 1030.0 Q1332.8 1030.0 1328.5 1014.0 Q1324.3 1026.0 1322.2 1026.0 Q1320.2 1026.0 1315.9 1014.0 Q1311.7 1030.0 1309.7 1030.0 Q1307.6 1030.0 1303.4 1014.0 Q1299.1 1030.0 1297.1 1030.0 Q1295.1 1030.0 1290.8 1014.0 Q1286.5 1030.0 1284.5 1030.0 Q1282.5 1030.0 1278.2 1014.0 Q1273.9 1026.0 1271.9 1026.0 Q1269.9 1026.0 1265.6 1014.0 Q1261.3 1030.0 1259.3 1030.0 Q1257.3 1030.0 1253.0 1014.0 Q1248.7 1030.0 1246.7 1030.0 Q1244.7 1030.0 1240.4 1014.0 Q1236.1 1030.0 1234.1 1030.0 Q1232.1 1030.0 1227.8 1014.0 Q1223.6 1026.0 1221.5 1026.0 Q1219.5 1026.0 1215.3 1014.0Z" fill="#1B1D18" shape-rendering="geometricPrecision"/>
<rect x="1214.26" y="858.00" width="1.50" height="172.00" fill="#4f7d2e"/>
<rect x="1415.63" y="858.00" width="805.50" height="172.00" fill="#6A9F42"/>
<rect x="1415.63" y="858.00" width="805.50" height="1.50" fill="#5a8a36"/>
<rect x="1415.63" y="890.00" width="805.50" height="2.00" fill="#5f9139"/>
<rect x="1465.98" y="860.00" width="2.00" height="4.00" fill="#1a2412"/>
<rect x="1516.32" y="860.00" width="2.00" height="4.00" fill="#1a2412"/>
<rect x="1566.66" y="860.00" width="2.00" height="4.00" fill="#1a2412"/>
<rect x="1617.01" y="860.00" width="2.00" height="4.00" fill="#1a2412"/>
<rect x="1667.35" y="860.00" width="2.00" height="4.00" fill="#1a2412"/>
<rect x="1717.70" y="860.00" width="2.00" height="4.00" fill="#1a2412"/>
<rect x="1768.04" y="860.00" width="2.00" height="4.00" fill="#1a2412"/>
<rect x="1818.38" y="860.00" width="2.00" height="4.00" fill="#1a2412"/>
<rect x="1868.73" y="860.00" width="2.00" height="4.00" fill="#1a2412"/>
<rect x="1919.07" y="860.00" width="2.00" height="4.00" fill="#1a2412"/>
<rect x="1969.42" y="860.00" width="2.00" height="4.00" fill="#1a2412"/>
<rect x="2019.76" y="860.00" width="2.00" height="4.00" fill="#1a2412"/>
<rect x="2070.10" y="860.00" width="2.00" height="4.00" fill="#1a2412"/>
<rect x="2120.45" y="860.00" width="2.00" height="4.00" fill="#1a2412"/>
<rect x="2170.79" y="860.00" width="2.00" height="4.00" fill="#1a2412"/>
<rect x="1465.98" y="892.00" width="2.00" height="138.00" fill="#5d9038"/>
<rect x="1516.32" y="892.00" width="2.00" height="138.00" fill="#5d9038"/>
<rect x="1566.66" y="892.00" width="2.00" height="138.00" fill="#5d9038"/>
<rect x="1617.01" y="892.00" width="2.00" height="138.00" fill="#5d9038"/>
<rect x="1667.35" y="892.00" width="2.00" height="138.00" fill="#5d9038"/>
<rect x="1717.70" y="892.00" width="2.00" height="138.00" fill="#5d9038"/>
<rect x="1768.04" y="892.00" width="2.00" height="138.00" fill="#5d9038"/>
<rect x="1818.38" y="892.00" width="2.00" height="138.00" fill="#5d9038"/>
<rect x="1868.73" y="892.00" width="2.00" height="138.00" fill="#5d9038"/>
<rect x="1919.07" y="892.00" width="2.00" height="138.00" fill="#5d9038"/>
<rect x="1969.42" y="892.00" width="2.00" height="138.00" fill="#5d9038"/>
<rect x="2019.76" y="892.00" width="2.00" height="138.00" fill="#5d9038"/>
<rect x="2070.10" y="892.00" width="2.00" height="138.00" fill="#5d9038"/>
<rect x="2120.45" y="892.00" width="2.00" height="138.00" fill="#5d9038"/>
<rect x="2170.79" y="892.00" width="2.00" height="138.00" fill="#5d9038"/>
<path d="M1416.6 913.0 Q1420.9 905.0 1422.9 905.0 Q1424.9 905.0 1429.2 913.0 Q1433.5 897.5 1435.5 897.5 Q1437.5 897.5 1441.8 913.0 Q1446.1 897.5 1448.1 897.5 Q1450.1 897.5 1454.4 913.0 Q1458.7 897.5 1460.7 897.5 Q1462.7 897.5 1467.0 913.0 Q1471.3 905.0 1473.3 905.0 Q1475.3 905.0 1479.6 913.0 Q1483.8 897.5 1485.9 897.5 Q1487.9 897.5 1492.1 913.0 Q1496.4 897.5 1498.4 897.5 Q1500.5 897.5 1504.7 913.0 Q1509.0 897.5 1511.0 897.5 Q1513.0 897.5 1517.3 913.0 Q1521.6 905.0 1523.6 905.0 Q1525.6 905.0 1529.9 913.0 Q1534.2 897.5 1536.2 897.5 Q1538.2 897.5 1542.5 913.0 Q1546.8 897.5 1548.8 897.5 Q1550.8 897.5 1555.1 913.0 Q1559.4 897.5 1561.4 897.5 Q1563.4 897.5 1567.7 913.0 Q1571.9 905.0 1574.0 905.0 Q1576.0 905.0 1580.3 913.0 Q1584.5 897.5 1586.5 897.5 Q1588.6 897.5 1592.8 913.0 Q1597.1 897.5 1599.1 897.5 Q1601.1 897.5 1605.4 913.0 Q1609.7 897.5 1611.7 897.5 Q1613.7 897.5 1618.0 913.0 Q1622.3 905.0 1624.3 905.0 Q1626.3 905.0 1630.6 913.0 Q1634.9 897.5 1636.9 897.5 Q1638.9 897.5 1643.2 913.0 Q1647.5 897.5 1649.5 897.5 Q1651.5 897.5 1655.8 913.0 Q1660.0 897.5 1662.1 897.5 Q1664.1 897.5 1668.4 913.0 Q1672.6 905.0 1674.6 905.0 Q1676.7 905.0 1680.9 913.0 Q1685.2 897.5 1687.2 897.5 Q1689.2 897.5 1693.5 913.0 Q1697.8 897.5 1699.8 897.5 Q1701.8 897.5 1706.1 913.0 Q1710.4 897.5 1712.4 897.5 Q1714.4 897.5 1718.7 913.0 Q1723.0 905.0 1725.0 905.0 Q1727.0 905.0 1731.3 913.0 Q1735.6 897.5 1737.6 897.5 Q1739.6 897.5 1743.9 913.0 Q1748.1 897.5 1750.2 897.5 Q1752.2 897.5 1756.5 913.0 Q1760.7 897.5 1762.7 897.5 Q1764.8 897.5 1769.0 913.0 Q1773.3 905.0 1775.3 905.0 Q1777.3 905.0 1781.6 913.0 Q1785.9 897.5 1787.9 897.5 Q1789.9 897.5 1794.2 913.0 Q1798.5 897.5 1800.5 897.5 Q1802.5 897.5 1806.8 913.0 Q1811.1 897.5 1813.1 897.5 Q1815.1 897.5 1819.4 913.0 Q1823.7 905.0 1825.7 905.0 Q1827.7 905.0 1832.0 913.0 Q1836.2 897.5 1838.3 897.5 Q1840.3 897.5 1844.6 913.0 Q1848.8 897.5 1850.8 897.5 Q1852.9 897.5 1857.1 913.0 Q1861.4 897.5 1863.4 897.5 Q1865.4 897.5 1869.7 913.0 Q1874.0 905.0 1876.0 905.0 Q1878.0 905.0 1882.3 913.0 Q1886.6 897.5 1888.6 897.5 Q1890.6 897.5 1894.9 913.0 Q1899.2 897.5 1901.2 897.5 Q1903.2 897.5 1907.5 913.0 Q1911.8 897.5 1913.8 897.5 Q1915.8 897.5 1920.1 913.0 Q1924.4 905.0 1926.4 905.0 Q1928.4 905.0 1932.7 913.0 Q1936.9 897.5 1939.0 897.5 Q1941.0 897.5 1945.2 913.0 Q1949.5 897.5 1951.5 897.5 Q1953.6 897.5 1957.8 913.0 Q1962.1 897.5 1964.1 897.5 Q1966.1 897.5 1970.4 913.0 Q1974.7 905.0 1976.7 905.0 Q1978.7 905.0 1983.0 913.0 Q1987.3 897.5 1989.3 897.5 Q1991.3 897.5 1995.6 913.0 Q1999.9 897.5 2001.9 897.5 Q2003.9 897.5 2008.2 913.0 Q2012.5 897.5 2014.5 897.5 Q2016.5 897.5 2020.8 913.0 Q2025.0 905.0 2027.1 905.0 Q2029.1 905.0 2033.3 913.0 Q2037.6 897.5 2039.6 897.5 Q2041.7 897.5 2045.9 913.0 Q2050.2 897.5 2052.2 897.5 Q2054.2 897.5 2058.5 913.0 Q2062.8 897.5 2064.8 897.5 Q2066.8 897.5 2071.1 913.0 Q2075.4 905.0 2077.4 905.0 Q2079.4 905.0 2083.7 913.0 Q2088.0 897.5 2090.0 897.5 Q2092.0 897.5 2096.3 913.0 Q2100.6 897.5 2102.6 897.5 Q2104.6 897.5 2108.9 913.0 Q2113.1 897.5 2115.2 897.5 Q2117.2 897.5 2121.4 913.0 Q2125.7 905.0 2127.7 905.0 Q2129.8 905.0 2134.0 913.0 Q2138.3 897.5 2140.3 897.5 Q2142.3 897.5 2146.6 913.0 Q2150.9 897.5 2152.9 897.5 Q2154.9 897.5 2159.2 913.0 Q2163.5 897.5 2165.5 897.5 Q2167.5 897.5 2171.8 913.0 Q2176.1 905.0 2178.1 905.0 Q2180.1 905.0 2184.4 913.0 Q2188.7 897.5 2190.7 897.5 Q2192.7 897.5 2197.0 913.0 Q2201.2 897.5 2203.3 897.5 Q2205.3 897.5 2209.5 913.0 Q2213.3 897.5 2215.3 897.5 Q2217.4 897.5 2221.1 913.0 L2221.1 944.0 Q2217.4 959.5 2215.3 959.5 Q2213.3 959.5 2209.5 944.0 Q2205.3 959.5 2203.3 959.5 Q2201.2 959.5 2197.0 944.0 Q2192.7 959.5 2190.7 959.5 Q2188.7 959.5 2184.4 944.0 Q2180.1 952.0 2178.1 952.0 Q2176.1 952.0 2171.8 944.0 Q2167.5 959.5 2165.5 959.5 Q2163.5 959.5 2159.2 944.0 Q2154.9 959.5 2152.9 959.5 Q2150.9 959.5 2146.6 944.0 Q2142.3 959.5 2140.3 959.5 Q2138.3 959.5 2134.0 944.0 Q2129.8 952.0 2127.7 952.0 Q2125.7 952.0 2121.4 944.0 Q2117.2 959.5 2115.2 959.5 Q2113.1 959.5 2108.9 944.0 Q2104.6 959.5 2102.6 959.5 Q2100.6 959.5 2096.3 944.0 Q2092.0 959.5 2090.0 959.5 Q2088.0 959.5 2083.7 944.0 Q2079.4 952.0 2077.4 952.0 Q2075.4 952.0 2071.1 944.0 Q2066.8 959.5 2064.8 959.5 Q2062.8 959.5 2058.5 944.0 Q2054.2 959.5 2052.2 959.5 Q2050.2 959.5 2045.9 944.0 Q2041.7 959.5 2039.6 959.5 Q2037.6 959.5 2033.3 944.0 Q2029.1 952.0 2027.1 952.0 Q2025.0 952.0 2020.8 944.0 Q2016.5 959.5 2014.5 959.5 Q2012.5 959.5 2008.2 944.0 Q2003.9 959.5 2001.9 959.5 Q1999.9 959.5 1995.6 944.0 Q1991.3 959.5 1989.3 959.5 Q1987.3 959.5 1983.0 944.0 Q1978.7 952.0 1976.7 952.0 Q1974.7 952.0 1970.4 944.0 Q1966.1 959.5 1964.1 959.5 Q1962.1 959.5 1957.8 944.0 Q1953.6 959.5 1951.5 959.5 Q1949.5 959.5 1945.2 944.0 Q1941.0 959.5 1939.0 959.5 Q1936.9 959.5 1932.7 944.0 Q1928.4 952.0 1926.4 952.0 Q1924.4 952.0 1920.1 944.0 Q1915.8 959.5 1913.8 959.5 Q1911.8 959.5 1907.5 944.0 Q1903.2 959.5 1901.2 959.5 Q1899.2 959.5 1894.9 944.0 Q1890.6 959.5 1888.6 959.5 Q1886.6 959.5 1882.3 944.0 Q1878.0 952.0 1876.0 952.0 Q1874.0 952.0 1869.7 944.0 Q1865.4 959.5 1863.4 959.5 Q1861.4 959.5 1857.1 944.0 Q1852.9 959.5 1850.8 959.5 Q1848.8 959.5 1844.6 944.0 Q1840.3 959.5 1838.3 959.5 Q1836.2 959.5 1832.0 944.0 Q1827.7 952.0 1825.7 952.0 Q1823.7 952.0 1819.4 944.0 Q1815.1 959.5 1813.1 959.5 Q1811.1 959.5 1806.8 944.0 Q1802.5 959.5 1800.5 959.5 Q1798.5 959.5 1794.2 944.0 Q1789.9 959.5 1787.9 959.5 Q1785.9 959.5 1781.6 944.0 Q1777.3 952.0 1775.3 952.0 Q1773.3 952.0 1769.0 944.0 Q1764.8 959.5 1762.7 959.5 Q1760.7 959.5 1756.5 944.0 Q1752.2 959.5 1750.2 959.5 Q1748.1 959.5 1743.9 944.0 Q1739.6 959.5 1737.6 959.5 Q1735.6 959.5 1731.3 944.0 Q1727.0 952.0 1725.0 952.0 Q1723.0 952.0 1718.7 944.0 Q1714.4 959.5 1712.4 959.5 Q1710.4 959.5 1706.1 944.0 Q1701.8 959.5 1699.8 959.5 Q1697.8 959.5 1693.5 944.0 Q1689.2 959.5 1687.2 959.5 Q1685.2 959.5 1680.9 944.0 Q1676.7 952.0 1674.6 952.0 Q1672.6 952.0 1668.4 944.0 Q1664.1 959.5 1662.1 959.5 Q1660.0 959.5 1655.8 944.0 Q1651.5 959.5 1649.5 959.5 Q1647.5 959.5 1643.2 944.0 Q1638.9 959.5 1636.9 959.5 Q1634.9 959.5 1630.6 944.0 Q1626.3 952.0 1624.3 952.0 Q1622.3 952.0 1618.0 944.0 Q1613.7 959.5 1611.7 959.5 Q1609.7 959.5 1605.4 944.0 Q1601.1 959.5 1599.1 959.5 Q1597.1 959.5 1592.8 944.0 Q1588.6 959.5 1586.5 959.5 Q1584.5 959.5 1580.3 944.0 Q1576.0 952.0 1574.0 952.0 Q1571.9 952.0 1567.7 944.0 Q1563.4 959.5 1561.4 959.5 Q1559.4 959.5 1555.1 944.0 Q1550.8 959.5 1548.8 959.5 Q1546.8 959.5 1542.5 944.0 Q1538.2 959.5 1536.2 959.5 Q1534.2 959.5 1529.9 944.0 Q1525.6 952.0 1523.6 952.0 Q1521.6 952.0 1517.3 944.0 Q1513.0 959.5 1511.0 959.5 Q1509.0 959.5 1504.7 944.0 Q1500.5 959.5 1498.4 959.5 Q1496.4 959.5 1492.1 944.0 Q1487.9 959.5 1485.9 959.5 Q1483.8 959.5 1479.6 944.0 Q1475.3 952.0 1473.3 952.0 Q1471.3 952.0 1467.0 944.0 Q1462.7 959.5 1460.7 959.5 Q1458.7 959.5 1454.4 944.0 Q1450.1 959.5 1448.1 959.5 Q1446.1 959.5 1441.8 944.0 Q1437.5 959.5 1435.5 959.5 Q1433.5 959.5 1429.2 944.0 Q1424.9 952.0 1422.9 952.0 Q1420.9 952.0 1416.6 944.0Z" fill="#1B1D18" shape-rendering="geometricPrecision"/>
<path d="M1416.6 980.0 Q1420.9 970.0 1422.9 970.0 Q1424.9 970.0 1429.2 980.0 Q1433.5 966.5 1435.5 966.5 Q1437.5 966.5 1441.8 980.0 Q1446.1 966.5 1448.1 966.5 Q1450.1 966.5 1454.4 980.0 Q1458.7 966.5 1460.7 966.5 Q1462.7 966.5 1467.0 980.0 Q1471.3 970.0 1473.3 970.0 Q1475.3 970.0 1479.6 980.0 Q1483.8 966.5 1485.9 966.5 Q1487.9 966.5 1492.1 980.0 Q1496.4 966.5 1498.4 966.5 Q1500.5 966.5 1504.7 980.0 Q1509.0 966.5 1511.0 966.5 Q1513.0 966.5 1517.3 980.0 Q1521.6 970.0 1523.6 970.0 Q1525.6 970.0 1529.9 980.0 Q1534.2 966.5 1536.2 966.5 Q1538.2 966.5 1542.5 980.0 Q1546.8 966.5 1548.8 966.5 Q1550.8 966.5 1555.1 980.0 Q1559.4 966.5 1561.4 966.5 Q1563.4 966.5 1567.7 980.0 Q1571.9 970.0 1574.0 970.0 Q1576.0 970.0 1580.3 980.0 Q1584.5 966.5 1586.5 966.5 Q1588.6 966.5 1592.8 980.0 Q1597.1 966.5 1599.1 966.5 Q1601.1 966.5 1605.4 980.0 Q1609.7 966.5 1611.7 966.5 Q1613.7 966.5 1618.0 980.0 Q1622.3 970.0 1624.3 970.0 Q1626.3 970.0 1630.6 980.0 Q1634.9 966.5 1636.9 966.5 Q1638.9 966.5 1643.2 980.0 Q1647.5 966.5 1649.5 966.5 Q1651.5 966.5 1655.8 980.0 Q1660.0 966.5 1662.1 966.5 Q1664.1 966.5 1668.4 980.0 Q1672.6 970.0 1674.6 970.0 Q1676.7 970.0 1680.9 980.0 Q1685.2 966.5 1687.2 966.5 Q1689.2 966.5 1693.5 980.0 Q1697.8 966.5 1699.8 966.5 Q1701.8 966.5 1706.1 980.0 Q1710.4 966.5 1712.4 966.5 Q1714.4 966.5 1718.7 980.0 Q1723.0 970.0 1725.0 970.0 Q1727.0 970.0 1731.3 980.0 Q1735.6 966.5 1737.6 966.5 Q1739.6 966.5 1743.9 980.0 Q1748.1 966.5 1750.2 966.5 Q1752.2 966.5 1756.5 980.0 Q1760.7 966.5 1762.7 966.5 Q1764.8 966.5 1769.0 980.0 Q1773.3 970.0 1775.3 970.0 Q1777.3 970.0 1781.6 980.0 Q1785.9 966.5 1787.9 966.5 Q1789.9 966.5 1794.2 980.0 Q1798.5 966.5 1800.5 966.5 Q1802.5 966.5 1806.8 980.0 Q1811.1 966.5 1813.1 966.5 Q1815.1 966.5 1819.4 980.0 Q1823.7 970.0 1825.7 970.0 Q1827.7 970.0 1832.0 980.0 Q1836.2 966.5 1838.3 966.5 Q1840.3 966.5 1844.6 980.0 Q1848.8 966.5 1850.8 966.5 Q1852.9 966.5 1857.1 980.0 Q1861.4 966.5 1863.4 966.5 Q1865.4 966.5 1869.7 980.0 Q1874.0 970.0 1876.0 970.0 Q1878.0 970.0 1882.3 980.0 Q1886.6 966.5 1888.6 966.5 Q1890.6 966.5 1894.9 980.0 Q1899.2 966.5 1901.2 966.5 Q1903.2 966.5 1907.5 980.0 Q1911.8 966.5 1913.8 966.5 Q1915.8 966.5 1920.1 980.0 Q1924.4 970.0 1926.4 970.0 Q1928.4 970.0 1932.7 980.0 Q1936.9 966.5 1939.0 966.5 Q1941.0 966.5 1945.2 980.0 Q1949.5 966.5 1951.5 966.5 Q1953.6 966.5 1957.8 980.0 Q1962.1 966.5 1964.1 966.5 Q1966.1 966.5 1970.4 980.0 Q1974.7 970.0 1976.7 970.0 Q1978.7 970.0 1983.0 980.0 Q1987.3 966.5 1989.3 966.5 Q1991.3 966.5 1995.6 980.0 Q1999.9 966.5 2001.9 966.5 Q2003.9 966.5 2008.2 980.0 Q2012.5 966.5 2014.5 966.5 Q2016.5 966.5 2020.8 980.0 Q2025.0 970.0 2027.1 970.0 Q2029.1 970.0 2033.3 980.0 Q2037.6 966.5 2039.6 966.5 Q2041.7 966.5 2045.9 980.0 Q2050.2 966.5 2052.2 966.5 Q2054.2 966.5 2058.5 980.0 Q2062.8 966.5 2064.8 966.5 Q2066.8 966.5 2071.1 980.0 Q2075.4 970.0 2077.4 970.0 Q2079.4 970.0 2083.7 980.0 Q2088.0 966.5 2090.0 966.5 Q2092.0 966.5 2096.3 980.0 Q2100.6 966.5 2102.6 966.5 Q2104.6 966.5 2108.9 980.0 Q2113.1 966.5 2115.2 966.5 Q2117.2 966.5 2121.4 980.0 Q2125.7 970.0 2127.7 970.0 Q2129.8 970.0 2134.0 980.0 Q2138.3 966.5 2140.3 966.5 Q2142.3 966.5 2146.6 980.0 Q2150.9 966.5 2152.9 966.5 Q2154.9 966.5 2159.2 980.0 Q2163.5 966.5 2165.5 966.5 Q2167.5 966.5 2171.8 980.0 Q2176.1 970.0 2178.1 970.0 Q2180.1 970.0 2184.4 980.0 Q2188.7 966.5 2190.7 966.5 Q2192.7 966.5 2197.0 980.0 Q2201.2 966.5 2203.3 966.5 Q2205.3 966.5 2209.5 980.0 Q2213.3 966.5 2215.3 966.5 Q2217.4 966.5 2221.1 980.0 L2221.1 1014.0 Q2217.4 1030.0 2215.3 1030.0 Q2213.3 1030.0 2209.5 1014.0 Q2205.3 1030.0 2203.3 1030.0 Q2201.2 1030.0 2197.0 1014.0 Q2192.7 1030.0 2190.7 1030.0 Q2188.7 1030.0 2184.4 1014.0 Q2180.1 1026.0 2178.1 1026.0 Q2176.1 1026.0 2171.8 1014.0 Q2167.5 1030.0 2165.5 1030.0 Q2163.5 1030.0 2159.2 1014.0 Q2154.9 1030.0 2152.9 1030.0 Q2150.9 1030.0 2146.6 1014.0 Q2142.3 1030.0 2140.3 1030.0 Q2138.3 1030.0 2134.0 1014.0 Q2129.8 1026.0 2127.7 1026.0 Q2125.7 1026.0 2121.4 1014.0 Q2117.2 1030.0 2115.2 1030.0 Q2113.1 1030.0 2108.9 1014.0 Q2104.6 1030.0 2102.6 1030.0 Q2100.6 1030.0 2096.3 1014.0 Q2092.0 1030.0 2090.0 1030.0 Q2088.0 1030.0 2083.7 1014.0 Q2079.4 1026.0 2077.4 1026.0 Q2075.4 1026.0 2071.1 1014.0 Q2066.8 1030.0 2064.8 1030.0 Q2062.8 1030.0 2058.5 1014.0 Q2054.2 1030.0 2052.2 1030.0 Q2050.2 1030.0 2045.9 1014.0 Q2041.7 1030.0 2039.6 1030.0 Q2037.6 1030.0 2033.3 1014.0 Q2029.1 1026.0 2027.1 1026.0 Q2025.0 1026.0 2020.8 1014.0 Q2016.5 1030.0 2014.5 1030.0 Q2012.5 1030.0 2008.2 1014.0 Q2003.9 1030.0 2001.9 1030.0 Q1999.9 1030.0 1995.6 1014.0 Q1991.3 1030.0 1989.3 1030.0 Q1987.3 1030.0 1983.0 1014.0 Q1978.7 1026.0 1976.7 1026.0 Q1974.7 1026.0 1970.4 1014.0 Q1966.1 1030.0 1964.1 1030.0 Q1962.1 1030.0 1957.8 1014.0 Q1953.6 1030.0 1951.5 1030.0 Q1949.5 1030.0 1945.2 1014.0 Q1941.0 1030.0 1939.0 1030.0 Q1936.9 1030.0 1932.7 1014.0 Q1928.4 1026.0 1926.4 1026.0 Q1924.4 1026.0 1920.1 1014.0 Q1915.8 1030.0 1913.8 1030.0 Q1911.8 1030.0 1907.5 1014.0 Q1903.2 1030.0 1901.2 1030.0 Q1899.2 1030.0 1894.9 1014.0 Q1890.6 1030.0 1888.6 1030.0 Q1886.6 1030.0 1882.3 1014.0 Q1878.0 1026.0 1876.0 1026.0 Q1874.0 1026.0 1869.7 1014.0 Q1865.4 1030.0 1863.4 1030.0 Q1861.4 1030.0 1857.1 1014.0 Q1852.9 1030.0 1850.8 1030.0 Q1848.8 1030.0 1844.6 1014.0 Q1840.3 1030.0 1838.3 1030.0 Q1836.2 1030.0 1832.0 1014.0 Q1827.7 1026.0 1825.7 1026.0 Q1823.7 1026.0 1819.4 1014.0 Q1815.1 1030.0 1813.1 1030.0 Q1811.1 1030.0 1806.8 1014.0 Q1802.5 1030.0 1800.5 1030.0 Q1798.5 1030.0 1794.2 1014.0 Q1789.9 1030.0 1787.9 1030.0 Q1785.9 1030.0 1781.6 1014.0 Q1777.3 1026.0 1775.3 1026.0 Q1773.3 1026.0 1769.0 1014.0 Q1764.8 1030.0 1762.7 1030.0 Q1760.7 1030.0 1756.5 1014.0 Q1752.2 1030.0 1750.2 1030.0 Q1748.1 1030.0 1743.9 1014.0 Q1739.6 1030.0 1737.6 1030.0 Q1735.6 1030.0 1731.3 1014.0 Q1727.0 1026.0 1725.0 1026.0 Q1723.0 1026.0 1718.7 1014.0 Q1714.4 1030.0 1712.4 1030.0 Q1710.4 1030.0 1706.1 1014.0 Q1701.8 1030.0 1699.8 1030.0 Q1697.8 1030.0 1693.5 1014.0 Q1689.2 1030.0 1687.2 1030.0 Q1685.2 1030.0 1680.9 1014.0 Q1676.7 1026.0 1674.6 1026.0 Q1672.6 1026.0 1668.4 1014.0 Q1664.1 1030.0 1662.1 1030.0 Q1660.0 1030.0 1655.8 1014.0 Q1651.5 1030.0 1649.5 1030.0 Q1647.5 1030.0 1643.2 1014.0 Q1638.9 1030.0 1636.9 1030.0 Q1634.9 1030.0 1630.6 1014.0 Q1626.3 1026.0 1624.3 1026.0 Q1622.3 1026.0 1618.0 1014.0 Q1613.7 1030.0 1611.7 1030.0 Q1609.7 1030.0 1605.4 1014.0 Q1601.1 1030.0 1599.1 1030.0 Q1597.1 1030.0 1592.8 1014.0 Q1588.6 1030.0 1586.5 1030.0 Q1584.5 1030.0 1580.3 1014.0 Q1576.0 1026.0 1574.0 1026.0 Q1571.9 1026.0 1567.7 1014.0 Q1563.4 1030.0 1561.4 1030.0 Q1559.4 1030.0 1555.1 1014.0 Q1550.8 1030.0 1548.8 1030.0 Q1546.8 1030.0 1542.5 1014.0 Q1538.2 1030.0 1536.2 1030.0 Q1534.2 1030.0 1529.9 1014.0 Q1525.6 1026.0 1523.6 1026.0 Q1521.6 1026.0 1517.3 1014.0 Q1513.0 1030.0 1511.0 1030.0 Q1509.0 1030.0 1504.7 1014.0 Q1500.5 1030.0 1498.4 1030.0 Q1496.4 1030.0 1492.1 1014.0 Q1487.9 1030.0 1485.9 1030.0 Q1483.8 1030.0 1479.6 1014.0 Q1475.3 1026.0 1473.3 1026.0 Q1471.3 1026.0 1467.0 1014.0 Q1462.7 1030.0 1460.7 1030.0 Q1458.7 1030.0 1454.4 1014.0 Q1450.1 1030.0 1448.1 1030.0 Q1446.1 1030.0 1441.8 1014.0 Q1437.5 1030.0 1435.5 1030.0 Q1433.5 1030.0 1429.2 1014.0 Q1424.9 1026.0 1422.9 1026.0 Q1420.9 1026.0 1416.6 1014.0Z" fill="#1B1D18" shape-rendering="geometricPrecision"/>
<rect x="1415.63" y="858.00" width="1.50" height="172.00" fill="#4f7d2e"/>
<rect x="509.44" y="1034.00" width="100.69" height="34.00" fill="#64BE3A"/>
<rect x="510.19" y="1034.75" width="99.19" height="32.50" fill="none" stroke="#4E9C2C" stroke-width="1.5"/>
<rect x="710.82" y="1034.00" width="100.69" height="34.00" fill="#64BE3A"/>
<rect x="711.57" y="1034.75" width="99.19" height="32.50" fill="none" stroke="#4E9C2C" stroke-width="1.5"/>
<rect x="1415.63" y="1034.00" width="100.69" height="34.00" fill="#64BE3A"/>
<rect x="1416.38" y="1034.75" width="99.19" height="32.50" fill="none" stroke="#4E9C2C" stroke-width="1.5"/>
<rect x="1617.01" y="1034.00" width="83.07" height="34.00" fill="#64BE3A"/>
<rect x="1617.76" y="1034.75" width="81.57" height="32.50" fill="none" stroke="#4E9C2C" stroke-width="1.5"/>
<rect x="610.13" y="1072.00" width="100.69" height="34.00" fill="#64BE3A"/>
<rect x="610.88" y="1072.75" width="99.19" height="32.50" fill="none" stroke="#4E9C2C" stroke-width="1.5"/>
<rect x="1516.32" y="1072.00" width="100.69" height="34.00" fill="#64BE3A"/>
<rect x="1517.07" y="1072.75" width="99.19" height="32.50" fill="none" stroke="#4E9C2C" stroke-width="1.5"/>
<rect x="1012.88" y="1110.00" width="100.69" height="34.00" fill="#64BE3A"/>
<rect x="1013.63" y="1110.75" width="99.19" height="32.50" fill="none" stroke="#4E9C2C" stroke-width="1.5"/>
<rect x="1113.57" y="1110.00" width="100.69" height="34.00" fill="#64BE3A"/>
<rect x="1114.32" y="1110.75" width="99.19" height="32.50" fill="none" stroke="#4E9C2C" stroke-width="1.5"/>
<rect x="1390.46" y="1110.00" width="13.84" height="34.00" fill="#64BE3A"/>
<rect x="1391.21" y="1110.75" width="12.34" height="32.50" fill="none" stroke="#4E9C2C" stroke-width="1.5"/>
<rect x="1717.70" y="1110.00" width="105.72" height="34.00" fill="#64BE3A"/>
<rect x="1718.45" y="1110.75" width="104.22" height="32.50" fill="none" stroke="#4E9C2C" stroke-width="1.5"/>
<rect x="1112.07" y="1112.00" width="2.00" height="5.00" fill="#111"/>
<rect x="1112.07" y="1137.00" width="2.00" height="5.00" fill="#111"/>
<rect x="1212.76" y="1112.00" width="2.00" height="5.00" fill="#111"/>
<rect x="1212.76" y="1137.00" width="2.00" height="5.00" fill="#111"/>
<rect x="1816.88" y="1112.00" width="2.00" height="5.00" fill="#111"/>
<rect x="1816.88" y="1137.00" width="2.00" height="5.00" fill="#111"/>
<rect x="811.50" y="1148.00" width="50.34" height="34.00" fill="#64BE3A"/>
<rect x="812.25" y="1148.75" width="48.84" height="32.50" fill="none" stroke="#4E9C2C" stroke-width="1.5"/>
<rect x="861.85" y="1148.00" width="50.34" height="34.00" fill="#64BE3A"/>
<rect x="862.60" y="1148.75" width="48.84" height="32.50" fill="none" stroke="#4E9C2C" stroke-width="1.5"/>
<rect x="912.19" y="1148.00" width="50.34" height="34.00" fill="#64BE3A"/>
<rect x="912.94" y="1148.75" width="48.84" height="32.50" fill="none" stroke="#4E9C2C" stroke-width="1.5"/>
<rect x="962.54" y="1148.00" width="50.34" height="34.00" fill="#64BE3A"/>
<rect x="963.29" y="1148.75" width="48.84" height="32.50" fill="none" stroke="#4E9C2C" stroke-width="1.5"/>
<rect x="1012.88" y="1148.00" width="50.34" height="34.00" fill="#64BE3A"/>
<rect x="1013.63" y="1148.75" width="48.84" height="32.50" fill="none" stroke="#4E9C2C" stroke-width="1.5"/>
<rect x="1063.22" y="1148.00" width="50.34" height="34.00" fill="#64BE3A"/>
<rect x="1063.97" y="1148.75" width="48.84" height="32.50" fill="none" stroke="#4E9C2C" stroke-width="1.5"/>
<rect x="1516.32" y="1148.00" width="50.34" height="34.00" fill="#64BE3A"/>
<rect x="1517.07" y="1148.75" width="48.84" height="32.50" fill="none" stroke="#4E9C2C" stroke-width="1.5"/>
<rect x="1566.66" y="1148.00" width="50.34" height="34.00" fill="#64BE3A"/>
<rect x="1567.41" y="1148.75" width="48.84" height="32.50" fill="none" stroke="#4E9C2C" stroke-width="1.5"/>
<rect x="1617.01" y="1148.00" width="50.34" height="34.00" fill="#64BE3A"/>
<rect x="1617.76" y="1148.75" width="48.84" height="32.50" fill="none" stroke="#4E9C2C" stroke-width="1.5"/>
<rect x="1667.35" y="1148.00" width="37.76" height="34.00" fill="#64BE3A"/>
<rect x="1668.10" y="1148.75" width="36.26" height="32.50" fill="none" stroke="#4E9C2C" stroke-width="1.5"/>
<rect x="1705.11" y="1148.00" width="37.76" height="34.00" fill="#64BE3A"/>
<rect x="1705.86" y="1148.75" width="36.26" height="32.50" fill="none" stroke="#4E9C2C" stroke-width="1.5"/>
<rect x="1742.87" y="1148.00" width="37.76" height="34.00" fill="#64BE3A"/>
<rect x="1743.62" y="1148.75" width="36.26" height="32.50" fill="none" stroke="#4E9C2C" stroke-width="1.5"/>
<rect x="1780.63" y="1148.00" width="37.76" height="34.00" fill="#64BE3A"/>
<rect x="1781.38" y="1148.75" width="36.26" height="32.50" fill="none" stroke="#4E9C2C" stroke-width="1.5"/>
<rect x="1818.38" y="1148.00" width="37.76" height="34.00" fill="#64BE3A"/>
<rect x="1819.13" y="1148.75" width="36.26" height="32.50" fill="none" stroke="#4E9C2C" stroke-width="1.5"/>
<rect x="1856.14" y="1148.00" width="37.76" height="34.00" fill="#64BE3A"/>
<rect x="1856.89" y="1148.75" width="36.26" height="32.50" fill="none" stroke="#4E9C2C" stroke-width="1.5"/>
<rect x="1893.90" y="1148.00" width="37.76" height="34.00" fill="#64BE3A"/>
<rect x="1894.65" y="1148.75" width="36.26" height="32.50" fill="none" stroke="#4E9C2C" stroke-width="1.5"/>
<rect x="1931.66" y="1148.00" width="37.76" height="34.00" fill="#64BE3A"/>
<rect x="1932.41" y="1148.75" width="36.26" height="32.50" fill="none" stroke="#4E9C2C" stroke-width="1.5"/>
<rect x="1969.42" y="1148.00" width="37.76" height="34.00" fill="#64BE3A"/>
<rect x="1970.17" y="1148.75" width="36.26" height="32.50" fill="none" stroke="#4E9C2C" stroke-width="1.5"/>
<rect x="2007.17" y="1148.00" width="12.59" height="34.00" fill="#64BE3A"/>
<rect x="2007.92" y="1148.75" width="11.09" height="32.50" fill="none" stroke="#4E9C2C" stroke-width="1.5"/>
<rect x="509.44" y="1186.00" width="906.19" height="34.00" fill="#AA97E0"/>
<rect x="510.19" y="1186.75" width="904.69" height="32.50" fill="none" stroke="#9683cc" stroke-width="1.5"/>
<rect x="559.78" y="1188.00" width="2.00" height="5.00" fill="#110d22"/>
<rect x="559.78" y="1213.00" width="2.00" height="5.00" fill="#110d22"/>
<rect x="610.13" y="1188.00" width="2.00" height="5.00" fill="#110d22"/>
<rect x="610.13" y="1213.00" width="2.00" height="5.00" fill="#110d22"/>
<rect x="660.47" y="1188.00" width="2.00" height="5.00" fill="#110d22"/>
<rect x="660.47" y="1213.00" width="2.00" height="5.00" fill="#110d22"/>
<rect x="710.82" y="1188.00" width="2.00" height="5.00" fill="#110d22"/>
<rect x="710.82" y="1213.00" width="2.00" height="5.00" fill="#110d22"/>
<rect x="761.16" y="1188.00" width="2.00" height="5.00" fill="#110d22"/>
<rect x="761.16" y="1213.00" width="2.00" height="5.00" fill="#110d22"/>
<rect x="811.50" y="1188.00" width="2.00" height="5.00" fill="#110d22"/>
<rect x="811.50" y="1213.00" width="2.00" height="5.00" fill="#110d22"/>
<rect x="861.85" y="1188.00" width="2.00" height="5.00" fill="#110d22"/>
<rect x="861.85" y="1213.00" width="2.00" height="5.00" fill="#110d22"/>
<rect x="912.19" y="1188.00" width="2.00" height="5.00" fill="#110d22"/>
<rect x="912.19" y="1213.00" width="2.00" height="5.00" fill="#110d22"/>
<rect x="962.54" y="1188.00" width="2.00" height="5.00" fill="#110d22"/>
<rect x="962.54" y="1213.00" width="2.00" height="5.00" fill="#110d22"/>
<rect x="1012.88" y="1188.00" width="2.00" height="5.00" fill="#110d22"/>
<rect x="1012.88" y="1213.00" width="2.00" height="5.00" fill="#110d22"/>
<rect x="1063.22" y="1188.00" width="2.00" height="5.00" fill="#110d22"/>
<rect x="1063.22" y="1213.00" width="2.00" height="5.00" fill="#110d22"/>
<rect x="1113.57" y="1188.00" width="2.00" height="5.00" fill="#110d22"/>
<rect x="1113.57" y="1213.00" width="2.00" height="5.00" fill="#110d22"/>
<rect x="1163.91" y="1188.00" width="2.00" height="5.00" fill="#110d22"/>
<rect x="1163.91" y="1213.00" width="2.00" height="5.00" fill="#110d22"/>
<rect x="1214.26" y="1188.00" width="2.00" height="5.00" fill="#110d22"/>
<rect x="1214.26" y="1213.00" width="2.00" height="5.00" fill="#110d22"/>
<rect x="1264.60" y="1188.00" width="2.00" height="5.00" fill="#110d22"/>
<rect x="1264.60" y="1213.00" width="2.00" height="5.00" fill="#110d22"/>
<rect x="1314.94" y="1188.00" width="2.00" height="5.00" fill="#110d22"/>
<rect x="1314.94" y="1213.00" width="2.00" height="5.00" fill="#110d22"/>
<rect x="1365.29" y="1188.00" width="2.00" height="5.00" fill="#110d22"/>
<rect x="1365.29" y="1213.00" width="2.00" height="5.00" fill="#110d22"/>
<rect x="1415.63" y="1186.00" width="402.75" height="34.00" fill="#AA97E0"/>
<rect x="1416.38" y="1186.75" width="401.25" height="32.50" fill="none" stroke="#9683cc" stroke-width="1.5"/>
<rect x="1465.98" y="1188.00" width="2.00" height="5.00" fill="#110d22"/>
<rect x="1465.98" y="1213.00" width="2.00" height="5.00" fill="#110d22"/>
<rect x="1516.32" y="1188.00" width="2.00" height="5.00" fill="#110d22"/>
<rect x="1516.32" y="1213.00" width="2.00" height="5.00" fill="#110d22"/>
<rect x="1566.66" y="1188.00" width="2.00" height="5.00" fill="#110d22"/>
<rect x="1566.66" y="1213.00" width="2.00" height="5.00" fill="#110d22"/>
<rect x="1617.01" y="1188.00" width="2.00" height="5.00" fill="#110d22"/>
<rect x="1617.01" y="1213.00" width="2.00" height="5.00" fill="#110d22"/>
<rect x="1667.35" y="1188.00" width="2.00" height="5.00" fill="#110d22"/>
<rect x="1667.35" y="1213.00" width="2.00" height="5.00" fill="#110d22"/>
<rect x="1717.70" y="1188.00" width="2.00" height="5.00" fill="#110d22"/>
<rect x="1717.70" y="1213.00" width="2.00" height="5.00" fill="#110d22"/>
<rect x="1768.04" y="1188.00" width="2.00" height="5.00" fill="#110d22"/>
<rect x="1768.04" y="1213.00" width="2.00" height="5.00" fill="#110d22"/>
<rect x="509.44" y="1224.00" width="24.17" height="138.00" fill="#4CA1E8"/>
<rect x="510.19" y="1224.75" width="22.67" height="136.50" fill="none" stroke="#3a7fc0" stroke-width="1.5"/>
<rect x="510.94" y="1256.00" width="21.17" height="1.50" fill="#3a7fc0"/>
<rect x="511.44" y="1354.00" width="20.17" height="6.00" fill="#151a1e"/>
<rect x="710.82" y="1224.00" width="24.17" height="138.00" fill="#4CA1E8"/>
<rect x="711.57" y="1224.75" width="22.67" height="136.50" fill="none" stroke="#3a7fc0" stroke-width="1.5"/>
<rect x="712.32" y="1256.00" width="21.17" height="1.50" fill="#3a7fc0"/>
<rect x="712.82" y="1354.00" width="20.17" height="6.00" fill="#151a1e"/>
<rect x="912.19" y="1224.00" width="24.17" height="138.00" fill="#4CA1E8"/>
<rect x="912.94" y="1224.75" width="22.67" height="136.50" fill="none" stroke="#3a7fc0" stroke-width="1.5"/>
<rect x="913.69" y="1256.00" width="21.17" height="1.50" fill="#3a7fc0"/>
<rect x="914.19" y="1354.00" width="20.17" height="6.00" fill="#151a1e"/>
<rect x="1113.57" y="1224.00" width="24.17" height="138.00" fill="#4CA1E8"/>
<rect x="1114.32" y="1224.75" width="22.67" height="136.50" fill="none" stroke="#3a7fc0" stroke-width="1.5"/>
<rect x="1115.07" y="1256.00" width="21.17" height="1.50" fill="#3a7fc0"/>
<rect x="1115.57" y="1354.00" width="20.17" height="6.00" fill="#151a1e"/>
<rect x="1415.63" y="1224.00" width="24.17" height="138.00" fill="#4CA1E8"/>
<rect x="1416.38" y="1224.75" width="22.67" height="136.50" fill="none" stroke="#3a7fc0" stroke-width="1.5"/>
<rect x="1417.13" y="1256.00" width="21.17" height="1.50" fill="#3a7fc0"/>
<rect x="1417.63" y="1354.00" width="20.17" height="6.00" fill="#151a1e"/>
<rect x="1617.01" y="1224.00" width="24.17" height="138.00" fill="#4CA1E8"/>
<rect x="1617.76" y="1224.75" width="22.67" height="136.50" fill="none" stroke="#3a7fc0" stroke-width="1.5"/>
<rect x="1618.51" y="1256.00" width="21.17" height="1.50" fill="#3a7fc0"/>
<rect x="1619.01" y="1354.00" width="20.17" height="6.00" fill="#151a1e"/>
<rect x="1818.38" y="1224.00" width="24.17" height="138.00" fill="#4CA1E8"/>
<rect x="1819.13" y="1224.75" width="22.67" height="136.50" fill="none" stroke="#3a7fc0" stroke-width="1.5"/>
<rect x="1819.88" y="1256.00" width="21.17" height="1.50" fill="#3a7fc0"/>
<rect x="1820.38" y="1354.00" width="20.17" height="6.00" fill="#151a1e"/>
<rect x="597.54" y="1224.00" width="11.59" height="138.00" fill="#4CA1E8"/>
<rect x="598.29" y="1224.75" width="10.09" height="136.50" fill="none" stroke="#3a7fc0" stroke-width="1.5"/>
<rect x="599.04" y="1256.00" width="8.59" height="1.50" fill="#3a7fc0"/>
<rect x="604.13" y="1259.00" width="3.00" height="4.00" fill="#151a1e"/>
<rect x="798.92" y="1224.00" width="11.59" height="138.00" fill="#4CA1E8"/>
<rect x="799.67" y="1224.75" width="10.09" height="136.50" fill="none" stroke="#3a7fc0" stroke-width="1.5"/>
<rect x="800.42" y="1256.00" width="8.59" height="1.50" fill="#3a7fc0"/>
<rect x="805.50" y="1259.00" width="3.00" height="4.00" fill="#151a1e"/>
<rect x="1000.29" y="1224.00" width="11.59" height="138.00" fill="#4CA1E8"/>
<rect x="1001.04" y="1224.75" width="10.09" height="136.50" fill="none" stroke="#3a7fc0" stroke-width="1.5"/>
<rect x="1001.79" y="1256.00" width="8.59" height="1.50" fill="#3a7fc0"/>
<rect x="1006.88" y="1259.00" width="3.00" height="4.00" fill="#151a1e"/>
<rect x="1201.67" y="1224.00" width="11.59" height="138.00" fill="#4CA1E8"/>
<rect x="1202.42" y="1224.75" width="10.09" height="136.50" fill="none" stroke="#3a7fc0" stroke-width="1.5"/>
<rect x="1203.17" y="1256.00" width="8.59" height="1.50" fill="#3a7fc0"/>
<rect x="1208.26" y="1259.00" width="3.00" height="4.00" fill="#151a1e"/>
<rect x="1503.73" y="1224.00" width="11.59" height="138.00" fill="#4CA1E8"/>
<rect x="1504.48" y="1224.75" width="10.09" height="136.50" fill="none" stroke="#3a7fc0" stroke-width="1.5"/>
<rect x="1505.23" y="1256.00" width="8.59" height="1.50" fill="#3a7fc0"/>
<rect x="1510.32" y="1259.00" width="3.00" height="4.00" fill="#151a1e"/>
<rect x="1705.11" y="1224.00" width="11.59" height="138.00" fill="#4CA1E8"/>
<rect x="1705.86" y="1224.75" width="10.09" height="136.50" fill="none" stroke="#3a7fc0" stroke-width="1.5"/>
<rect x="1706.61" y="1256.00" width="8.59" height="1.50" fill="#3a7fc0"/>
<rect x="1711.70" y="1259.00" width="3.00" height="4.00" fill="#151a1e"/>
<rect x="1214.26" y="1366.00" width="188.79" height="34.00" fill="#4A9A8C"/>
<rect x="1215.01" y="1366.75" width="187.29" height="32.50" fill="none" stroke="#3d8276" stroke-width="1.5"/>
<rect x="408.75" y="1404.00" width="100.69" height="34.00" fill="#F4EB8C"/>
<rect x="409.50" y="1404.75" width="99.19" height="32.50" fill="none" stroke="#CFC56B" stroke-width="1.5"/>
<rect x="1289.77" y="1404.00" width="100.69" height="34.00" fill="#F4EB8C"/>
<rect x="1290.52" y="1404.75" width="99.19" height="32.50" fill="none" stroke="#CFC56B" stroke-width="1.5"/>
<rect x="408.75" y="1442.00" width="100.69" height="34.00" fill="#F4EB8C"/>
<rect x="409.50" y="1442.75" width="99.19" height="32.50" fill="none" stroke="#CFC56B" stroke-width="1.5"/>
<rect x="1113.57" y="1442.00" width="100.69" height="34.00" fill="#F4EB8C"/>
<rect x="1114.32" y="1442.75" width="99.19" height="32.50" fill="none" stroke="#CFC56B" stroke-width="1.5"/>
<rect x="1390.46" y="1442.00" width="100.69" height="34.00" fill="#F4EB8C"/>
<rect x="1391.21" y="1442.75" width="99.19" height="32.50" fill="none" stroke="#CFC56B" stroke-width="1.5"/>
<rect x="2019.76" y="1442.00" width="100.69" height="34.00" fill="#F4EB8C"/>
<rect x="2020.51" y="1442.75" width="99.19" height="32.50" fill="none" stroke="#CFC56B" stroke-width="1.5"/>
<rect x="2422.51" y="1442.00" width="93.49" height="34.00" fill="#F4EB8C"/>
<rect x="2423.26" y="1442.75" width="91.99" height="32.50" fill="none" stroke="#CFC56B" stroke-width="1.5"/>
<rect x="6.00" y="356.00" width="2.00" height="34.00" fill="#e6fbff"/>
<rect x="6.00" y="92.00" width="2.00" height="12.00" fill="#8c8c8c"/>
<rect x="6.00" y="92.00" width="4.00" height="2.00" fill="#8c8c8c"/>
<rect x="56.34" y="102.00" width="2.00" height="2.00" fill="#8c8c8c"/>
<rect x="106.69" y="92.00" width="2.00" height="12.00" fill="#8c8c8c"/>
<rect x="106.69" y="92.00" width="4.00" height="2.00" fill="#8c8c8c"/>
<rect x="157.03" y="102.00" width="2.00" height="2.00" fill="#8c8c8c"/>
<rect x="207.38" y="92.00" width="2.00" height="12.00" fill="#8c8c8c"/>
<rect x="207.38" y="92.00" width="4.00" height="2.00" fill="#8c8c8c"/>
<rect x="257.72" y="102.00" width="2.00" height="2.00" fill="#8c8c8c"/>
<rect x="308.06" y="92.00" width="2.00" height="12.00" fill="#8c8c8c"/>
<rect x="308.06" y="92.00" width="4.00" height="2.00" fill="#8c8c8c"/>
<rect x="358.41" y="102.00" width="2.00" height="2.00" fill="#8c8c8c"/>
<rect x="408.75" y="92.00" width="2.00" height="12.00" fill="#8c8c8c"/>
<rect x="408.75" y="92.00" width="4.00" height="2.00" fill="#8c8c8c"/>
<rect x="459.10" y="102.00" width="2.00" height="2.00" fill="#8c8c8c"/>
<rect x="509.44" y="92.00" width="2.00" height="12.00" fill="#8c8c8c"/>
<rect x="509.44" y="92.00" width="4.00" height="2.00" fill="#8c8c8c"/>
<rect x="559.78" y="102.00" width="2.00" height="2.00" fill="#8c8c8c"/>
<rect x="610.13" y="92.00" width="2.00" height="12.00" fill="#8c8c8c"/>
<rect x="610.13" y="92.00" width="4.00" height="2.00" fill="#8c8c8c"/>
<rect x="660.47" y="102.00" width="2.00" height="2.00" fill="#8c8c8c"/>
<rect x="710.82" y="92.00" width="2.00" height="12.00" fill="#8c8c8c"/>
<rect x="710.82" y="92.00" width="4.00" height="2.00" fill="#8c8c8c"/>
<rect x="761.16" y="102.00" width="2.00" height="2.00" fill="#8c8c8c"/>
<rect x="811.50" y="92.00" width="2.00" height="12.00" fill="#8c8c8c"/>
<rect x="811.50" y="92.00" width="4.00" height="2.00" fill="#8c8c8c"/>
<rect x="861.85" y="102.00" width="2.00" height="2.00" fill="#8c8c8c"/>
<rect x="912.19" y="92.00" width="2.00" height="12.00" fill="#8c8c8c"/>
<rect x="912.19" y="92.00" width="4.00" height="2.00" fill="#8c8c8c"/>
<rect x="962.54" y="102.00" width="2.00" height="2.00" fill="#8c8c8c"/>
<rect x="1012.88" y="92.00" width="2.00" height="12.00" fill="#8c8c8c"/>
<rect x="1012.88" y="92.00" width="4.00" height="2.00" fill="#8c8c8c"/>
<rect x="1063.22" y="102.00" width="2.00" height="2.00" fill="#8c8c8c"/>
<rect x="1113.57" y="92.00" width="2.00" height="12.00" fill="#8c8c8c"/>
<rect x="1113.57" y="92.00" width="4.00" height="2.00" fill="#8c8c8c"/>
<rect x="1163.91" y="102.00" width="2.00" height="2.00" fill="#8c8c8c"/>
<rect x="1214.26" y="92.00" width="2.00" height="12.00" fill="#8c8c8c"/>
<rect x="1214.26" y="92.00" width="4.00" height="2.00" fill="#8c8c8c"/>
<rect x="1264.60" y="102.00" width="2.00" height="2.00" fill="#8c8c8c"/>
<rect x="1314.94" y="92.00" width="2.00" height="12.00" fill="#8c8c8c"/>
<rect x="1314.94" y="92.00" width="4.00" height="2.00" fill="#8c8c8c"/>
<rect x="1365.29" y="102.00" width="2.00" height="2.00" fill="#8c8c8c"/>
<rect x="1415.63" y="92.00" width="2.00" height="12.00" fill="#8c8c8c"/>
<rect x="1415.63" y="92.00" width="4.00" height="2.00" fill="#8c8c8c"/>
<rect x="1465.98" y="102.00" width="2.00" height="2.00" fill="#8c8c8c"/>
<rect x="1516.32" y="92.00" width="2.00" height="12.00" fill="#8c8c8c"/>
<rect x="1516.32" y="92.00" width="4.00" height="2.00" fill="#8c8c8c"/>
<rect x="1566.66" y="102.00" width="2.00" height="2.00" fill="#8c8c8c"/>
<rect x="1617.01" y="92.00" width="2.00" height="12.00" fill="#8c8c8c"/>
<rect x="1617.01" y="92.00" width="4.00" height="2.00" fill="#8c8c8c"/>
<rect x="1667.35" y="102.00" width="2.00" height="2.00" fill="#8c8c8c"/>
<rect x="1717.70" y="92.00" width="2.00" height="12.00" fill="#8c8c8c"/>
<rect x="1717.70" y="92.00" width="4.00" height="2.00" fill="#8c8c8c"/>
<rect x="1768.04" y="102.00" width="2.00" height="2.00" fill="#8c8c8c"/>
<rect x="1818.38" y="92.00" width="2.00" height="12.00" fill="#8c8c8c"/>
<rect x="1818.38" y="92.00" width="4.00" height="2.00" fill="#8c8c8c"/>
<rect x="1868.73" y="102.00" width="2.00" height="2.00" fill="#8c8c8c"/>
<rect x="1919.07" y="92.00" width="2.00" height="12.00" fill="#8c8c8c"/>
<rect x="1919.07" y="92.00" width="4.00" height="2.00" fill="#8c8c8c"/>
<rect x="1969.42" y="102.00" width="2.00" height="2.00" fill="#8c8c8c"/>
<rect x="2019.76" y="92.00" width="2.00" height="12.00" fill="#8c8c8c"/>
<rect x="2019.76" y="92.00" width="4.00" height="2.00" fill="#8c8c8c"/>
<rect x="2070.10" y="102.00" width="2.00" height="2.00" fill="#8c8c8c"/>
<rect x="2120.45" y="92.00" width="2.00" height="12.00" fill="#8c8c8c"/>
<rect x="2120.45" y="92.00" width="4.00" height="2.00" fill="#8c8c8c"/>
<rect x="2170.79" y="102.00" width="2.00" height="2.00" fill="#8c8c8c"/>
<rect x="2221.14" y="92.00" width="2.00" height="12.00" fill="#8c8c8c"/>
<rect x="2221.14" y="92.00" width="4.00" height="2.00" fill="#8c8c8c"/>
<rect x="2271.48" y="102.00" width="2.00" height="2.00" fill="#8c8c8c"/>
<rect x="2321.82" y="92.00" width="2.00" height="12.00" fill="#8c8c8c"/>
<rect x="2321.82" y="92.00" width="4.00" height="2.00" fill="#8c8c8c"/>
<rect x="2372.17" y="102.00" width="2.00" height="2.00" fill="#8c8c8c"/>
<rect x="2422.51" y="92.00" width="2.00" height="12.00" fill="#8c8c8c"/>
<rect x="2422.51" y="92.00" width="4.00" height="2.00" fill="#8c8c8c"/>
<rect x="2472.86" y="102.00" width="2.00" height="2.00" fill="#8c8c8c"/>
<rect x="1013" y="107" width="52" height="20" fill="none" stroke="#111" stroke-width="2"/>
<path d="M1013 107 L1031 117 L1013 127 M1065 107 L1047 117 L1065 127" fill="none" stroke="#111" stroke-width="1.6"/>
<path d="M6 160 L15 160 L6 168 Z" fill="#5FCBEF"/>
<path d="M6 1630 L6 1638 L14 1638 Z" fill="#5FCBEF" shape-rendering="geometricPrecision"/>
<rect x="6.10" y="1628.00" width="2.00" height="16.00" fill="#8c8c8c"/>
<rect x="6.10" y="1642.00" width="4.00" height="2.00" fill="#8c8c8c"/>
<rect x="202.80" y="1628.00" width="2.00" height="16.00" fill="#8c8c8c"/>
<rect x="202.80" y="1642.00" width="4.00" height="2.00" fill="#8c8c8c"/>
<rect x="399.50" y="1628.00" width="2.00" height="16.00" fill="#8c8c8c"/>
<rect x="399.50" y="1642.00" width="4.00" height="2.00" fill="#8c8c8c"/>
<rect x="596.20" y="1628.00" width="2.00" height="16.00" fill="#8c8c8c"/>
<rect x="596.20" y="1642.00" width="4.00" height="2.00" fill="#8c8c8c"/>
<rect x="792.90" y="1628.00" width="2.00" height="16.00" fill="#8c8c8c"/>
<rect x="792.90" y="1642.00" width="4.00" height="2.00" fill="#8c8c8c"/>
<rect x="989.60" y="1628.00" width="2.00" height="16.00" fill="#8c8c8c"/>
<rect x="989.60" y="1642.00" width="4.00" height="2.00" fill="#8c8c8c"/>
<rect x="1186.30" y="1628.00" width="2.00" height="16.00" fill="#8c8c8c"/>
<rect x="1186.30" y="1642.00" width="4.00" height="2.00" fill="#8c8c8c"/>
<rect x="1383.00" y="1628.00" width="2.00" height="16.00" fill="#8c8c8c"/>
<rect x="1383.00" y="1642.00" width="4.00" height="2.00" fill="#8c8c8c"/>
<rect x="1579.70" y="1628.00" width="2.00" height="16.00" fill="#8c8c8c"/>
<rect x="1579.70" y="1642.00" width="4.00" height="2.00" fill="#8c8c8c"/>
<rect x="1776.40" y="1628.00" width="2.00" height="16.00" fill="#8c8c8c"/>
<rect x="1776.40" y="1642.00" width="4.00" height="2.00" fill="#8c8c8c"/>
<rect x="1973.10" y="1628.00" width="2.00" height="16.00" fill="#8c8c8c"/>
<rect x="1973.10" y="1642.00" width="4.00" height="2.00" fill="#8c8c8c"/>
<rect x="2169.80" y="1628.00" width="2.00" height="16.00" fill="#8c8c8c"/>
<rect x="2169.80" y="1642.00" width="4.00" height="2.00" fill="#8c8c8c"/>
<rect x="2366.50" y="1628.00" width="2.00" height="16.00" fill="#8c8c8c"/>
<rect x="2366.50" y="1642.00" width="4.00" height="2.00" fill="#8c8c8c"/>
<rect x="38.88" y="1628.00" width="2.00" height="4.00" fill="#a6a6a6"/>
<rect x="71.67" y="1628.00" width="2.00" height="4.00" fill="#a6a6a6"/>
<rect x="104.45" y="1628.00" width="2.00" height="4.00" fill="#a6a6a6"/>
<rect x="137.23" y="1628.00" width="2.00" height="4.00" fill="#a6a6a6"/>
<rect x="170.02" y="1628.00" width="2.00" height="4.00" fill="#a6a6a6"/>
<rect x="235.58" y="1628.00" width="2.00" height="4.00" fill="#a6a6a6"/>
<rect x="268.37" y="1628.00" width="2.00" height="4.00" fill="#a6a6a6"/>
<rect x="301.15" y="1628.00" width="2.00" height="4.00" fill="#a6a6a6"/>
<rect x="333.93" y="1628.00" width="2.00" height="4.00" fill="#a6a6a6"/>
<rect x="366.72" y="1628.00" width="2.00" height="4.00" fill="#a6a6a6"/>
<rect x="432.28" y="1628.00" width="2.00" height="4.00" fill="#a6a6a6"/>
<rect x="465.07" y="1628.00" width="2.00" height="4.00" fill="#a6a6a6"/>
<rect x="497.85" y="1628.00" width="2.00" height="4.00" fill="#a6a6a6"/>
<rect x="530.63" y="1628.00" width="2.00" height="4.00" fill="#a6a6a6"/>
<rect x="563.42" y="1628.00" width="2.00" height="4.00" fill="#a6a6a6"/>
<rect x="628.98" y="1628.00" width="2.00" height="4.00" fill="#a6a6a6"/>
<rect x="661.77" y="1628.00" width="2.00" height="4.00" fill="#a6a6a6"/>
<rect x="694.55" y="1628.00" width="2.00" height="4.00" fill="#a6a6a6"/>
<rect x="727.33" y="1628.00" width="2.00" height="4.00" fill="#a6a6a6"/>
<rect x="760.12" y="1628.00" width="2.00" height="4.00" fill="#a6a6a6"/>
<rect x="825.68" y="1628.00" width="2.00" height="4.00" fill="#a6a6a6"/>
<rect x="858.47" y="1628.00" width="2.00" height="4.00" fill="#a6a6a6"/>
<rect x="891.25" y="1628.00" width="2.00" height="4.00" fill="#a6a6a6"/>
<rect x="924.03" y="1628.00" width="2.00" height="4.00" fill="#a6a6a6"/>
<rect x="956.82" y="1628.00" width="2.00" height="4.00" fill="#a6a6a6"/>
<rect x="1022.38" y="1628.00" width="2.00" height="4.00" fill="#a6a6a6"/>
<rect x="1055.17" y="1628.00" width="2.00" height="4.00" fill="#a6a6a6"/>
<rect x="1087.95" y="1628.00" width="2.00" height="4.00" fill="#a6a6a6"/>
<rect x="1120.73" y="1628.00" width="2.00" height="4.00" fill="#a6a6a6"/>
<rect x="1153.52" y="1628.00" width="2.00" height="4.00" fill="#a6a6a6"/>
<rect x="1219.08" y="1628.00" width="2.00" height="4.00" fill="#a6a6a6"/>
<rect x="1251.87" y="1628.00" width="2.00" height="4.00" fill="#a6a6a6"/>
<rect x="1284.65" y="1628.00" width="2.00" height="4.00" fill="#a6a6a6"/>
<rect x="1317.43" y="1628.00" width="2.00" height="4.00" fill="#a6a6a6"/>
<rect x="1350.22" y="1628.00" width="2.00" height="4.00" fill="#a6a6a6"/>
<rect x="1415.78" y="1628.00" width="2.00" height="4.00" fill="#a6a6a6"/>
<rect x="1448.57" y="1628.00" width="2.00" height="4.00" fill="#a6a6a6"/>
<rect x="1481.35" y="1628.00" width="2.00" height="4.00" fill="#a6a6a6"/>
<rect x="1514.13" y="1628.00" width="2.00" height="4.00" fill="#a6a6a6"/>
<rect x="1546.92" y="1628.00" width="2.00" height="4.00" fill="#a6a6a6"/>
<rect x="1612.48" y="1628.00" width="2.00" height="4.00" fill="#a6a6a6"/>
<rect x="1645.27" y="1628.00" width="2.00" height="4.00" fill="#a6a6a6"/>
<rect x="1678.05" y="1628.00" width="2.00" height="4.00" fill="#a6a6a6"/>
<rect x="1710.83" y="1628.00" width="2.00" height="4.00" fill="#a6a6a6"/>
<rect x="1743.62" y="1628.00" width="2.00" height="4.00" fill="#a6a6a6"/>
<rect x="1809.18" y="1628.00" width="2.00" height="4.00" fill="#a6a6a6"/>
<rect x="1841.97" y="1628.00" width="2.00" height="4.00" fill="#a6a6a6"/>
<rect x="1874.75" y="1628.00" width="2.00" height="4.00" fill="#a6a6a6"/>
<rect x="1907.53" y="1628.00" width="2.00" height="4.00" fill="#a6a6a6"/>
<rect x="1940.32" y="1628.00" width="2.00" height="4.00" fill="#a6a6a6"/>
<rect x="2005.88" y="1628.00" width="2.00" height="4.00" fill="#a6a6a6"/>
<rect x="2038.67" y="1628.00" width="2.00" height="4.00" fill="#a6a6a6"/>
<rect x="2071.45" y="1628.00" width="2.00" height="4.00" fill="#a6a6a6"/>
<rect x="2104.23" y="1628.00" width="2.00" height="4.00" fill="#a6a6a6"/>
<rect x="2137.02" y="1628.00" width="2.00" height="4.00" fill="#a6a6a6"/>
<rect x="2202.58" y="1628.00" width="2.00" height="4.00" fill="#a6a6a6"/>
<rect x="2235.37" y="1628.00" width="2.00" height="4.00" fill="#a6a6a6"/>
<rect x="2268.15" y="1628.00" width="2.00" height="4.00" fill="#a6a6a6"/>
<rect x="2300.93" y="1628.00" width="2.00" height="4.00" fill="#a6a6a6"/>
<rect x="2333.72" y="1628.00" width="2.00" height="4.00" fill="#a6a6a6"/>
<rect x="2399.28" y="1628.00" width="2.00" height="4.00" fill="#a6a6a6"/>
<rect x="2432.07" y="1628.00" width="2.00" height="4.00" fill="#a6a6a6"/>
<rect x="2464.85" y="1628.00" width="2.00" height="4.00" fill="#a6a6a6"/>
<rect x="2497.63" y="1628.00" width="2.00" height="4.00" fill="#a6a6a6"/>
<rect x="10.00" y="20.00" width="2642.00" height="24.00" fill="#949494"/>
<rect x="10.00" y="20.00" width="406.24" height="1.20" fill="#27309a"/>
<rect x="517.80" y="20.00" width="609.36" height="1.20" fill="#27309a"/>
<rect x="1431.84" y="20.00" width="1015.60" height="1.20" fill="#27309a"/>
<rect x="10.00" y="21.50" width="507.80" height="1.60" fill="#ececec"/>
<rect x="619.36" y="21.50" width="507.80" height="1.60" fill="#ececec"/>
<rect x="1533.40" y="21.50" width="914.04" height="1.60" fill="#ececec"/>
<rect x="517.80" y="23.50" width="609.36" height="1.50" fill="#5f4ba8"/>
<rect x="1431.84" y="23.50" width="812.48" height="1.50" fill="#5f4ba8"/>
<rect x="10.00" y="27.00" width="2234.32" height="1.00" fill="#78a05a"/>
<rect x="213.12" y="26.00" width="304.68" height="1.20" fill="#58bcae"/>
<rect x="619.36" y="26.00" width="507.80" height="1.20" fill="#58bcae"/>
<rect x="1431.84" y="26.00" width="812.48" height="1.20" fill="#58bcae"/>
<rect x="517.80" y="30.00" width="914.04" height="1.20" fill="#a997e0"/>
<rect x="1431.84" y="30.00" width="406.24" height="1.20" fill="#a997e0"/>
<rect x="517.80" y="31.50" width="25.39" height="1.20" fill="#4ca1e8"/>
<rect x="720.92" y="31.50" width="25.39" height="1.20" fill="#4ca1e8"/>
<rect x="924.04" y="31.50" width="25.39" height="1.20" fill="#4ca1e8"/>
<rect x="1127.16" y="31.50" width="25.39" height="1.20" fill="#4ca1e8"/>
<rect x="1431.84" y="31.50" width="25.39" height="1.20" fill="#4ca1e8"/>
<rect x="1634.96" y="31.50" width="25.39" height="1.20" fill="#4ca1e8"/>
<rect x="1838.08" y="31.50" width="25.39" height="1.20" fill="#4ca1e8"/>
<rect x="416.24" y="34.50" width="101.56" height="1.20" fill="#ece48a"/>
<rect x="1127.16" y="34.50" width="101.56" height="1.20" fill="#ece48a"/>
<rect x="1304.89" y="34.50" width="203.12" height="1.20" fill="#ece48a"/>
<rect x="2041.20" y="34.50" width="101.56" height="1.20" fill="#ece48a"/>
<rect x="2447.44" y="34.50" width="101.56" height="1.20" fill="#ece48a"/>
<rect x="8" y="18" width="2530" height="28" fill="none" stroke="#000" stroke-width="4"/>
<rect x="10.00" y="21.00" width="2.00" height="22.00" fill="#000"/>
<rect x="2534.00" y="21.00" width="2.00" height="22.00" fill="#000"/>
<rect x="2662.00" y="20.00" width="34.00" height="22.00" fill="#b9b9b9"/>
<rect x="2706.00" y="20.00" width="34.00" height="22.00" fill="#b9b9b9"/>
<circle cx="2781" cy="26.5" r="19" fill="#454545" shape-rendering="geometricPrecision"/>
<rect x="2770.00" y="17.00" width="22.00" height="4.20" fill="#F4B43F"/>
<rect x="2770.00" y="24.80" width="22.00" height="4.20" fill="#F4B43F"/>
<rect x="2770.00" y="32.60" width="22.00" height="4.20" fill="#F4B43F"/>
<circle cx="2781" cy="72.5" r="19" fill="#454545" shape-rendering="geometricPrecision"/>
<rect x="2771.00" y="62.00" width="4.00" height="22.00" fill="#8c8c8c"/>
<rect x="2779.00" y="62.00" width="4.00" height="22.00" fill="#8c8c8c"/>
<rect x="2787.00" y="62.00" width="4.00" height="22.00" fill="#8c8c8c"/>
<g shape-rendering="geometricPrecision">
<rect x="2526" y="104" width="56" height="22" rx="11" fill="#b9b9b9"/>
<circle cx="2537" cy="145" r="11" fill="#b9b9b9"/>
<path d="M2530.3 145 L2538 139 L2538 151 Z" fill="#555"/><rect x="2537" y="144" width="7" height="2.2" fill="#555"/>
<circle cx="2571" cy="145" r="11" fill="#b9b9b9"/>
<path d="M2578 145 L2570.2 139 L2570.2 151 Z" fill="#000"/><rect x="2564" y="144" width="7" height="2.2" fill="#000"/>
<rect x="2608" y="134" width="42" height="22" fill="#b9b9b9"/>
<path d="M2625 149 L2633 141" stroke="#000" stroke-width="2"/><circle cx="2625" cy="149" r="3" fill="#000"/><circle cx="2633" cy="141" r="3" fill="#000"/>
<rect x="2662" y="134" width="42" height="22" fill="#b9b9b9"/>
<path d="M2679 145 L2679 142.5 Q2679 138.8 2683 138.8 Q2687 138.8 2687 142.5 L2687 145" fill="none" stroke="#000" stroke-width="2.4"/>
<rect x="2676" y="144.2" width="14" height="7.6" fill="#000"/>
</g>
<rect x="2766" y="123" width="14" height="813" rx="7" fill="#6d6d6d" shape-rendering="geometricPrecision"/>
<circle cx="2773" cy="1483" r="13" fill="#141414"/>
<circle cx="2773" cy="1521" r="13" fill="#141414"/>
<circle cx="2773" cy="1559" r="13" fill="#141414"/>
<circle cx="2773" cy="1597" r="13" fill="#141414"/>
<rect x="2516.00" y="168.00" width="230.00" height="1460.00" fill="#525252"/>
<rect x="2520.00" y="206.00" width="8.00" height="222.00" fill="#C9E9FB"/>
<rect x="2520.00" y="432.00" width="8.00" height="246.00" fill="#E84B40"/>
<rect x="2528.00" y="276.00" width="2.00" height="152.00" fill="#525252"/>
<rect x="2528.00" y="502.00" width="2.00" height="176.00" fill="#525252"/>
<rect x="2520.00" y="168.00" width="196.00" height="34.00" fill="#F2A945"/>
<g shape-rendering="geometricPrecision"><circle cx="2539" cy="185" r="12.3" fill="none" stroke="rgba(0,0,0,0.72)" stroke-width="1.9"/><path d="M2536 178.8 L2545.5 185 L2536 191.2 Z" fill="rgba(0,0,0,0.68)"/></g>
<rect x="2720.00" y="168.00" width="26.00" height="34.00" fill="#8e8e8e"/>
<rect x="2726.00" y="170.00" width="6.00" height="30.00" fill="#151515"/>
<rect x="2734.00" y="170.00" width="6.00" height="30.00" fill="#151515"/>
<rect x="2726.00" y="172.00" width="14.00" height="2.00" fill="#8e8e8e"/>
<rect x="2732.00" y="170.00" width="2.00" height="30.00" fill="#8e8e8e"/>
<rect x="2520.00" y="206.00" width="196.00" height="70.00" fill="#C9E9FB"/>
<g shape-rendering="geometricPrecision"><circle cx="2539" cy="223" r="12.3" fill="none" stroke="rgba(0,0,0,0.72)" stroke-width="1.9"/><path d="M2532.2 218.7 h9.6 M2536.2 223.1 h9.6 M2536.2 226.9 h9.6" stroke="rgba(0,0,0,0.72)" stroke-width="1.8"/></g>
<rect x="2720.00" y="206.00" width="26.00" height="70.00" fill="#8e8e8e"/>
<rect x="2726.00" y="208.00" width="6.00" height="66.00" fill="#151515"/>
<rect x="2734.00" y="208.00" width="6.00" height="66.00" fill="#151515"/>
<rect x="2726.00" y="213.00" width="14.00" height="2.00" fill="#8e8e8e"/>
<rect x="2732.00" y="208.00" width="2.00" height="66.00" fill="#8e8e8e"/>
<rect x="2530.00" y="280.00" width="186.00" height="34.00" fill="#E44BD3"/>
<g shape-rendering="geometricPrecision"><circle cx="2549" cy="297" r="12.3" fill="none" stroke="rgba(0,0,0,0.72)" stroke-width="1.9"/><path d="M2546 290.8 L2555.5 297 L2546 303.2 Z" fill="rgba(0,0,0,0.68)"/></g>
<rect x="2720.00" y="280.00" width="26.00" height="34.00" fill="#8e8e8e"/>
<rect x="2726.00" y="282.00" width="6.00" height="30.00" fill="#151515"/>
<rect x="2734.00" y="282.00" width="6.00" height="30.00" fill="#151515"/>
<rect x="2726.00" y="284.00" width="14.00" height="2.00" fill="#8e8e8e"/>
<rect x="2732.00" y="282.00" width="2.00" height="30.00" fill="#8e8e8e"/>
<rect x="2530.00" y="318.00" width="186.00" height="34.00" fill="#9CC4F6"/>
<g shape-rendering="geometricPrecision"><circle cx="2549" cy="335" r="12.3" fill="none" stroke="rgba(0,0,0,0.72)" stroke-width="1.9"/><path d="M2546 328.8 L2555.5 335 L2546 341.2 Z" fill="rgba(0,0,0,0.68)"/></g>
<rect x="2720.00" y="318.00" width="26.00" height="34.00" fill="#8e8e8e"/>
<rect x="2726.00" y="320.00" width="6.00" height="30.00" fill="#151515"/>
<rect x="2734.00" y="320.00" width="6.00" height="30.00" fill="#151515"/>
<rect x="2726.00" y="322.00" width="14.00" height="2.00" fill="#8e8e8e"/>
<rect x="2732.00" y="320.00" width="2.00" height="30.00" fill="#8e8e8e"/>
<rect x="2530.00" y="356.00" width="186.00" height="34.00" fill="#FBEE61"/>
<g shape-rendering="geometricPrecision"><circle cx="2549" cy="373" r="12.3" fill="none" stroke="rgba(0,0,0,0.72)" stroke-width="1.9"/><path d="M2546 366.8 L2555.5 373 L2546 379.2 Z" fill="rgba(0,0,0,0.68)"/></g>
<rect x="2720.00" y="356.00" width="26.00" height="34.00" fill="#8e8e8e"/>
<rect x="2726.00" y="358.00" width="6.00" height="30.00" fill="#151515"/>
<rect x="2734.00" y="358.00" width="6.00" height="30.00" fill="#151515"/>
<rect x="2726.00" y="360.00" width="14.00" height="2.00" fill="#8e8e8e"/>
<rect x="2732.00" y="358.00" width="2.00" height="30.00" fill="#8e8e8e"/>
<rect x="2530.00" y="394.00" width="186.00" height="34.00" fill="#E84B40"/>
<g shape-rendering="geometricPrecision"><circle cx="2549" cy="411" r="12.3" fill="none" stroke="rgba(0,0,0,0.72)" stroke-width="1.9"/><path d="M2546 404.8 L2555.5 411 L2546 417.2 Z" fill="rgba(0,0,0,0.68)"/></g>
<rect x="2720.00" y="394.00" width="26.00" height="34.00" fill="#8e8e8e"/>
<rect x="2726.00" y="396.00" width="6.00" height="30.00" fill="#151515"/>
<rect x="2734.00" y="396.00" width="6.00" height="30.00" fill="#151515"/>
<rect x="2726.00" y="398.00" width="14.00" height="2.00" fill="#8e8e8e"/>
<rect x="2732.00" y="396.00" width="2.00" height="30.00" fill="#8e8e8e"/>
<rect x="2520.00" y="432.00" width="196.00" height="70.00" fill="#E84B40"/>
<g shape-rendering="geometricPrecision"><circle cx="2539" cy="449" r="12.3" fill="none" stroke="rgba(0,0,0,0.72)" stroke-width="1.9"/><path d="M2532.2 444.7 h9.6 M2536.2 449.1 h9.6 M2536.2 452.9 h9.6" stroke="rgba(0,0,0,0.72)" stroke-width="1.8"/></g>
<rect x="2720.00" y="432.00" width="26.00" height="70.00" fill="#8e8e8e"/>
<rect x="2726.00" y="434.00" width="6.00" height="66.00" fill="#151515"/>
<rect x="2734.00" y="434.00" width="6.00" height="66.00" fill="#151515"/>
<rect x="2726.00" y="439.00" width="14.00" height="2.00" fill="#8e8e8e"/>
<rect x="2732.00" y="434.00" width="2.00" height="66.00" fill="#8e8e8e"/>
<rect x="2530.00" y="506.00" width="186.00" height="172.00" fill="#E84B40"/>
<g shape-rendering="geometricPrecision"><circle cx="2549" cy="523" r="12.3" fill="none" stroke="rgba(0,0,0,0.72)" stroke-width="1.9"/><path d="M2542.8 519.8 L2555.2 519.8 L2549 529 Z" fill="rgba(0,0,0,0.68)"/></g>
<rect x="2720.00" y="506.00" width="26.00" height="172.00" fill="#8e8e8e"/>
<rect x="2726.00" y="508.00" width="6.00" height="168.00" fill="#151515"/>
<rect x="2734.00" y="508.00" width="6.00" height="168.00" fill="#151515"/>
<rect x="2726.00" y="524.00" width="14.00" height="2.00" fill="#8e8e8e"/>
<rect x="2732.00" y="508.00" width="2.00" height="168.00" fill="#8e8e8e"/>
<rect x="2520.00" y="682.00" width="196.00" height="172.00" fill="#57B9AB"/>
<g shape-rendering="geometricPrecision"><circle cx="2539" cy="699" r="12.3" fill="none" stroke="rgba(0,0,0,0.72)" stroke-width="1.9"/><path d="M2532.8 695.8 L2545.2 695.8 L2539 705 Z" fill="rgba(0,0,0,0.68)"/></g>
<rect x="2720.00" y="682.00" width="26.00" height="172.00" fill="#8e8e8e"/>
<rect x="2726.00" y="684.00" width="6.00" height="168.00" fill="#151515"/>
<rect x="2734.00" y="684.00" width="6.00" height="168.00" fill="#151515"/>
<rect x="2726.00" y="700.00" width="14.00" height="2.00" fill="#8e8e8e"/>
<rect x="2732.00" y="684.00" width="2.00" height="168.00" fill="#8e8e8e"/>
<rect x="2520.00" y="858.00" width="196.00" height="172.00" fill="#C49A41"/>
<g shape-rendering="geometricPrecision"><circle cx="2539" cy="875" r="12.3" fill="none" stroke="rgba(0,0,0,0.72)" stroke-width="1.9"/><path d="M2532.8 871.8 L2545.2 871.8 L2539 881 Z" fill="rgba(0,0,0,0.68)"/></g>
<rect x="2720.00" y="858.00" width="26.00" height="172.00" fill="#8e8e8e"/>
<rect x="2726.00" y="860.00" width="6.00" height="168.00" fill="#151515"/>
<rect x="2734.00" y="860.00" width="6.00" height="168.00" fill="#151515"/>
<rect x="2726.00" y="876.00" width="14.00" height="2.00" fill="#8e8e8e"/>
<rect x="2732.00" y="860.00" width="2.00" height="168.00" fill="#8e8e8e"/>
<rect x="2520.00" y="1034.00" width="196.00" height="34.00" fill="#D65D9D"/>
<g shape-rendering="geometricPrecision"><circle cx="2539" cy="1051" r="12.3" fill="none" stroke="rgba(0,0,0,0.72)" stroke-width="1.9"/><path d="M2536 1044.8 L2545.5 1051 L2536 1057.2 Z" fill="rgba(0,0,0,0.68)"/></g>
<rect x="2720.00" y="1034.00" width="26.00" height="34.00" fill="#8e8e8e"/>
<rect x="2726.00" y="1036.00" width="6.00" height="30.00" fill="#151515"/>
<rect x="2734.00" y="1036.00" width="6.00" height="30.00" fill="#151515"/>
<rect x="2726.00" y="1038.00" width="14.00" height="2.00" fill="#8e8e8e"/>
<rect x="2732.00" y="1036.00" width="2.00" height="30.00" fill="#8e8e8e"/>
<rect x="2520.00" y="1072.00" width="196.00" height="34.00" fill="#8470DA"/>
<g shape-rendering="geometricPrecision"><circle cx="2539" cy="1089" r="12.3" fill="none" stroke="rgba(0,0,0,0.72)" stroke-width="1.9"/><path d="M2536 1082.8 L2545.5 1089 L2536 1095.2 Z" fill="rgba(0,0,0,0.68)"/></g>
<rect x="2720.00" y="1072.00" width="26.00" height="34.00" fill="#8e8e8e"/>
<rect x="2726.00" y="1074.00" width="6.00" height="30.00" fill="#151515"/>
<rect x="2734.00" y="1074.00" width="6.00" height="30.00" fill="#151515"/>
<rect x="2726.00" y="1076.00" width="14.00" height="2.00" fill="#8e8e8e"/>
<rect x="2732.00" y="1074.00" width="2.00" height="30.00" fill="#8e8e8e"/>
<rect x="2520.00" y="1110.00" width="196.00" height="34.00" fill="#E5732D"/>
<g shape-rendering="geometricPrecision"><circle cx="2539" cy="1127" r="12.3" fill="none" stroke="rgba(0,0,0,0.72)" stroke-width="1.9"/><path d="M2536 1120.8 L2545.5 1127 L2536 1133.2 Z" fill="rgba(0,0,0,0.68)"/></g>
<rect x="2720.00" y="1110.00" width="26.00" height="34.00" fill="#8e8e8e"/>
<rect x="2726.00" y="1112.00" width="6.00" height="30.00" fill="#151515"/>
<rect x="2734.00" y="1112.00" width="6.00" height="30.00" fill="#151515"/>
<rect x="2726.00" y="1114.00" width="14.00" height="2.00" fill="#8e8e8e"/>
<rect x="2732.00" y="1112.00" width="2.00" height="30.00" fill="#8e8e8e"/>
<rect x="2520.00" y="1148.00" width="196.00" height="34.00" fill="#F09BA6"/>
<g shape-rendering="geometricPrecision"><circle cx="2539" cy="1165" r="12.3" fill="none" stroke="rgba(0,0,0,0.72)" stroke-width="1.9"/><path d="M2536 1158.8 L2545.5 1165 L2536 1171.2 Z" fill="rgba(0,0,0,0.68)"/></g>
<rect x="2720.00" y="1148.00" width="26.00" height="34.00" fill="#8e8e8e"/>
<rect x="2726.00" y="1150.00" width="6.00" height="30.00" fill="#151515"/>
<rect x="2734.00" y="1150.00" width="6.00" height="30.00" fill="#151515"/>
<rect x="2726.00" y="1152.00" width="14.00" height="2.00" fill="#8e8e8e"/>
<rect x="2732.00" y="1150.00" width="2.00" height="30.00" fill="#8e8e8e"/>
<rect x="2520.00" y="1186.00" width="196.00" height="34.00" fill="#AD79C6"/>
<g shape-rendering="geometricPrecision"><circle cx="2539" cy="1203" r="12.3" fill="none" stroke="rgba(0,0,0,0.72)" stroke-width="1.9"/><path d="M2536 1196.8 L2545.5 1203 L2536 1209.2 Z" fill="rgba(0,0,0,0.68)"/></g>
<rect x="2720.00" y="1186.00" width="26.00" height="34.00" fill="#8e8e8e"/>
<rect x="2726.00" y="1188.00" width="6.00" height="30.00" fill="#151515"/>
<rect x="2734.00" y="1188.00" width="6.00" height="30.00" fill="#151515"/>
<rect x="2726.00" y="1190.00" width="14.00" height="2.00" fill="#8e8e8e"/>
<rect x="2732.00" y="1188.00" width="2.00" height="30.00" fill="#8e8e8e"/>
<rect x="2520.00" y="1224.00" width="196.00" height="138.00" fill="#4B9FE7"/>
<g shape-rendering="geometricPrecision"><circle cx="2539" cy="1241" r="12.3" fill="none" stroke="rgba(0,0,0,0.72)" stroke-width="1.9"/><path d="M2532.8 1237.8 L2545.2 1237.8 L2539 1247 Z" fill="rgba(0,0,0,0.68)"/></g>
<rect x="2720.00" y="1224.00" width="26.00" height="138.00" fill="#8e8e8e"/>
<rect x="2726.00" y="1226.00" width="6.00" height="134.00" fill="#151515"/>
<rect x="2734.00" y="1226.00" width="6.00" height="134.00" fill="#151515"/>
<rect x="2726.00" y="1238.00" width="14.00" height="2.00" fill="#8e8e8e"/>
<rect x="2732.00" y="1226.00" width="2.00" height="134.00" fill="#8e8e8e"/>
<rect x="2520.00" y="1366.00" width="196.00" height="34.00" fill="#C49A41"/>
<g shape-rendering="geometricPrecision"><circle cx="2539" cy="1383" r="12.3" fill="none" stroke="rgba(0,0,0,0.72)" stroke-width="1.9"/><path d="M2536 1376.8 L2545.5 1383 L2536 1389.2 Z" fill="rgba(0,0,0,0.68)"/></g>
<rect x="2720.00" y="1366.00" width="26.00" height="34.00" fill="#8e8e8e"/>
<rect x="2726.00" y="1368.00" width="6.00" height="30.00" fill="#151515"/>
<rect x="2734.00" y="1368.00" width="6.00" height="30.00" fill="#151515"/>
<rect x="2726.00" y="1370.00" width="14.00" height="2.00" fill="#8e8e8e"/>
<rect x="2732.00" y="1368.00" width="2.00" height="30.00" fill="#8e8e8e"/>
<rect x="2520.00" y="1404.00" width="196.00" height="34.00" fill="#72E6FB"/>
<g shape-rendering="geometricPrecision"><circle cx="2539" cy="1421" r="12.3" fill="none" stroke="rgba(0,0,0,0.72)" stroke-width="1.9"/><path d="M2536 1414.8 L2545.5 1421 L2536 1427.2 Z" fill="rgba(0,0,0,0.68)"/></g>
<rect x="2720.00" y="1404.00" width="26.00" height="34.00" fill="#8e8e8e"/>
<rect x="2726.00" y="1406.00" width="6.00" height="30.00" fill="#151515"/>
<rect x="2734.00" y="1406.00" width="6.00" height="30.00" fill="#151515"/>
<rect x="2726.00" y="1408.00" width="14.00" height="2.00" fill="#8e8e8e"/>
<rect x="2732.00" y="1406.00" width="2.00" height="30.00" fill="#8e8e8e"/>
<rect x="2520.00" y="1442.00" width="196.00" height="34.00" fill="#F09BA6"/>
<g shape-rendering="geometricPrecision"><circle cx="2539" cy="1459" r="12.3" fill="none" stroke="rgba(0,0,0,0.72)" stroke-width="1.9"/><path d="M2536 1452.8 L2545.5 1459 L2536 1465.2 Z" fill="rgba(0,0,0,0.68)"/></g>
<rect x="2720.00" y="1442.00" width="26.00" height="34.00" fill="#8e8e8e"/>
<rect x="2726.00" y="1444.00" width="6.00" height="30.00" fill="#151515"/>
<rect x="2734.00" y="1444.00" width="6.00" height="30.00" fill="#151515"/>
<rect x="2726.00" y="1446.00" width="14.00" height="2.00" fill="#8e8e8e"/>
<rect x="2732.00" y="1444.00" width="2.00" height="30.00" fill="#8e8e8e"/>
<rect x="2520.00" y="1480.00" width="196.00" height="34.00" fill="#4A9A8C"/>
<g shape-rendering="geometricPrecision"><circle cx="2539" cy="1497" r="12.3" fill="none" stroke="rgba(0,0,0,0.72)" stroke-width="1.9"/><path d="M2536 1490.8 L2545.5 1497 L2536 1503.2 Z" fill="rgba(0,0,0,0.68)"/></g>
<rect x="2720.00" y="1480.00" width="26.00" height="34.00" fill="#8e8e8e"/>
<rect x="2726.00" y="1482.00" width="6.00" height="30.00" fill="#151515"/>
<rect x="2734.00" y="1482.00" width="6.00" height="30.00" fill="#151515"/>
<rect x="2726.00" y="1484.00" width="14.00" height="2.00" fill="#8e8e8e"/>
<rect x="2732.00" y="1482.00" width="2.00" height="30.00" fill="#8e8e8e"/>
<rect x="2520.00" y="1518.00" width="196.00" height="34.00" fill="#8F7252"/>
<g shape-rendering="geometricPrecision"><circle cx="2539" cy="1535" r="12.3" fill="none" stroke="rgba(0,0,0,0.72)" stroke-width="1.9"/><path d="M2536 1528.8 L2545.5 1535 L2536 1541.2 Z" fill="rgba(0,0,0,0.68)"/></g>
<rect x="2720.00" y="1518.00" width="26.00" height="34.00" fill="#8e8e8e"/>
<circle cx="2733" cy="1523" r="3" fill="#151515" shape-rendering="geometricPrecision"/>
<circle cx="2733" cy="1529" r="3" fill="#151515" shape-rendering="geometricPrecision"/>
<circle cx="2733" cy="1535" r="3" fill="#151515" shape-rendering="geometricPrecision"/>
<circle cx="2733" cy="1541" r="3" fill="#151515" shape-rendering="geometricPrecision"/>
<circle cx="2733" cy="1547" r="3" fill="#151515" shape-rendering="geometricPrecision"/>
<rect x="2520.00" y="1556.00" width="196.00" height="32.00" fill="#E5732D"/>
<g shape-rendering="geometricPrecision"><circle cx="2539" cy="1573" r="12.3" fill="none" stroke="rgba(0,0,0,0.72)" stroke-width="1.9"/><path d="M2536 1566.8 L2545.5 1573 L2536 1579.2 Z" fill="rgba(0,0,0,0.68)"/></g>
<rect x="2720.00" y="1556.00" width="26.00" height="32.00" fill="#8e8e8e"/>
<rect x="2726.00" y="1558.00" width="6.00" height="28.00" fill="#151515"/>
<rect x="2734.00" y="1558.00" width="6.00" height="28.00" fill="#151515"/>
<rect x="2726.00" y="1559.50" width="14.00" height="2.00" fill="#8e8e8e"/>
<rect x="2732.00" y="1558.00" width="2.00" height="28.00" fill="#8e8e8e"/>
<rect x="2520.00" y="1594.00" width="196.00" height="34.00" fill="#FAEF5E"/>
<g shape-rendering="geometricPrecision"><circle cx="2539" cy="1611" r="12.3" fill="none" stroke="rgba(0,0,0,0.72)" stroke-width="1.9"/><path d="M2536 1604.8 L2545.5 1611 L2536 1617.2 Z" fill="rgba(0,0,0,0.68)"/></g>
<rect x="2720.00" y="1594.00" width="26.00" height="34.00" fill="#8e8e8e"/>
<rect x="2726.00" y="1596.00" width="6.00" height="30.00" fill="#151515"/>
<rect x="2734.00" y="1596.00" width="6.00" height="30.00" fill="#151515"/>
<rect x="2726.00" y="1598.00" width="14.00" height="2.00" fill="#8e8e8e"/>
<rect x="2732.00" y="1596.00" width="2.00" height="30.00" fill="#8e8e8e"/>
</svg>
<div id="tx" style="position:absolute;left:0;top:0;width:2810px;height:1654px;will-change:transform;">
<div class="t" style="left:12.00px;top:168.00px;font-size:20px;line-height:34px;color:#E2E4F6;font-weight:normal;width:395.75px;overflow:hidden;letter-spacing:-0.1px;-webkit-text-stroke:0.45px #E2E4F6;">SSV1_DRUM_LOOP_DANCE_124_KICK</div>
<div class="t" style="left:515.44px;top:168.00px;font-size:20px;line-height:34px;color:#E2E4F6;font-weight:normal;width:90.69px;overflow:hidden;letter-spacing:-0.1px;-webkit-text-stroke:0.45px #E2E4F6;">SSV1_DRUM_LOOP_DANCE_124_KICK</div>
<div class="t" style="left:616.13px;top:168.00px;font-size:20px;line-height:34px;color:#E2E4F6;font-weight:normal;width:90.69px;overflow:hidden;letter-spacing:-0.1px;-webkit-text-stroke:0.45px #E2E4F6;">SSV1_DRUM_LOOP_DANCE_124_KICK</div>
<div class="t" style="left:716.82px;top:168.00px;font-size:20px;line-height:34px;color:#E2E4F6;font-weight:normal;width:90.69px;overflow:hidden;letter-spacing:-0.1px;-webkit-text-stroke:0.45px #E2E4F6;">SSV1_DRUM_LOOP_DANCE_124_KICK</div>
<div class="t" style="left:817.50px;top:168.00px;font-size:20px;line-height:34px;color:#E2E4F6;font-weight:normal;width:191.38px;overflow:hidden;letter-spacing:-0.1px;-webkit-text-stroke:0.45px #E2E4F6;">SSV1_DRUM_LOOP_DANCE_124_KICK</div>
<div class="t" style="left:1018.88px;top:168.00px;font-size:20px;line-height:34px;color:#E2E4F6;font-weight:normal;width:93.69px;overflow:hidden;letter-spacing:-0.1px;-webkit-text-stroke:0.45px #E2E4F6;">SSV1_DRUM_LOOP_DANCE_124_KICK</div>
<div class="t" style="left:1421.63px;top:168.00px;font-size:20px;line-height:34px;color:#E2E4F6;font-weight:normal;width:90.69px;overflow:hidden;letter-spacing:-0.1px;-webkit-text-stroke:0.45px #E2E4F6;">SSV1_DRUM_LOOP_DANCE_124_KICK</div>
<div class="t" style="left:1522.32px;top:168.00px;font-size:20px;line-height:34px;color:#E2E4F6;font-weight:normal;width:191.38px;overflow:hidden;letter-spacing:-0.1px;-webkit-text-stroke:0.45px #E2E4F6;">SSV1_DRUM_LOOP_DANCE_124_KICK</div>
<div class="t" style="left:1723.70px;top:168.00px;font-size:20px;line-height:34px;color:#E2E4F6;font-weight:normal;width:90.69px;overflow:hidden;letter-spacing:-0.1px;-webkit-text-stroke:0.45px #E2E4F6;">SSV1_DRUM_LOOP_DANCE_124_KICK</div>
<div class="t" style="left:1824.38px;top:168.00px;font-size:20px;line-height:34px;color:#E2E4F6;font-weight:normal;width:191.38px;overflow:hidden;letter-spacing:-0.1px;-webkit-text-stroke:0.45px #E2E4F6;">SSV1_DRUM_LOOP_DANCE_124_KICK</div>
<div class="t" style="left:2025.76px;top:168.00px;font-size:20px;line-height:34px;color:#E2E4F6;font-weight:normal;width:191.38px;overflow:hidden;letter-spacing:-0.1px;-webkit-text-stroke:0.45px #E2E4F6;">SSV1_DRUM_LOOP_DANCE_124_KICK</div>
<div class="t" style="left:2227.14px;top:168.00px;font-size:20px;line-height:34px;color:#E2E4F6;font-weight:normal;width:194.38px;overflow:hidden;letter-spacing:-0.1px;-webkit-text-stroke:0.45px #E2E4F6;">SSV1_DRUM_LOOP_DANCE_124_KICK</div>
<div class="t" style="left:12.00px;top:280.00px;font-size:20px;line-height:34px;color:#111;font-weight:normal;width:497.44px;overflow:hidden;letter-spacing:0.9px;">ZEN_ZMT_124_drum_loop_groove_no_kick_hickory</div>
<div class="t" style="left:616.13px;top:280.00px;font-size:20px;line-height:34px;color:#111;font-weight:normal;width:497.44px;overflow:hidden;letter-spacing:0.9px;">ZEN_ZMT_124_drum_loop_groove_no_kick_hickory</div>
<div class="t" style="left:1522.32px;top:280.00px;font-size:20px;line-height:34px;color:#111;font-weight:normal;width:900.19px;overflow:hidden;letter-spacing:0.9px;">ZEN_ZMT_124_drum_loop_groove_no_kick_hickory</div>
<div class="t" style="left:1018.88px;top:394.00px;font-size:20px;line-height:34px;color:#111;font-weight:normal;width:56.93px;overflow:hidden;letter-spacing:0.8px;">Kit_4_UT2</div>
<div class="t" style="left:1081.81px;top:394.00px;font-size:20px;line-height:34px;color:#111;font-weight:normal;width:31.76px;overflow:hidden;letter-spacing:0.8px;">Kit_4_UT2</div>
<div class="t" style="left:1723.70px;top:394.00px;font-size:20px;line-height:34px;color:#111;font-weight:normal;width:56.93px;overflow:hidden;letter-spacing:0.8px;">Kit_4_UT2</div>
<div class="t" style="left:1786.63px;top:394.00px;font-size:20px;line-height:34px;color:#111;font-weight:normal;width:31.76px;overflow:hidden;letter-spacing:0.8px;">Kit_4_UT2</div>
<div class="t" style="left:515.44px;top:506.00px;font-size:20px;line-height:34px;color:#F2F0FA;font-weight:normal;width:598.13px;overflow:hidden;letter-spacing:-0.3px;-webkit-text-stroke:0.45px #F2F0FA;">Bass</div>
<div class="t" style="left:1421.63px;top:506.00px;font-size:20px;line-height:34px;color:#F2F0FA;font-weight:normal;width:799.50px;overflow:hidden;letter-spacing:-0.3px;-webkit-text-stroke:0.45px #F2F0FA;">Bass</div>
<div class="t" style="left:212.88px;top:682.00px;font-size:20px;line-height:34px;color:#0b1d1a;font-weight:normal;width:19.67px;overflow:hidden;-webkit-text-stroke:0.3px #0b1d1a;">M</div>
<div class="t" style="left:238.05px;top:682.00px;font-size:20px;line-height:34px;color:#0b1d1a;font-weight:normal;width:19.67px;overflow:hidden;-webkit-text-stroke:0.3px #0b1d1a;">M</div>
<div class="t" style="left:263.22px;top:682.00px;font-size:20px;line-height:34px;color:#0b1d1a;font-weight:normal;width:19.67px;overflow:hidden;-webkit-text-stroke:0.3px #0b1d1a;">M</div>
<div class="t" style="left:288.39px;top:682.00px;font-size:20px;line-height:34px;color:#0b1d1a;font-weight:normal;width:19.67px;overflow:hidden;-webkit-text-stroke:0.3px #0b1d1a;">M</div>
<div class="t" style="left:313.56px;top:682.00px;font-size:20px;line-height:34px;color:#0b1d1a;font-weight:normal;width:19.67px;overflow:hidden;-webkit-text-stroke:0.3px #0b1d1a;">M</div>
<div class="t" style="left:338.74px;top:682.00px;font-size:20px;line-height:34px;color:#0b1d1a;font-weight:normal;width:19.67px;overflow:hidden;-webkit-text-stroke:0.3px #0b1d1a;">M</div>
<div class="t" style="left:363.91px;top:682.00px;font-size:20px;line-height:34px;color:#0b1d1a;font-weight:normal;width:19.67px;overflow:hidden;-webkit-text-stroke:0.3px #0b1d1a;">M</div>
<div class="t" style="left:389.08px;top:682.00px;font-size:20px;line-height:34px;color:#0b1d1a;font-weight:normal;width:19.67px;overflow:hidden;-webkit-text-stroke:0.3px #0b1d1a;">M</div>
<div class="t" style="left:414.25px;top:682.00px;font-size:20px;line-height:34px;color:#0b1d1a;font-weight:normal;width:19.67px;overflow:hidden;-webkit-text-stroke:0.3px #0b1d1a;">M</div>
<div class="t" style="left:439.42px;top:682.00px;font-size:20px;line-height:34px;color:#0b1d1a;font-weight:normal;width:19.67px;overflow:hidden;-webkit-text-stroke:0.3px #0b1d1a;">M</div>
<div class="t" style="left:464.60px;top:682.00px;font-size:20px;line-height:34px;color:#0b1d1a;font-weight:normal;width:19.67px;overflow:hidden;-webkit-text-stroke:0.3px #0b1d1a;">M</div>
<div class="t" style="left:489.77px;top:682.00px;font-size:20px;line-height:34px;color:#0b1d1a;font-weight:normal;width:19.67px;overflow:hidden;-webkit-text-stroke:0.3px #0b1d1a;">M</div>
<div class="t" style="left:615.63px;top:682.00px;font-size:20px;line-height:34px;color:#0b1d1a;font-weight:normal;width:19.67px;overflow:hidden;-webkit-text-stroke:0.3px #0b1d1a;">M</div>
<div class="t" style="left:640.80px;top:682.00px;font-size:20px;line-height:34px;color:#0b1d1a;font-weight:normal;width:19.67px;overflow:hidden;-webkit-text-stroke:0.3px #0b1d1a;">M</div>
<div class="t" style="left:665.97px;top:682.00px;font-size:20px;line-height:34px;color:#0b1d1a;font-weight:normal;width:19.67px;overflow:hidden;-webkit-text-stroke:0.3px #0b1d1a;">M</div>
<div class="t" style="left:691.14px;top:682.00px;font-size:20px;line-height:34px;color:#0b1d1a;font-weight:normal;width:19.67px;overflow:hidden;-webkit-text-stroke:0.3px #0b1d1a;">M</div>
<div class="t" style="left:716.32px;top:682.00px;font-size:20px;line-height:34px;color:#0b1d1a;font-weight:normal;width:19.67px;overflow:hidden;-webkit-text-stroke:0.3px #0b1d1a;">M</div>
<div class="t" style="left:741.49px;top:682.00px;font-size:20px;line-height:34px;color:#0b1d1a;font-weight:normal;width:19.67px;overflow:hidden;-webkit-text-stroke:0.3px #0b1d1a;">M</div>
<div class="t" style="left:766.66px;top:682.00px;font-size:20px;line-height:34px;color:#0b1d1a;font-weight:normal;width:19.67px;overflow:hidden;-webkit-text-stroke:0.3px #0b1d1a;">M</div>
<div class="t" style="left:791.83px;top:682.00px;font-size:20px;line-height:34px;color:#0b1d1a;font-weight:normal;width:19.67px;overflow:hidden;-webkit-text-stroke:0.3px #0b1d1a;">M</div>
<div class="t" style="left:817.00px;top:682.00px;font-size:20px;line-height:34px;color:#0b1d1a;font-weight:normal;width:19.67px;overflow:hidden;-webkit-text-stroke:0.3px #0b1d1a;">M</div>
<div class="t" style="left:842.18px;top:682.00px;font-size:20px;line-height:34px;color:#0b1d1a;font-weight:normal;width:19.67px;overflow:hidden;-webkit-text-stroke:0.3px #0b1d1a;">M</div>
<div class="t" style="left:867.35px;top:682.00px;font-size:20px;line-height:34px;color:#0b1d1a;font-weight:normal;width:19.67px;overflow:hidden;-webkit-text-stroke:0.3px #0b1d1a;">M</div>
<div class="t" style="left:892.52px;top:682.00px;font-size:20px;line-height:34px;color:#0b1d1a;font-weight:normal;width:19.67px;overflow:hidden;-webkit-text-stroke:0.3px #0b1d1a;">M</div>
<div class="t" style="left:917.69px;top:682.00px;font-size:20px;line-height:34px;color:#0b1d1a;font-weight:normal;width:19.67px;overflow:hidden;-webkit-text-stroke:0.3px #0b1d1a;">M</div>
<div class="t" style="left:942.86px;top:682.00px;font-size:20px;line-height:34px;color:#0b1d1a;font-weight:normal;width:19.67px;overflow:hidden;-webkit-text-stroke:0.3px #0b1d1a;">M</div>
<div class="t" style="left:968.04px;top:682.00px;font-size:20px;line-height:34px;color:#0b1d1a;font-weight:normal;width:19.67px;overflow:hidden;-webkit-text-stroke:0.3px #0b1d1a;">M</div>
<div class="t" style="left:993.21px;top:682.00px;font-size:20px;line-height:34px;color:#0b1d1a;font-weight:normal;width:19.67px;overflow:hidden;-webkit-text-stroke:0.3px #0b1d1a;">M</div>
<div class="t" style="left:1018.38px;top:682.00px;font-size:20px;line-height:34px;color:#0b1d1a;font-weight:normal;width:19.67px;overflow:hidden;-webkit-text-stroke:0.3px #0b1d1a;">M</div>
<div class="t" style="left:1043.55px;top:682.00px;font-size:20px;line-height:34px;color:#0b1d1a;font-weight:normal;width:19.67px;overflow:hidden;-webkit-text-stroke:0.3px #0b1d1a;">M</div>
<div class="t" style="left:1068.72px;top:682.00px;font-size:20px;line-height:34px;color:#0b1d1a;font-weight:normal;width:19.67px;overflow:hidden;-webkit-text-stroke:0.3px #0b1d1a;">M</div>
<div class="t" style="left:1093.90px;top:682.00px;font-size:20px;line-height:34px;color:#0b1d1a;font-weight:normal;width:19.67px;overflow:hidden;-webkit-text-stroke:0.3px #0b1d1a;">M</div>
<div class="t" style="left:1119.07px;top:682.00px;font-size:20px;line-height:34px;color:#0b1d1a;font-weight:normal;width:19.67px;overflow:hidden;-webkit-text-stroke:0.3px #0b1d1a;">M</div>
<div class="t" style="left:1144.24px;top:682.00px;font-size:20px;line-height:34px;color:#0b1d1a;font-weight:normal;width:19.67px;overflow:hidden;-webkit-text-stroke:0.3px #0b1d1a;">M</div>
<div class="t" style="left:1169.41px;top:682.00px;font-size:20px;line-height:34px;color:#0b1d1a;font-weight:normal;width:19.67px;overflow:hidden;-webkit-text-stroke:0.3px #0b1d1a;">M</div>
<div class="t" style="left:1194.58px;top:682.00px;font-size:20px;line-height:34px;color:#0b1d1a;font-weight:normal;width:19.67px;overflow:hidden;-webkit-text-stroke:0.3px #0b1d1a;">M</div>
<div class="t" style="left:1421.90px;top:682.00px;font-size:20px;line-height:34px;color:#0b1d1a;font-weight:normal;width:18.80px;overflow:hidden;-webkit-text-stroke:0.3px #0b1d1a;">M</div>
<div class="t" style="left:1446.20px;top:682.00px;font-size:20px;line-height:34px;color:#0b1d1a;font-weight:normal;width:20.40px;overflow:hidden;-webkit-text-stroke:0.3px #0b1d1a;">M</div>
<div class="t" style="left:1472.10px;top:682.00px;font-size:20px;line-height:34px;color:#0b1d1a;font-weight:normal;width:20.40px;overflow:hidden;-webkit-text-stroke:0.3px #0b1d1a;">M</div>
<div class="t" style="left:1498.00px;top:682.00px;font-size:20px;line-height:34px;color:#0b1d1a;font-weight:normal;width:19.00px;overflow:hidden;-webkit-text-stroke:0.3px #0b1d1a;">M</div>
<div class="t" style="left:1522.50px;top:682.00px;font-size:20px;line-height:34px;color:#0b1d1a;font-weight:normal;width:20.40px;overflow:hidden;-webkit-text-stroke:0.3px #0b1d1a;">M</div>
<div class="t" style="left:1548.40px;top:682.00px;font-size:20px;line-height:34px;color:#0b1d1a;font-weight:normal;width:18.60px;overflow:hidden;-webkit-text-stroke:0.3px #0b1d1a;">M</div>
<div class="t" style="left:1572.50px;top:682.00px;font-size:20px;line-height:34px;color:#0b1d1a;font-weight:normal;width:20.40px;overflow:hidden;-webkit-text-stroke:0.3px #0b1d1a;">M</div>
<div class="t" style="left:1598.40px;top:682.00px;font-size:20px;line-height:34px;color:#0b1d1a;font-weight:normal;width:20.35px;overflow:hidden;-webkit-text-stroke:0.3px #0b1d1a;">M</div>
<div class="t" style="left:1624.25px;top:682.00px;font-size:20px;line-height:34px;color:#0b1d1a;font-weight:normal;width:18.65px;overflow:hidden;-webkit-text-stroke:0.3px #0b1d1a;">M</div>
<div class="t" style="left:1648.40px;top:682.00px;font-size:20px;line-height:34px;color:#0b1d1a;font-weight:normal;width:20.35px;overflow:hidden;-webkit-text-stroke:0.3px #0b1d1a;">M</div>
<div class="t" style="left:1674.25px;top:682.00px;font-size:20px;line-height:34px;color:#0b1d1a;font-weight:normal;width:18.65px;overflow:hidden;-webkit-text-stroke:0.3px #0b1d1a;">M</div>
<div class="t" style="left:1698.40px;top:682.00px;font-size:20px;line-height:34px;color:#0b1d1a;font-weight:normal;width:8.60px;overflow:hidden;-webkit-text-stroke:0.3px #0b1d1a;">M</div>
<div class="t" style="left:1712.50px;top:682.00px;font-size:20px;line-height:34px;color:#0b1d1a;font-weight:normal;width:18.50px;overflow:hidden;-webkit-text-stroke:0.3px #0b1d1a;">M</div>
<div class="t" style="left:1736.50px;top:682.00px;font-size:20px;line-height:34px;color:#0b1d1a;font-weight:normal;width:20.50px;overflow:hidden;-webkit-text-stroke:0.3px #0b1d1a;">M</div>
<div class="t" style="left:1762.50px;top:682.00px;font-size:20px;line-height:34px;color:#0b1d1a;font-weight:normal;width:18.50px;overflow:hidden;-webkit-text-stroke:0.3px #0b1d1a;">M</div>
<div class="t" style="left:1786.50px;top:682.00px;font-size:20px;line-height:34px;color:#0b1d1a;font-weight:normal;width:8.50px;overflow:hidden;-webkit-text-stroke:0.3px #0b1d1a;">M</div>
<div class="t" style="left:1800.50px;top:682.00px;font-size:20px;line-height:34px;color:#0b1d1a;font-weight:normal;width:6.50px;overflow:hidden;-webkit-text-stroke:0.3px #0b1d1a;">M</div>
<div class="t" style="left:1812.50px;top:682.00px;font-size:20px;line-height:34px;color:#0b1d1a;font-weight:normal;width:6.50px;overflow:hidden;-webkit-text-stroke:0.3px #0b1d1a;">M</div>
<div class="t" style="left:1824.50px;top:682.00px;font-size:20px;line-height:34px;color:#0b1d1a;font-weight:normal;width:20.10px;overflow:hidden;-webkit-text-stroke:0.3px #0b1d1a;">M</div>
<div class="t" style="left:1850.10px;top:682.00px;font-size:20px;line-height:34px;color:#0b1d1a;font-weight:normal;width:18.80px;overflow:hidden;-webkit-text-stroke:0.3px #0b1d1a;">M</div>
<div class="t" style="left:1874.40px;top:682.00px;font-size:20px;line-height:34px;color:#0b1d1a;font-weight:normal;width:20.80px;overflow:hidden;-webkit-text-stroke:0.3px #0b1d1a;">M</div>
<div class="t" style="left:1900.70px;top:682.00px;font-size:20px;line-height:34px;color:#0b1d1a;font-weight:normal;width:6.40px;overflow:hidden;-webkit-text-stroke:0.3px #0b1d1a;">M</div>
<div class="t" style="left:1912.60px;top:682.00px;font-size:20px;line-height:34px;color:#0b1d1a;font-weight:normal;width:8.40px;overflow:hidden;-webkit-text-stroke:0.3px #0b1d1a;">M</div>
<div class="t" style="left:1926.50px;top:682.00px;font-size:20px;line-height:34px;color:#0b1d1a;font-weight:normal;width:6.70px;overflow:hidden;-webkit-text-stroke:0.3px #0b1d1a;">M</div>
<div class="t" style="left:1938.70px;top:682.00px;font-size:20px;line-height:34px;color:#0b1d1a;font-weight:normal;width:18.60px;overflow:hidden;-webkit-text-stroke:0.3px #0b1d1a;">M</div>
<div class="t" style="left:1962.80px;top:682.00px;font-size:20px;line-height:34px;color:#0b1d1a;font-weight:normal;width:19.90px;overflow:hidden;-webkit-text-stroke:0.3px #0b1d1a;">M</div>
<div class="t" style="left:1988.20px;top:682.00px;font-size:20px;line-height:34px;color:#0b1d1a;font-weight:normal;width:20.90px;overflow:hidden;-webkit-text-stroke:0.3px #0b1d1a;">M</div>
<div class="t" style="left:2014.60px;top:682.00px;font-size:20px;line-height:34px;color:#0b1d1a;font-weight:normal;width:6.80px;overflow:hidden;-webkit-text-stroke:0.3px #0b1d1a;">M</div>
<div class="t" style="left:2026.90px;top:682.00px;font-size:20px;line-height:34px;color:#0b1d1a;font-weight:normal;width:6.30px;overflow:hidden;-webkit-text-stroke:0.3px #0b1d1a;">M</div>
<div class="t" style="left:2038.70px;top:682.00px;font-size:20px;line-height:34px;color:#0b1d1a;font-weight:normal;width:8.30px;overflow:hidden;-webkit-text-stroke:0.3px #0b1d1a;">M</div>
<div class="t" style="left:2052.50px;top:682.00px;font-size:20px;line-height:34px;color:#0b1d1a;font-weight:normal;width:18.50px;overflow:hidden;-webkit-text-stroke:0.3px #0b1d1a;">M</div>
<div class="t" style="left:2076.50px;top:682.00px;font-size:20px;line-height:34px;color:#0b1d1a;font-weight:normal;width:20.50px;overflow:hidden;-webkit-text-stroke:0.3px #0b1d1a;">M</div>
<div class="t" style="left:2102.50px;top:682.00px;font-size:20px;line-height:34px;color:#0b1d1a;font-weight:normal;width:18.50px;overflow:hidden;-webkit-text-stroke:0.3px #0b1d1a;">M</div>
<div class="t" style="left:2126.50px;top:682.00px;font-size:20px;line-height:34px;color:#0b1d1a;font-weight:normal;width:8.50px;overflow:hidden;-webkit-text-stroke:0.3px #0b1d1a;">M</div>
<div class="t" style="left:2140.50px;top:682.00px;font-size:20px;line-height:34px;color:#0b1d1a;font-weight:normal;width:6.80px;overflow:hidden;-webkit-text-stroke:0.3px #0b1d1a;">M</div>
<div class="t" style="left:2152.80px;top:682.00px;font-size:20px;line-height:34px;color:#0b1d1a;font-weight:normal;width:6.30px;overflow:hidden;-webkit-text-stroke:0.3px #0b1d1a;">M</div>
<div class="t" style="left:2164.60px;top:682.00px;font-size:20px;line-height:34px;color:#0b1d1a;font-weight:normal;width:20.40px;overflow:hidden;-webkit-text-stroke:0.3px #0b1d1a;">M</div>
<div class="t" style="left:2190.50px;top:682.00px;font-size:20px;line-height:34px;color:#0b1d1a;font-weight:normal;width:18.40px;overflow:hidden;-webkit-text-stroke:0.3px #0b1d1a;">M</div>
<div class="t" style="left:2214.40px;top:682.00px;font-size:20px;line-height:34px;color:#0b1d1a;font-weight:normal;width:7.60px;overflow:hidden;-webkit-text-stroke:0.3px #0b1d1a;">M</div>
<div class="t" style="left:12.00px;top:858.00px;font-size:20px;line-height:34px;color:#0f140b;font-weight:normal;width:1202.26px;overflow:hidden;letter-spacing:0.2px;">TA_MK_VOX_FEMALE9_124bpm_G</div>
<div class="t" style="left:1220.26px;top:858.00px;font-size:20px;line-height:34px;color:#0f140b;font-weight:normal;width:195.38px;overflow:hidden;letter-spacing:0.2px;">TA_MK_VOX_FEMALE9_124bpm_G</div>
<div class="t" style="left:1421.63px;top:858.00px;font-size:20px;line-height:34px;color:#0f140b;font-weight:normal;width:799.50px;overflow:hidden;letter-spacing:0.2px;">TA_MK_VOX_FEMALE9_124bpm_G</div>
<div class="t" style="left:515.44px;top:1034.00px;font-size:20px;line-height:34px;color:#0c1a06;font-weight:normal;width:94.69px;overflow:hidden;letter-spacing:0.3px;">91V_HV_11</div>
<div class="t" style="left:716.82px;top:1034.00px;font-size:20px;line-height:34px;color:#0c1a06;font-weight:normal;width:94.69px;overflow:hidden;letter-spacing:0.3px;">91V_HV_11</div>
<div class="t" style="left:1421.63px;top:1034.00px;font-size:20px;line-height:34px;color:#0c1a06;font-weight:normal;width:94.69px;overflow:hidden;letter-spacing:0.3px;">91V_HV_11</div>
<div class="t" style="left:1623.01px;top:1034.00px;font-size:20px;line-height:34px;color:#0c1a06;font-weight:normal;width:77.07px;overflow:hidden;letter-spacing:0.3px;">91V_HV_11</div>
<div class="t" style="left:616.13px;top:1072.00px;font-size:20px;line-height:34px;color:#0c1a06;font-weight:normal;width:94.69px;overflow:hidden;letter-spacing:0.3px;">91V_HV_11</div>
<div class="t" style="left:1522.32px;top:1072.00px;font-size:20px;line-height:34px;color:#0c1a06;font-weight:normal;width:94.69px;overflow:hidden;letter-spacing:0.3px;">91V_HV_11</div>
<div class="t" style="left:1018.88px;top:1110.00px;font-size:20px;line-height:34px;color:#0c1a06;font-weight:normal;width:94.69px;overflow:hidden;letter-spacing:0.3px;">PM_PS_150</div>
<div class="t" style="left:1119.57px;top:1110.00px;font-size:20px;line-height:34px;color:#0c1a06;font-weight:normal;width:94.69px;overflow:hidden;letter-spacing:0.3px;">PM_PS_150</div>
<div class="t" style="left:1396.46px;top:1110.00px;font-size:20px;line-height:34px;color:#0c1a06;font-weight:normal;width:7.84px;overflow:hidden;letter-spacing:0.3px;">PM_PS_150</div>
<div class="t" style="left:1723.70px;top:1110.00px;font-size:20px;line-height:34px;color:#0c1a06;font-weight:normal;width:99.72px;overflow:hidden;letter-spacing:0.3px;">PM_PS_150</div>
<div class="t" style="left:817.50px;top:1148.00px;font-size:20px;line-height:34px;color:#0c1a06;font-weight:normal;width:44.34px;overflow:hidden;letter-spacing:0.3px;">TA_MK_VOX</div>
<div class="t" style="left:867.85px;top:1148.00px;font-size:20px;line-height:34px;color:#0c1a06;font-weight:normal;width:44.34px;overflow:hidden;letter-spacing:0.3px;">TA_MK_VOX</div>
<div class="t" style="left:918.19px;top:1148.00px;font-size:20px;line-height:34px;color:#0c1a06;font-weight:normal;width:44.34px;overflow:hidden;letter-spacing:0.3px;">TA_MK_VOX</div>
<div class="t" style="left:968.54px;top:1148.00px;font-size:20px;line-height:34px;color:#0c1a06;font-weight:normal;width:44.34px;overflow:hidden;letter-spacing:0.3px;">TA_MK_VOX</div>
<div class="t" style="left:1018.88px;top:1148.00px;font-size:20px;line-height:34px;color:#0c1a06;font-weight:normal;width:44.34px;overflow:hidden;letter-spacing:0.3px;">TA_MK_VOX</div>
<div class="t" style="left:1069.22px;top:1148.00px;font-size:20px;line-height:34px;color:#0c1a06;font-weight:normal;width:44.34px;overflow:hidden;letter-spacing:0.3px;">TA_MK_VOX</div>
<div class="t" style="left:1522.32px;top:1148.00px;font-size:20px;line-height:34px;color:#0c1a06;font-weight:normal;width:44.34px;overflow:hidden;letter-spacing:0.3px;">TA_MK_VOX</div>
<div class="t" style="left:1572.66px;top:1148.00px;font-size:20px;line-height:34px;color:#0c1a06;font-weight:normal;width:44.34px;overflow:hidden;letter-spacing:0.3px;">TA_MK_VOX</div>
<div class="t" style="left:1623.01px;top:1148.00px;font-size:20px;line-height:34px;color:#0c1a06;font-weight:normal;width:44.34px;overflow:hidden;letter-spacing:0.3px;">TA_MK_VOX</div>
<div class="t" style="left:1673.35px;top:1148.00px;font-size:20px;line-height:34px;color:#0c1a06;font-weight:normal;width:31.76px;overflow:hidden;letter-spacing:0.3px;">TA_MK_VOX</div>
<div class="t" style="left:1711.11px;top:1148.00px;font-size:20px;line-height:34px;color:#0c1a06;font-weight:normal;width:31.76px;overflow:hidden;letter-spacing:0.3px;">TA_MK_VOX</div>
<div class="t" style="left:1748.87px;top:1148.00px;font-size:20px;line-height:34px;color:#0c1a06;font-weight:normal;width:31.76px;overflow:hidden;letter-spacing:0.3px;">TA_MK_VOX</div>
<div class="t" style="left:1786.63px;top:1148.00px;font-size:20px;line-height:34px;color:#0c1a06;font-weight:normal;width:31.76px;overflow:hidden;letter-spacing:0.3px;">TA_MK_VOX</div>
<div class="t" style="left:1824.38px;top:1148.00px;font-size:20px;line-height:34px;color:#0c1a06;font-weight:normal;width:31.76px;overflow:hidden;letter-spacing:0.3px;">TA_MK_VOX</div>
<div class="t" style="left:1862.14px;top:1148.00px;font-size:20px;line-height:34px;color:#0c1a06;font-weight:normal;width:31.76px;overflow:hidden;letter-spacing:0.3px;">TA_MK_VOX</div>
<div class="t" style="left:1899.90px;top:1148.00px;font-size:20px;line-height:34px;color:#0c1a06;font-weight:normal;width:31.76px;overflow:hidden;letter-spacing:0.3px;">TA_MK_VOX</div>
<div class="t" style="left:1937.66px;top:1148.00px;font-size:20px;line-height:34px;color:#0c1a06;font-weight:normal;width:31.76px;overflow:hidden;letter-spacing:0.3px;">TA_MK_VOX</div>
<div class="t" style="left:1975.42px;top:1148.00px;font-size:20px;line-height:34px;color:#0c1a06;font-weight:normal;width:31.76px;overflow:hidden;letter-spacing:0.3px;">TA_MK_VOX</div>
<div class="t" style="left:2013.17px;top:1148.00px;font-size:20px;line-height:34px;color:#0c1a06;font-weight:normal;width:6.59px;overflow:hidden;letter-spacing:0.3px;">TA_MK_VOX</div>
<div class="t" style="left:515.44px;top:1186.00px;font-size:20px;line-height:34px;color:#140f24;font-weight:normal;width:900.19px;overflow:hidden;letter-spacing:0.8px;">Ambience</div>
<div class="t" style="left:1421.63px;top:1186.00px;font-size:20px;line-height:34px;color:#140f24;font-weight:normal;width:396.75px;overflow:hidden;letter-spacing:0.8px;">Ambience</div>
<div class="t" style="left:515.44px;top:1224.00px;font-size:20px;line-height:34px;color:#0a1420;font-weight:normal;width:18.17px;overflow:hidden;">pa</div>
<div class="t" style="left:716.82px;top:1224.00px;font-size:20px;line-height:34px;color:#0a1420;font-weight:normal;width:18.17px;overflow:hidden;">pa</div>
<div class="t" style="left:918.19px;top:1224.00px;font-size:20px;line-height:34px;color:#0a1420;font-weight:normal;width:18.17px;overflow:hidden;">pa</div>
<div class="t" style="left:1119.57px;top:1224.00px;font-size:20px;line-height:34px;color:#0a1420;font-weight:normal;width:18.17px;overflow:hidden;">pa</div>
<div class="t" style="left:1421.63px;top:1224.00px;font-size:20px;line-height:34px;color:#0a1420;font-weight:normal;width:18.17px;overflow:hidden;">pa</div>
<div class="t" style="left:1623.01px;top:1224.00px;font-size:20px;line-height:34px;color:#0a1420;font-weight:normal;width:18.17px;overflow:hidden;">pa</div>
<div class="t" style="left:1824.38px;top:1224.00px;font-size:20px;line-height:34px;color:#0a1420;font-weight:normal;width:18.17px;overflow:hidden;">pa</div>
<div class="t" style="left:1220.26px;top:1366.00px;font-size:20px;line-height:34px;color:#0b1a17;font-weight:normal;width:182.79px;overflow:hidden;letter-spacing:0.43px;">DS_MTH_124_synth</div>
<div class="t" style="left:414.75px;top:1404.00px;font-size:20px;line-height:34px;color:#111;font-weight:normal;width:94.69px;overflow:hidden;letter-spacing:0.3px;">BOS_DHT_</div>
<div class="t" style="left:1295.77px;top:1404.00px;font-size:20px;line-height:34px;color:#111;font-weight:normal;width:94.69px;overflow:hidden;letter-spacing:0.3px;">BOS_DHT_</div>
<div class="t" style="left:414.75px;top:1442.00px;font-size:20px;line-height:34px;color:#111;font-weight:normal;width:94.69px;overflow:hidden;letter-spacing:0.3px;">AFP2_Impact</div>
<div class="t" style="left:1119.57px;top:1442.00px;font-size:20px;line-height:34px;color:#111;font-weight:normal;width:94.69px;overflow:hidden;letter-spacing:0.3px;">AFP2_Impact</div>
<div class="t" style="left:1396.46px;top:1442.00px;font-size:20px;line-height:34px;color:#111;font-weight:normal;width:94.69px;overflow:hidden;letter-spacing:0.3px;">AFP2_Impact</div>
<div class="t" style="left:2025.76px;top:1442.00px;font-size:20px;line-height:34px;color:#111;font-weight:normal;width:94.69px;overflow:hidden;letter-spacing:0.3px;">AFP2_Impact</div>
<div class="t" style="left:2428.51px;top:1442.00px;font-size:20px;line-height:34px;color:#111;font-weight:normal;width:87.49px;overflow:hidden;letter-spacing:0.3px;">AFP2_Impact</div>
<div class="t" style="left:2453.00px;top:1589.00px;font-size:36px;line-height:40px;color:#4b4b4b;font-weight:bold;letter-spacing:2px;">4/1</div>
<div class="t" style="left:16.00px;top:81.00px;font-size:20px;line-height:24px;color:#b8b8b8;font-weight:normal;letter-spacing:0.3px;-webkit-text-stroke:0.35px #b8b8b8;">1</div>
<div class="t" style="left:116.69px;top:81.00px;font-size:20px;line-height:24px;color:#b8b8b8;font-weight:normal;letter-spacing:0.3px;-webkit-text-stroke:0.35px #b8b8b8;">9</div>
<div class="t" style="left:217.38px;top:81.00px;font-size:20px;line-height:24px;color:#b8b8b8;font-weight:normal;letter-spacing:0.3px;-webkit-text-stroke:0.35px #b8b8b8;">17</div>
<div class="t" style="left:318.06px;top:81.00px;font-size:20px;line-height:24px;color:#b8b8b8;font-weight:normal;letter-spacing:0.3px;-webkit-text-stroke:0.35px #b8b8b8;">25</div>
<div class="t" style="left:418.75px;top:81.00px;font-size:20px;line-height:24px;color:#b8b8b8;font-weight:normal;letter-spacing:0.3px;-webkit-text-stroke:0.35px #b8b8b8;">33</div>
<div class="t" style="left:519.44px;top:81.00px;font-size:20px;line-height:24px;color:#b8b8b8;font-weight:normal;letter-spacing:0.3px;-webkit-text-stroke:0.35px #b8b8b8;">41</div>
<div class="t" style="left:620.13px;top:81.00px;font-size:20px;line-height:24px;color:#b8b8b8;font-weight:normal;letter-spacing:0.3px;-webkit-text-stroke:0.35px #b8b8b8;">49</div>
<div class="t" style="left:720.82px;top:81.00px;font-size:20px;line-height:24px;color:#b8b8b8;font-weight:normal;letter-spacing:0.3px;-webkit-text-stroke:0.35px #b8b8b8;">57</div>
<div class="t" style="left:821.50px;top:81.00px;font-size:20px;line-height:24px;color:#b8b8b8;font-weight:normal;letter-spacing:0.3px;-webkit-text-stroke:0.35px #b8b8b8;">65</div>
<div class="t" style="left:922.19px;top:81.00px;font-size:20px;line-height:24px;color:#b8b8b8;font-weight:normal;letter-spacing:0.3px;-webkit-text-stroke:0.35px #b8b8b8;">73</div>
<div class="t" style="left:1022.88px;top:81.00px;font-size:20px;line-height:24px;color:#b8b8b8;font-weight:normal;letter-spacing:0.3px;-webkit-text-stroke:0.35px #b8b8b8;">81</div>
<div class="t" style="left:1123.57px;top:81.00px;font-size:20px;line-height:24px;color:#b8b8b8;font-weight:normal;letter-spacing:0.3px;-webkit-text-stroke:0.35px #b8b8b8;">89</div>
<div class="t" style="left:1224.26px;top:81.00px;font-size:20px;line-height:24px;color:#b8b8b8;font-weight:normal;letter-spacing:0.3px;-webkit-text-stroke:0.35px #b8b8b8;">97</div>
<div class="t" style="left:1324.94px;top:81.00px;font-size:20px;line-height:24px;color:#b8b8b8;font-weight:normal;letter-spacing:0.3px;-webkit-text-stroke:0.35px #b8b8b8;">105</div>
<div class="t" style="left:1425.63px;top:81.00px;font-size:20px;line-height:24px;color:#b8b8b8;font-weight:normal;letter-spacing:0.3px;-webkit-text-stroke:0.35px #b8b8b8;">113</div>
<div class="t" style="left:1526.32px;top:81.00px;font-size:20px;line-height:24px;color:#b8b8b8;font-weight:normal;letter-spacing:0.3px;-webkit-text-stroke:0.35px #b8b8b8;">121</div>
<div class="t" style="left:1627.01px;top:81.00px;font-size:20px;line-height:24px;color:#b8b8b8;font-weight:normal;letter-spacing:0.3px;-webkit-text-stroke:0.35px #b8b8b8;">129</div>
<div class="t" style="left:1727.70px;top:81.00px;font-size:20px;line-height:24px;color:#b8b8b8;font-weight:normal;letter-spacing:0.3px;-webkit-text-stroke:0.35px #b8b8b8;">137</div>
<div class="t" style="left:1828.38px;top:81.00px;font-size:20px;line-height:24px;color:#b8b8b8;font-weight:normal;letter-spacing:0.3px;-webkit-text-stroke:0.35px #b8b8b8;">145</div>
<div class="t" style="left:1929.07px;top:81.00px;font-size:20px;line-height:24px;color:#b8b8b8;font-weight:normal;letter-spacing:0.3px;-webkit-text-stroke:0.35px #b8b8b8;">153</div>
<div class="t" style="left:2029.76px;top:81.00px;font-size:20px;line-height:24px;color:#b8b8b8;font-weight:normal;letter-spacing:0.3px;-webkit-text-stroke:0.35px #b8b8b8;">161</div>
<div class="t" style="left:2130.45px;top:81.00px;font-size:20px;line-height:24px;color:#b8b8b8;font-weight:normal;letter-spacing:0.3px;-webkit-text-stroke:0.35px #b8b8b8;">169</div>
<div class="t" style="left:2231.14px;top:81.00px;font-size:20px;line-height:24px;color:#b8b8b8;font-weight:normal;letter-spacing:0.3px;-webkit-text-stroke:0.35px #b8b8b8;">177</div>
<div class="t" style="left:2331.82px;top:81.00px;font-size:20px;line-height:24px;color:#b8b8b8;font-weight:normal;letter-spacing:0.3px;-webkit-text-stroke:0.35px #b8b8b8;">185</div>
<div class="t" style="left:2432.51px;top:81.00px;font-size:20px;line-height:24px;color:#b8b8b8;font-weight:normal;letter-spacing:0.3px;-webkit-text-stroke:0.35px #b8b8b8;">193</div>
<div class="t" style="left:12.40px;top:1631.00px;font-size:20px;line-height:24px;color:#b4b4b4;font-weight:normal;letter-spacing:0.6px;-webkit-text-stroke:0.35px #b4b4b4;">0:00</div>
<div class="t" style="left:209.10px;top:1631.00px;font-size:20px;line-height:24px;color:#b4b4b4;font-weight:normal;letter-spacing:0.6px;-webkit-text-stroke:0.35px #b4b4b4;">0:30</div>
<div class="t" style="left:405.80px;top:1631.00px;font-size:20px;line-height:24px;color:#b4b4b4;font-weight:normal;letter-spacing:0.6px;-webkit-text-stroke:0.35px #b4b4b4;">1:00</div>
<div class="t" style="left:602.50px;top:1631.00px;font-size:20px;line-height:24px;color:#b4b4b4;font-weight:normal;letter-spacing:0.6px;-webkit-text-stroke:0.35px #b4b4b4;">1:30</div>
<div class="t" style="left:799.20px;top:1631.00px;font-size:20px;line-height:24px;color:#b4b4b4;font-weight:normal;letter-spacing:0.6px;-webkit-text-stroke:0.35px #b4b4b4;">2:00</div>
<div class="t" style="left:995.90px;top:1631.00px;font-size:20px;line-height:24px;color:#b4b4b4;font-weight:normal;letter-spacing:0.6px;-webkit-text-stroke:0.35px #b4b4b4;">2:30</div>
<div class="t" style="left:1192.60px;top:1631.00px;font-size:20px;line-height:24px;color:#b4b4b4;font-weight:normal;letter-spacing:0.6px;-webkit-text-stroke:0.35px #b4b4b4;">3:00</div>
<div class="t" style="left:1389.30px;top:1631.00px;font-size:20px;line-height:24px;color:#b4b4b4;font-weight:normal;letter-spacing:0.6px;-webkit-text-stroke:0.35px #b4b4b4;">3:30</div>
<div class="t" style="left:1586.00px;top:1631.00px;font-size:20px;line-height:24px;color:#b4b4b4;font-weight:normal;letter-spacing:0.6px;-webkit-text-stroke:0.35px #b4b4b4;">4:00</div>
<div class="t" style="left:1782.70px;top:1631.00px;font-size:20px;line-height:24px;color:#b4b4b4;font-weight:normal;letter-spacing:0.6px;-webkit-text-stroke:0.35px #b4b4b4;">4:30</div>
<div class="t" style="left:1979.40px;top:1631.00px;font-size:20px;line-height:24px;color:#b4b4b4;font-weight:normal;letter-spacing:0.6px;-webkit-text-stroke:0.35px #b4b4b4;">5:00</div>
<div class="t" style="left:2176.10px;top:1631.00px;font-size:20px;line-height:24px;color:#b4b4b4;font-weight:normal;letter-spacing:0.6px;-webkit-text-stroke:0.35px #b4b4b4;">5:30</div>
<div class="t" style="left:2372.80px;top:1631.00px;font-size:20px;line-height:24px;color:#b4b4b4;font-weight:normal;letter-spacing:0.6px;-webkit-text-stroke:0.35px #b4b4b4;">6:00</div>
<div class="t" style="left:2670.00px;top:20.50px;font-size:20px;line-height:22px;color:#111;font-weight:normal;">H</div>
<div class="t" style="left:2711.00px;top:20.50px;font-size:20px;line-height:22px;color:#111;font-weight:normal;">W</div>
<div class="t" style="left:2538.50px;top:104.00px;font-size:20px;line-height:22px;color:#000;font-weight:normal;letter-spacing:0.6px;-webkit-text-stroke:0.3px #000;">Set</div>
<div class="t" style="left:2760px;top:1475px;width:26px;text-align:center;font-size:11px;line-height:16px;color:#9a9a9a;font-weight:bold">I·O</div>
<div class="t" style="left:2760px;top:1513px;width:26px;text-align:center;font-size:13px;line-height:16px;color:#9a9a9a;font-weight:bold">R</div>
<div class="t" style="left:2760px;top:1551px;width:26px;text-align:center;font-size:13px;line-height:16px;color:#9a9a9a;font-weight:bold">M</div>
<div class="t" style="left:2760px;top:1589px;width:26px;text-align:center;font-size:13px;line-height:16px;color:#9a9a9a;font-weight:bold">D</div>
<div class="t" style="left:2565.50px;top:168.00px;font-size:20px;line-height:34px;color:rgba(0,0,0,0.86);font-weight:bold;width:148.50px;overflow:hidden;letter-spacing:0.4px;">1 TRE_126_Kic</div>
<div class="t" style="left:2565.50px;top:206.00px;font-size:20px;line-height:34px;color:rgba(0,0,0,0.86);font-weight:bold;width:148.50px;overflow:hidden;letter-spacing:0.4px;">2 Group</div>
<div class="t" style="left:2575.00px;top:280.00px;font-size:20px;line-height:34px;color:rgba(0,0,0,0.86);font-weight:bold;width:139.00px;overflow:hidden;letter-spacing:0.4px;">3 ZEN_ZMT_1</div>
<div class="t" style="left:2575.00px;top:318.00px;font-size:20px;line-height:34px;color:rgba(0,0,0,0.86);font-weight:bold;width:139.00px;overflow:hidden;letter-spacing:0.4px;">4 TRE_CHat_</div>
<div class="t" style="left:2575.00px;top:356.00px;font-size:20px;line-height:34px;color:rgba(0,0,0,0.86);font-weight:bold;width:139.00px;overflow:hidden;letter-spacing:0.4px;">5 TDT_Clap_1</div>
<div class="t" style="left:2575.00px;top:394.00px;font-size:20px;line-height:34px;color:rgba(0,0,0,0.86);font-weight:bold;width:139.00px;overflow:hidden;letter-spacing:0.4px;">6 Kit_4_UT2_</div>
<div class="t" style="left:2565.50px;top:432.00px;font-size:20px;line-height:34px;color:rgba(0,0,0,0.86);font-weight:bold;width:148.50px;overflow:hidden;letter-spacing:0.4px;">7 Group</div>
<div class="t" style="left:2575.00px;top:506.00px;font-size:20px;line-height:34px;color:rgba(0,0,0,0.86);font-weight:bold;width:139.00px;overflow:hidden;letter-spacing:0.4px;">8 Serum_x64</div>
<div class="t" style="left:2565.50px;top:682.00px;font-size:20px;line-height:34px;color:rgba(0,0,0,0.86);font-weight:bold;width:148.50px;overflow:hidden;letter-spacing:0.4px;">9 Diva</div>
<div class="t" style="left:2565.50px;top:858.00px;font-size:20px;line-height:34px;color:rgba(0,0,0,0.86);font-weight:bold;width:148.50px;overflow:hidden;letter-spacing:0.4px;">10 TA_MK_VO</div>
<div class="t" style="left:2565.50px;top:1034.00px;font-size:20px;line-height:34px;color:rgba(0,0,0,0.86);font-weight:bold;width:148.50px;overflow:hidden;letter-spacing:0.4px;">11 91V_HV_11</div>
<div class="t" style="left:2565.50px;top:1072.00px;font-size:20px;line-height:34px;color:rgba(0,0,0,0.86);font-weight:bold;width:148.50px;overflow:hidden;letter-spacing:0.4px;">12 91V_HV_11</div>
<div class="t" style="left:2565.50px;top:1110.00px;font-size:20px;line-height:34px;color:rgba(0,0,0,0.86);font-weight:bold;width:148.50px;overflow:hidden;letter-spacing:0.4px;">13 PM_PS_150</div>
<div class="t" style="left:2565.50px;top:1148.00px;font-size:20px;line-height:34px;color:rgba(0,0,0,0.86);font-weight:bold;width:148.50px;overflow:hidden;letter-spacing:0.4px;">14 TA_MK_VO</div>
<div class="t" style="left:2565.50px;top:1186.00px;font-size:20px;line-height:34px;color:rgba(0,0,0,0.86);font-weight:bold;width:148.50px;overflow:hidden;letter-spacing:0.4px;">15 ma_melodi</div>
<div class="t" style="left:2565.50px;top:1224.00px;font-size:20px;line-height:34px;color:rgba(0,0,0,0.86);font-weight:bold;width:148.50px;overflow:hidden;letter-spacing:0.4px;">16 Serum_x64</div>
<div class="t" style="left:2565.50px;top:1366.00px;font-size:20px;line-height:34px;color:rgba(0,0,0,0.86);font-weight:bold;width:148.50px;overflow:hidden;letter-spacing:0.4px;">17 DS_MTH_1</div>
<div class="t" style="left:2565.50px;top:1404.00px;font-size:20px;line-height:34px;color:rgba(0,0,0,0.86);font-weight:bold;width:148.50px;overflow:hidden;letter-spacing:0.4px;">18 BOS_DHT_</div>
<div class="t" style="left:2565.50px;top:1442.00px;font-size:20px;line-height:34px;color:rgba(0,0,0,0.86);font-weight:bold;width:148.50px;overflow:hidden;letter-spacing:0.4px;">19 AFP2_Impa</div>
<div class="t" style="left:2565.50px;top:1480.00px;font-size:20px;line-height:34px;color:rgba(0,0,0,0.86);font-weight:bold;width:148.50px;overflow:hidden;letter-spacing:0.4px;">20 Diva</div>
<div class="t" style="left:2565.50px;top:1518.00px;font-size:20px;line-height:34px;color:rgba(0,0,0,0.86);font-weight:bold;width:148.50px;overflow:hidden;letter-spacing:0.4px;">21 MIDI</div>
<div class="t" style="left:2565.50px;top:1556.00px;font-size:20px;line-height:34px;color:rgba(0,0,0,0.86);font-weight:bold;width:148.50px;overflow:hidden;letter-spacing:0.4px;">22 Audio</div>
<div class="t" style="left:2571.00px;top:1594.00px;font-size:20px;line-height:34px;color:rgba(0,0,0,0.86);font-weight:bold;width:143.00px;overflow:hidden;letter-spacing:0.4px;">Master</div>
</div>
</body></html>
